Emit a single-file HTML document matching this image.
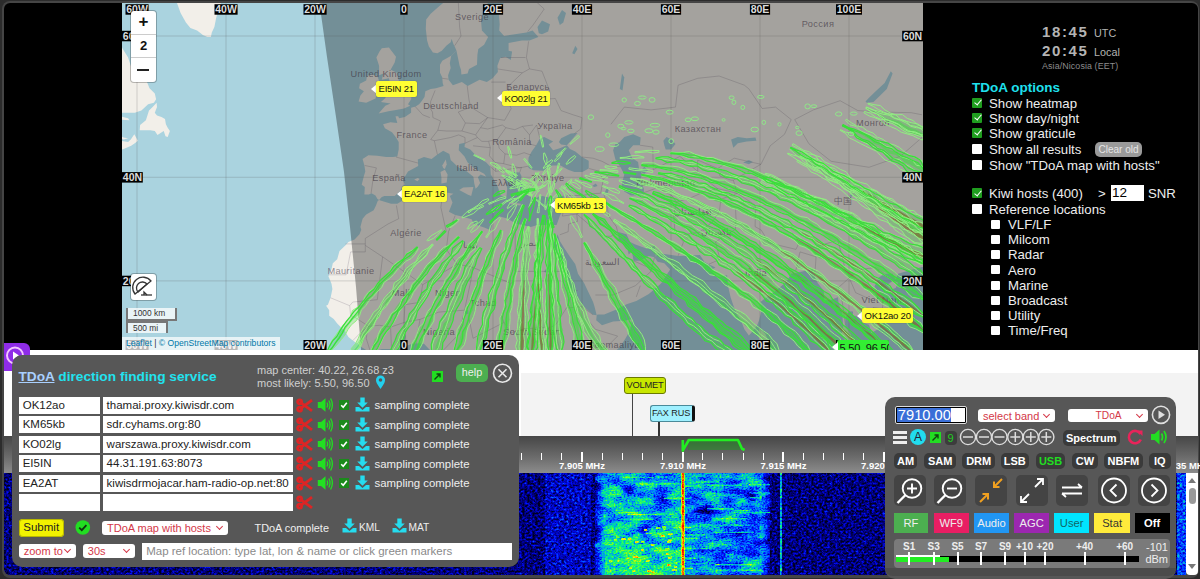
<!DOCTYPE html>
<html><head><meta charset="utf-8">
<style>
*{margin:0;padding:0;box-sizing:border-box}
html,body{width:1200px;height:579px;overflow:hidden;background:#2c2c2c;font-family:"Liberation Sans",sans-serif}
.a{position:absolute}
svg{display:block}
.mk{height:16px;font-size:9.5px;line-height:16px;color:#222;padding-left:2.5px;border-radius:2px;white-space:nowrap;letter-spacing:-0.2px;box-shadow:0 0 1px rgba(0,0,0,.5)}
.rp{color:#eee;font-size:13.2px;white-space:nowrap;line-height:14px}
.cb{width:10px;height:10px;background:#fff;border-radius:1px}
.cbg{background:#1f9d1f}
.cbg::after{content:"";position:absolute;left:3.5px;top:0.5px;width:3px;height:6px;border:solid #fff;border-width:0 1.5px 1.5px 0;transform:rotate(40deg)}
.cbs{width:9px;height:9px;background:#fff;border-radius:1px}
.inp{background:#fff;height:17px;font-size:11.5px;line-height:17px;color:#222;padding-left:4px;white-space:nowrap;overflow:hidden}
.samp{color:#eee;font-size:11.4px;white-space:nowrap;line-height:14px}
.sel{background:#fff;border-radius:3px;color:#d43848;font-size:11px;white-space:nowrap;line-height:14px;padding-left:5px}
.sel i{position:absolute;right:6px;top:3px;width:5px;height:5px;border:solid #d43848;border-width:0 1.5px 1.5px 0;transform:rotate(45deg)}
.mb{background:#3a3a3a;border-radius:5px;color:#fff;font-weight:bold;font-size:11px;text-align:center;line-height:16px;height:16px}
.ib{background:#444;border-radius:5px;width:32px;height:31px}
.tb{height:20px;font-size:11.2px;line-height:20px;text-align:center}
.sm{color:#eee;font-size:10px;font-weight:bold;text-align:center;width:20px;line-height:10px}
.tk{width:2px;height:13px;background:#fff;top:552px}
.fl{color:#fff;font-size:9.5px;font-weight:bold;white-space:nowrap;line-height:10px}
.mt{width:1px;background:#fff;top:453px;height:7px}
</style></head><body>
<!-- frame -->
<div class="a" style="left:1.5px;top:0.8px;width:1197px;height:577px;background:#454545;border-radius:8px"></div>
<!-- top black area -->
<div class="a" style="left:4px;top:3px;width:1194px;height:347px;background:#000;border-radius:6px 6px 0 0"></div>
<svg class="a" style="left:122px;top:3px" width="801" height="347" viewBox="0 0 801 347">
<rect width="801" height="347" fill="#f2efe9"/>
<polygon points="-29.5,359.9 -29.5,-26.0 323.4,-26.0 323.4,-1.9 316.3,4.0 308.7,10.8 304.2,16.6 303.8,25.8 305.1,37.4 306.9,43.5 310.9,49.5 315.4,50.3 319.8,47.8 324.3,42.7 328.7,39.2 329.6,35.7 331.4,40.9 332.7,43.5 334.5,47.8 329.2,52.8 326.1,54.5 320.3,57.8 318.0,61.8 318.0,69.8 320.3,74.5 320.7,79.9 321.6,82.9 314.0,85.2 308.7,85.9 303.4,88.2 302.5,94.1 299.4,98.4 297.1,101.3 293.6,103.4 289.1,104.8 289.1,109.7 282.9,113.9 277.1,115.2 276.2,113.2 273.5,113.2 275.3,120.0 268.6,119.3 261.1,121.3 262.9,125.3 270.0,129.3 274.0,134.5 276.7,139.0 276.7,146.6 275.3,153.4 270.9,154.0 264.2,154.0 255.3,152.8 246.4,152.2 240.6,155.9 242.4,162.5 243.3,168.4 241.9,173.1 239.7,181.8 242.8,184.0 242.4,191.4 246.8,191.4 249.5,190.2 253.5,192.5 255.3,195.8 257.1,196.9 255.7,198.0 254.0,202.4 251.7,207.2 244.2,211.5 240.6,215.7 238.4,224.1 239.3,226.7 237.5,231.3 232.6,236.4 226.4,238.9 223.3,242.4 217.5,247.9 215.2,256.3 210.8,260.2 209.5,266.0 206.4,273.2 209.5,280.8 210.4,285.9 208.6,294.8 205.9,301.7 204.1,302.7 207.2,307.2 207.2,312.7 211.7,315.9 215.2,320.5 219.7,325.0 222.8,327.7 226.4,334.0 230.8,337.6 235.3,340.7 239.7,344.3 246.4,348.3 248.6,349.2 259.8,346.1 268.6,346.1 273.1,347.4 282.0,343.8 288.7,341.2 294.0,340.3 302.0,340.7 306.5,345.6 310.9,349.6 319.8,348.8 324.3,351.4 324.3,359.9" fill="#aad3df" />
<polygon points="339.0,66.7 339.4,71.4 345.6,70.6 347.0,65.9 355.0,61.8 355.4,52.0 356.3,46.1 362.1,41.8 366.1,33.9 359.9,27.6 359.0,17.5 361.2,7.0 366.6,-0.9 366.6,-26.0 382.1,-26.0 382.1,-0.9 376.8,9.9 377.7,21.2 377.2,27.6 382.1,33.0 392.8,31.2 404.4,29.4 410.6,27.6 416.4,33.9 407.5,37.4 399.9,37.4 386.6,40.1 386.6,47.8 390.1,48.6 388.8,57.0 383.5,53.7 378.1,55.3 375.4,62.7 375.9,69.0 370.6,75.3 364.8,79.1 357.6,76.8 345.6,82.9 339.9,79.1 330.9,82.2 326.5,76.8 326.1,72.2 328.7,65.1 327.8,60.2 329.2,52.8 334.5,47.8 337.6,62.7" fill="#aad3df" />
<polygon points="257.1,196.9 259.8,194.1 262.4,193.0 272.7,193.0 278.0,188.0 280.7,182.9 282.9,181.2 280.7,177.2 286.0,168.4 296.2,163.1 295.8,156.5 302.0,154.0 309.6,155.9 315.4,151.6 321.2,147.8 327.4,150.9 328.7,157.1 336.3,164.3 343.4,167.3 351.4,173.7 352.3,180.6 353.6,185.7 355.9,183.5 358.1,180.1 355.9,174.3 358.5,171.4 364.3,173.7 362.1,170.8 353.2,166.1 345.6,159.5 342.5,153.4 336.7,147.2 337.2,140.9 343.0,139.7 342.5,144.1 348.3,146.6 355.0,153.4 364.3,159.5 368.3,163.7 368.8,171.4 371.9,176.6 375.9,184.0 378.6,192.5 384.4,194.1 385.2,185.7 383.5,177.2 382.6,172.5 387.5,173.1 391.0,169.0 397.7,169.6 399.5,173.1 398.6,177.8 402.1,182.9 403.9,190.2 406.6,193.0 413.7,195.8 418.2,192.5 424.4,194.1 433.3,195.2 441.8,192.5 441.3,198.0 441.8,202.9 440.0,208.3 437.8,213.1 434.6,222.0 425.7,222.0 415.5,222.0 408.8,224.1 393.7,220.5 384.4,215.2 377.7,213.6 371.0,218.4 368.8,227.2 362.1,224.6 351.9,221.0 349.6,216.3 339.9,213.6 333.2,212.0 326.9,208.8 330.5,199.6 327.8,193.0 331.4,190.8 325.6,189.7 320.3,191.9 310.9,190.8 299.8,191.9 286.4,194.1 275.3,200.7 269.1,200.7 258.4,197.4" fill="#aad3df" />
<polygon points="406.6,164.9 411.5,167.3 421.3,167.8 430.2,162.5 438.6,162.5 446.2,166.7 452.4,169.0 460.4,169.0 466.7,165.5 466.7,157.7 460.0,154.0 453.3,148.5 448.0,146.0 444.9,142.2 437.8,145.3 431.1,147.2 426.6,141.6 431.1,138.4 422.2,133.9 417.7,135.8 414.2,142.2 409.7,148.5 406.6,154.6 406.2,160.7" fill="#aad3df" />
<polygon points="439.1,141.6 444.9,142.2 448.9,137.7 455.5,130.0 448.9,130.6 439.1,135.2 436.9,139.0" fill="#aad3df" />
<polygon points="493.4,140.9 491.1,147.2 493.4,156.5 498.3,163.7 502.3,171.4 500.0,180.1 499.6,183.5 502.3,188.6 509.0,192.5 521.9,191.9 521.9,185.7 517.9,177.2 520.1,171.4 517.0,165.5 516.1,158.9 510.3,155.2 506.7,147.2 511.2,142.2 517.9,142.2 518.7,134.5 511.2,131.3 502.3,133.9 497.8,139.0" fill="#aad3df" />
<polygon points="541.4,137.7 544.5,133.9 549.9,136.5 553.5,140.9 549.0,146.6 543.7,146.6 542.3,142.2" fill="#aad3df" />
<polygon points="426.6,229.3 429.7,237.9 433.3,246.4 437.8,256.3 442.2,268.4 446.6,277.9 448.9,285.0 453.3,292.0 457.8,299.0 464.5,305.9 471.1,311.8 474.7,312.3 472.5,303.6 471.1,299.0 466.7,289.7 462.2,280.3 456.0,270.8 453.3,261.2 448.0,253.8 442.2,244.9 437.8,237.9 435.5,231.3 433.3,239.9" fill="#aad3df" />
<polygon points="495.6,228.7 504.5,231.3 508.1,238.9 513.4,241.4 524.5,245.4 532.5,242.9 533.0,247.4 533.9,253.8 532.5,254.3 526.8,252.9 517.9,257.8 511.6,257.8 509.8,248.4 506.7,251.4 505.4,245.9 500.9,241.4 496.9,236.4" fill="#aad3df" />
<polygon points="437.8,359.9 494.7,347.0 497.8,344.3 503.6,335.3 508.1,327.2 509.0,321.8 510.3,315.9 502.3,317.7 491.1,318.6 480.0,322.3 474.2,317.3 474.7,312.3 475.6,311.4 482.2,311.4 495.6,305.9 504.5,301.3 514.3,298.0 526.8,291.1 535.6,283.6 539.2,280.3 542.3,275.6 548.1,266.5 542.3,260.2 535.6,258.7 532.5,254.3 533.9,253.8 535.6,249.9 542.3,250.9 556.1,252.9 566.8,252.4 577.9,251.9 582.4,258.7 586.8,261.2 593.5,264.6 589.0,267.0 595.7,274.1 605.1,272.2 606.0,282.7 608.6,294.3 611.3,302.2 614.9,311.4 619.3,318.2 622.4,326.3 626.9,332.6 630.0,329.0 634.9,322.7 637.1,317.3 639.3,308.2 638.4,299.0 643.8,294.8 648.2,292.0 655.8,285.9 664.7,278.4 669.2,270.8 675.8,269.4 684.7,267.4 690.5,266.5 692.7,274.1 695.9,280.3 701.6,287.4 702.5,296.7 707.0,297.6 715.9,294.3 716.8,301.3 720.3,310.4 721.2,324.1 719.4,331.7 724.8,339.8 727.9,346.5 728.3,359.9 742.1,359.9 742.1,347.0 737.2,341.2 731.5,338.0 728.3,330.8 723.4,324.1 723.4,315.0 727.0,308.2 731.0,308.6 731.0,312.3 737.2,314.1 740.4,319.5 747.0,321.8 749.2,328.6 748.4,330.4 755.9,326.3 758.2,322.3 767.9,316.4 768.8,311.4 766.2,299.9 759.5,292.9 752.4,283.6 756.8,274.6 762.6,270.8 770.6,270.8 773.7,276.5 776.0,270.8 787.1,267.4 800.0,264.1 816.0,263.6 816.0,359.9" fill="#aad3df" />
<polygon points="259.8,45.2 266.9,44.6 274.0,53.7 272.7,59.4 268.6,66.7 274.9,69.8 276.7,77.6 281.1,81.4 282.4,85.9 283.3,88.9 289.6,91.9 289.1,96.2 286.0,101.3 288.2,102.7 282.0,105.5 274.0,106.9 266.4,108.3 256.6,110.4 263.3,102.7 268.6,100.6 258.9,99.1 263.8,94.8 261.1,91.1 267.8,86.7 268.6,82.2 266.9,75.3 259.8,76.8 261.5,70.6 257.1,72.2 257.1,62.7 254.4,54.5 257.5,48.6" fill="#f2efe9" />
<polygon points="255.3,73.0 257.5,79.1 254.9,82.9 255.3,89.7 253.5,95.5 244.2,99.8 236.6,98.4 238.4,92.6 241.9,88.2 237.1,85.2 237.9,80.7 244.2,77.6 245.1,73.0 249.5,71.4" fill="#f2efe9" />
<polygon points="337.2,186.9 341.2,184.6 351.4,184.0 349.2,193.0 345.6,191.4" fill="#f2efe9" />
<polygon points="318.5,169.0 322.9,166.7 325.6,171.4 324.7,179.5 319.4,180.6 319.4,174.3" fill="#f2efe9" />
<polygon points="320.3,162.5 323.8,156.5 324.7,161.3 322.9,166.1 321.2,164.9" fill="#f2efe9" />
<polygon points="386.6,199.1 399.0,200.7 398.1,202.4 388.8,201.3" fill="#f2efe9" />
<polygon points="425.7,202.4 428.9,200.2 436.0,198.5 433.3,202.4 428.9,204.5" fill="#f2efe9" />
<polygon points="292.2,176.6 295.8,174.9 297.6,176.0 295.4,178.3" fill="#f2efe9" />
<polygon points="637.1,325.0 643.3,330.8 646.0,337.6 642.5,342.1 638.0,342.1 636.7,333.1" fill="#f2efe9" />
<polygon points="765.3,281.7 771.5,277.5 776.0,279.4 773.7,285.0 769.3,286.4" fill="#f2efe9" />
<polygon points="50.6,-26.0 50.6,-4.9 55.0,0.1 58.6,9.9 63.9,19.4 68.4,24.9 75.1,27.6 80.9,32.1 85.3,33.9 88.9,33.9 89.8,29.4 92.4,24.0 94.2,14.7 96.9,5.0 100.9,-4.9 100.9,-26.0" fill="#f2efe9" />
<polygon points="175.2,-26.0 175.2,-4.9 181.9,-2.9 190.8,0.1 198.3,1.1 206.4,-1.9 213.0,-6.0 217.5,-10.1 217.5,-26.0" fill="#f2efe9" />
<polygon points="-29.5,29.4 -4.6,29.4 -2.8,37.4 0.8,46.1 6.1,54.5 8.8,62.7 12.8,68.2 17.2,72.2 24.8,78.4 27.5,85.2 32.8,90.4 34.1,96.2 31.9,99.8 26.1,101.3 19.4,107.6 12.8,109.7 3.9,109.7 -2.8,109.7 -29.5,109.7" fill="#f2efe9" />
<polygon points="34.6,99.8 30.6,104.1 27.0,107.6 23.9,117.3 18.1,122.0 17.7,127.3 28.3,127.3 32.8,128.0 35.5,131.9 41.7,128.0 43.5,133.2 45.7,133.9 47.9,128.0 45.7,124.7 43.9,121.3 43.0,115.9 39.5,113.9 35.0,112.5 32.8,109.7 35.0,104.1" fill="#f2efe9" />
<polygon points="-29.5,137.7 -2.8,137.7 6.1,139.0 8.8,136.5 12.3,131.3 15.9,137.7 12.8,140.3 9.2,142.8 1.6,146.0 -2.8,147.2 -29.5,147.2" fill="#f2efe9" />
<polygon points="-4.6,131.9 1.6,134.5 6.1,135.2 1.6,136.5 -2.8,135.2" fill="#f2efe9" />
<polygon points="-5.0,112.5 6.1,115.2 7.4,117.3 -0.6,116.6" fill="#f2efe9" />
<polygon points="744.8,99.8 751.5,99.1 758.2,92.6 764.8,85.9 770.6,70.6 768.8,68.2 762.6,79.9 753.7,88.2 747.0,94.8 743.5,98.4" fill="#aad3df" />
<polygon points="609.1,136.5 615.8,133.9 624.7,135.2 633.5,134.5 634.4,137.7 624.7,138.4 615.8,140.3 611.3,144.7" fill="#aad3df" />
<polygon points="415.5,24.0 420.0,17.5 428.0,21.2 426.2,28.5 420.0,31.2 416.8,30.3" fill="#aad3df" />
<polygon points="435.5,14.7 440.0,7.0 444.0,9.9 441.3,19.4 437.8,22.1" fill="#aad3df" />
<polygon points="621.1,159.5 626.9,157.1 630.9,158.9 626.9,161.3" fill="#aad3df" />
<polygon points="482.7,189.7 484.9,184.6 486.7,186.9 485.4,190.8" fill="#aad3df" />
<polygon points="470.2,182.9 473.8,180.6 475.6,182.9 472.5,184.0" fill="#aad3df" />
<polygon points="517.9,168.4 522.3,163.7 525.9,167.3 522.3,170.8" fill="#aad3df" />
<polygon points="450.2,50.3 453.3,42.7 455.5,46.1 452.4,51.2" fill="#aad3df" />
<polygon points="497.8,85.9 500.0,70.6 502.3,74.5 500.5,87.4" fill="#aad3df" />
<polygon points="435.5,-26.0 436.9,-10.1 443.5,-3.9 450.2,-7.0 455.5,-11.1 462.2,-11.1 466.7,-26.0" fill="#aad3df" />
<polygon points="742.6,309.5 747.0,311.4 745.7,312.7 741.7,310.9" fill="#aad3df" />
<polygon points="727.4,193.6 729.2,190.8 731.0,191.9 729.2,194.1" fill="#aad3df" />
<polygon points="342.1,308.2 346.1,306.8 346.5,310.4 343.4,311.4" fill="#aad3df" />
<polygon points="279.8,337.6 282.9,330.8 283.8,333.1 282.0,339.8" fill="#aad3df" />
<polygon points="422.2,268.4 428.4,259.7 429.7,260.7 423.5,269.8" fill="#aad3df" />
<g stroke="#978f9c" stroke-width="0.7" fill="none" stroke-opacity="0.5"><polyline points="336.3,-0.9 337.6,24.0 339.0,33.0 332.7,42.7"/><polyline points="414.6,-0.9 422.2,6.0 411.0,22.1 405.7,28.5"/><polyline points="406.6,38.3 404.4,54.5 407.5,65.9 420.0,68.2 427.5,87.4 422.2,96.2 402.1,99.8 387.0,100.6 386.6,82.9 400.4,69.8 407.5,65.9"/><polyline points="379.0,54.5 403.5,54.5"/><polyline points="375.4,65.9 400.4,69.8"/><polyline points="369.2,79.1 383.5,79.1"/><polyline points="345.2,82.9 347.0,97.0 348.8,104.1 365.7,114.6 382.6,117.3 389.2,105.5 387.0,100.6"/><polyline points="313.1,87.4 308.7,98.4 308.3,105.5 310.5,109.0 310.9,114.6 318.5,118.0 315.8,127.3 324.7,128.0 339.9,128.0 343.4,120.0 336.3,109.0 348.8,104.1"/><polyline points="320.3,75.3 326.1,76.1"/><polyline points="293.1,103.4 300.7,111.8 307.8,114.6"/><polyline points="315.8,127.3 308.7,136.5 312.3,137.7 315.4,151.6"/><polyline points="274.0,154.0 296.2,160.1"/><polyline points="242.8,162.5 254.4,164.9 250.9,177.2 249.1,190.2"/><polyline points="312.3,137.7 328.7,134.5 336.7,131.9 343.0,134.5 343.0,140.3"/><polyline points="339.9,128.0 353.6,131.9 358.5,124.7 365.7,126.0 380.3,122.0 383.9,124.7 375.4,136.5 365.7,138.4 359.9,138.4 355.4,134.5 353.6,131.9"/><polyline points="343.4,120.0 357.6,120.7 365.7,114.6"/><polyline points="358.5,124.7 365.7,114.6"/><polyline points="383.9,124.7 392.8,126.7 400.4,123.4 407.5,131.9 407.5,140.9 414.2,142.8"/><polyline points="409.3,152.2 402.1,149.7 394.6,152.2 383.0,150.9 377.2,145.3 375.4,136.5"/><polyline points="383.0,150.9 381.7,160.7 397.7,164.9 406.6,163.1"/><polyline points="366.6,138.4 368.3,144.7 367.4,152.8 373.2,159.5 381.7,160.7"/><polyline points="343.0,140.3 351.0,136.5 355.4,134.5"/><polyline points="351.0,142.8 368.3,144.7"/><polyline points="368.3,163.7 373.7,168.4 383.9,166.7 399.5,164.3 397.7,169.6"/><polyline points="373.2,159.5 373.7,168.4"/><polyline points="407.5,131.9 414.6,122.0 417.7,134.5"/><polyline points="400.4,123.4 411.0,122.0"/><polyline points="422.2,96.2 433.3,95.5 439.1,107.6 451.1,111.8 460.0,114.6 458.7,126.0 452.4,130.6"/><polyline points="467.1,165.5 475.6,167.8 481.4,176.0 478.7,190.2 470.2,190.8 460.0,192.5 445.3,192.5 443.1,196.9"/><polyline points="460.0,154.0 471.1,155.2 480.0,158.3 488.9,163.1 498.3,163.7"/><polyline points="475.6,167.8 488.9,168.4 482.2,176.0 481.4,176.0"/><polyline points="470.2,190.8 464.5,205.6 454.7,211.0 455.5,218.4 446.6,221.0 446.2,228.7 437.8,231.8"/><polyline points="443.1,196.9 440.4,213.1"/><polyline points="440.4,213.1 454.7,211.0"/><polyline points="454.7,211.0 468.9,223.1 480.9,232.8 488.9,233.4 495.6,228.7"/><polyline points="481.4,189.7 484.5,199.6 486.7,213.1 494.3,223.6 495.6,228.7"/><polyline points="473.4,292.0 491.1,292.0 513.4,282.7 529.0,268.4 527.6,265.0 511.6,257.8"/><polyline points="514.3,293.9 518.3,282.7"/><polyline points="529.0,268.4 532.5,254.3"/><polyline points="393.2,220.5 393.2,268.4 446.2,268.4"/><polyline points="333.2,212.6 326.5,228.7 324.3,246.4 335.0,261.2 348.8,263.6 388.8,280.3 393.2,277.9"/><polyline points="320.3,191.9 318.9,204.5 324.3,228.7"/><polyline points="388.8,280.3 382.1,305.9 379.0,312.7 382.1,319.5"/><polyline points="382.1,319.5 388.8,329.9 402.1,325.9 428.9,324.1 433.7,321.8"/><polyline points="444.4,305.0 433.7,321.8 435.5,337.6 437.8,346.5"/><polyline points="444.4,305.0 451.1,288.3 455.5,287.4"/><polyline points="444.4,305.0 460.0,303.6 471.1,311.8"/><polyline points="473.4,326.3 495.6,333.1 482.2,346.5"/><polyline points="468.0,319.5 473.4,326.3"/><polyline points="274.4,202.4 276.7,215.7 266.0,221.0 243.3,235.4 243.3,242.4 260.6,253.8 287.3,272.2 300.7,281.7 335.0,261.2"/><polyline points="243.3,242.4 243.3,248.9 228.6,248.9 224.1,271.8 206.4,271.8"/><polyline points="223.3,240.9 243.3,240.9"/><polyline points="260.6,253.8 255.3,296.7 230.8,299.0 227.7,302.7"/><polyline points="208.6,294.8 227.7,302.7 228.6,312.7 231.7,313.6 246.4,323.2 257.5,322.3 268.6,324.1 282.0,319.5 298.0,316.4"/><polyline points="300.7,281.7 297.6,299.4 282.9,301.7 282.0,319.5"/><polyline points="298.0,316.4 316.7,309.1 342.5,307.2"/><polyline points="342.5,307.2 337.2,330.8 320.3,348.3"/><polyline points="351.0,263.6 348.8,277.9 342.5,307.2"/><polyline points="351.0,335.3 379.9,320.5 382.1,319.5"/><polyline points="346.5,312.7 351.0,335.3"/><polyline points="268.6,324.1 269.5,346.5"/><polyline points="282.0,319.5 284.2,341.2"/><polyline points="294.0,340.3 298.0,316.4"/><polyline points="246.4,323.2 244.2,335.3 248.6,349.2"/><polyline points="230.8,337.6 237.5,330.8 246.4,323.2"/><polyline points="488.9,121.3 502.3,104.1 529.0,106.9 553.5,104.1 556.1,82.2 575.7,75.3 597.1,73.0 622.4,82.2 626.9,85.9 640.2,105.5 653.6,104.1 669.2,116.6"/><polyline points="669.2,116.6 662.5,131.3 648.2,142.8 638.9,161.3"/><polyline points="638.9,161.3 612.2,155.2 595.7,165.5 575.7,157.1 575.7,168.4 557.9,153.4 531.2,166.7 530.8,144.1 517.9,142.2"/><polyline points="521.9,189.7 535.6,184.6 550.3,193.0 554.3,199.1"/><polyline points="554.3,199.1 551.7,213.1 553.0,229.3 560.1,231.8 577.5,229.3 590.4,218.9 597.5,208.3 598.8,196.3 615.3,190.2"/><polyline points="554.3,199.1 569.0,194.7 580.2,189.7 595.7,185.7 615.3,190.2"/><polyline points="553.0,229.3 561.5,238.9 556.1,252.9"/><polyline points="613.5,205.1 614.0,215.7 613.5,226.2 593.5,238.9 598.0,256.3 586.8,261.2"/><polyline points="633.5,202.4 633.1,223.6 639.3,227.2 646.9,239.9 674.0,246.4 677.2,239.4 691.4,244.4 713.7,237.9"/><polyline points="673.6,268.4 678.0,248.9 694.1,253.8 692.7,273.2"/><polyline points="715.9,237.9 720.3,253.8 723.4,267.9 731.9,270.8"/><polyline points="731.9,270.8 715.9,285.0 720.3,299.0 723.4,321.8"/><polyline points="736.8,266.5 744.8,277.9 760.8,301.3 760.4,305.9"/><polyline points="727.9,276.5 733.7,289.7 749.2,296.7"/><polyline points="738.1,315.0 751.5,304.5 760.4,305.9"/><polyline points="753.7,320.5 751.5,304.5"/><polyline points="736.8,266.5 753.7,264.6 762.6,270.8"/><polyline points="672.7,116.6 687.0,140.9 709.2,158.3 747.0,164.3 778.2,153.4 800.0,134.5"/><polyline points="672.7,116.6 691.4,106.9 718.1,97.7 735.9,107.6 755.9,109.0 789.3,109.7 800.0,111.8"/><polyline points="638.9,161.3 611.3,177.2 615.3,190.2 633.5,202.4"/><polyline points="595.7,165.5 598.0,173.1 609.1,177.2 611.3,177.2"/><polyline points="575.7,168.4 584.6,177.2 595.7,185.7"/><polyline points="-0.1,128.0 -0.1,128.0"/></g>
<g font-family="Liberation Sans" font-size="9.2" fill="#5a4d60" fill-opacity="0.65" letter-spacing="0.4"><text x="350.0" y="17.2" text-anchor="middle">Sverige</text><text x="264.0" y="74.2" text-anchor="middle">United Kingdom</text><text x="329.0" y="106.2" text-anchor="middle">Deutschland</text><text x="406.0" y="87.2" text-anchor="middle">Беларусь</text><text x="290.0" y="135.2" text-anchor="middle">France</text><text x="433.0" y="126.2" text-anchor="middle">Україна</text><text x="390.0" y="141.8" text-anchor="middle">România</text><text x="345.5" y="167.7" text-anchor="middle">Italia</text><text x="267.0" y="178.2" text-anchor="middle">España</text><text x="383.0" y="183.2" text-anchor="middle">Ελλάς</text><text x="576.0" y="128.7" text-anchor="middle">Казахстан</text><text x="543.0" y="183.2" text-anchor="middle">Türkmenistan</text><text x="751.0" y="123.2" text-anchor="middle">Монгол</text><text x="696.0" y="24.2" text-anchor="middle">Россия</text><text x="284.0" y="233.2" text-anchor="middle">Algérie</text><text x="229.0" y="271.2" text-anchor="middle">Mauritanie</text><text x="279.0" y="293.2" text-anchor="middle">Mali</text><text x="325.0" y="293.2" text-anchor="middle">Niger</text><text x="361.0" y="303.2" text-anchor="middle">Tchad</text><text x="317.0" y="332.2" text-anchor="middle">Nigeria</text><text x="410.0" y="332.2" text-anchor="middle">South Sudan</text><text x="492.0" y="345.2" text-anchor="middle">Soomaaliya</text><text x="634.0" y="273.2" text-anchor="middle">India</text><text x="721.0" y="201.2" text-anchor="middle">中国</text><text x="760.0" y="300.2" text-anchor="middle">Viet Nam</text><text x="480.0" y="262.2" text-anchor="middle">السعودية</text><text x="571.0" y="212.2" text-anchor="middle">افغانستان</text><text x="594.0" y="232.2" text-anchor="middle">پاکستان</text><text x="426.0" y="178.2" text-anchor="middle">Türkiye</text><text x="408.0" y="243.2" text-anchor="middle">مصر</text><text x="348.0" y="245.2" text-anchor="middle">ليبيا</text></g>
<polygon points="197.0,-3.0 205.0,54.0 214.0,114.0 222.0,169.0 228.0,224.0 234.0,284.0 239.0,347.0 801,347 801,0" fill="#000" fill-opacity="0.32"/>
<g stroke="#555" stroke-opacity="0.22" stroke-width="1"><line x1="15.0" y1="0" x2="15.0" y2="347" /><line x1="104.0" y1="0" x2="104.0" y2="347" /><line x1="193.0" y1="0" x2="193.0" y2="347" /><line x1="282.0" y1="0" x2="282.0" y2="347" /><line x1="371.0" y1="0" x2="371.0" y2="347" /><line x1="460.0" y1="0" x2="460.0" y2="347" /><line x1="549.0" y1="0" x2="549.0" y2="347" /><line x1="638.0" y1="0" x2="638.0" y2="347" /><line x1="727.0" y1="0" x2="727.0" y2="347" /><line x1="0" y1="33.0" x2="801" y2="33.0" /><line x1="0" y1="174.3" x2="801" y2="174.3" /><line x1="0" y1="277.9" x2="801" y2="277.9" /></g>
<g fill="rgba(60,215,60,0.28)" stroke="none"><polygon points="295.7,244.9 289.9,247.4 284.6,250.5 281.9,256.6 275.7,258.7 270.9,262.5 268.1,268.2 263.7,272.4 259.4,276.6 255.6,281.3 251.2,285.5 246.3,289.2 242.7,294.1 240.7,300.3 235.8,304.1 230.4,307.5 228.9,313.9 224.6,318.2 220.6,322.8 217.1,327.7 213.6,332.6 210.0,337.5 207.3,342.9 205.5,349.0 205.4,349.6 206.7,350.4 207.5,350.2 211.3,345.6 215.5,341.2 219.3,336.6 223.1,331.9 225.9,326.6 229.4,321.8 234.1,317.9 237.5,313.0 239.4,306.9 243.8,302.7 246.9,297.6 251.4,293.5 255.1,288.9 259.5,284.8 262.2,279.2 267.3,275.8 271.5,271.6 275.2,266.9 279.6,262.8 283.6,258.3 289.1,255.6 293.1,251.1 296.4,245.8"/><polygon points="310.2,240.9 306.0,245.1 300.3,248.1 296.7,253.0 293.9,258.5 288.7,261.9 283.9,265.8 281.0,271.3 277.7,276.3 272.3,279.8 270.8,286.2 266.4,290.5 262.4,295.0 259.3,300.2 256.5,305.5 251.5,309.5 248.6,314.8 245.2,319.7 241.6,324.6 238.6,329.8 236.2,335.4 233.4,340.8 229.4,345.3 229.3,349.6 230.3,350.2 233.6,347.9 238.6,344.0 240.6,338.1 242.8,332.5 247.2,328.1 251.6,323.9 253.3,317.9 257.3,313.4 259.5,307.7 264.2,303.6 267.4,298.6 270.5,293.4 273.5,288.2 277.3,283.6 282.0,279.7 286.2,275.4 288.4,269.5 291.3,264.1 295.4,259.8 300.5,256.4 304.8,252.2 307.3,246.4 310.8,241.4"/><polygon points="335.8,233.1 331.4,237.2 327.6,242.0 321.6,244.5 317.2,248.7 314.1,254.1 309.3,257.9 304.8,262.0 301.5,267.1 298.0,272.1 294.5,277.0 290.1,281.2 288.0,287.2 284.1,291.8 279.9,296.2 277.8,302.1 274.2,306.9 269.1,310.8 266.4,316.2 263.2,321.3 258.9,325.8 256.3,331.2 254.8,337.3 251.4,342.3 248.6,347.6 249.7,349.8 250.3,350.2 253.1,350.2 256.1,345.0 259.0,339.8 261.3,334.2 264.7,329.2 268.4,324.5 271.7,319.5 274.7,314.4 277.3,309.0 280.4,303.8 285.1,299.8 288.9,295.2 291.3,289.6 294.9,284.8 298.7,280.2 302.2,275.4 305.1,270.1 309.4,265.8 312.7,260.9 318.2,257.7 321.8,252.9 324.6,247.4 329.2,243.6 332.8,238.7 337.1,234.5"/><polygon points="340.5,237.8 335.5,241.5 330.6,245.3 329.2,251.8 324.9,256.1 320.1,260.1 317.2,265.4 313.7,270.3 310.0,275.1 306.1,279.7 304.9,286.1 299.7,290.0 297.2,295.5 294.9,301.2 291.7,306.2 287.4,310.7 285.8,316.7 282.6,321.8 278.9,326.7 275.2,331.5 273.1,337.2 270.5,342.7 268.0,348.1 269.6,349.8 270.4,350.2 271.6,350.0 276.4,345.7 279.2,340.4 281.8,335.0 283.4,329.1 286.7,324.1 291.1,319.7 293.9,314.4 295.3,308.3 298.6,303.4 302.1,298.5 305.4,293.5 308.0,288.1 310.3,282.4 314.3,277.9 318.6,273.6 321.6,268.5 324.4,263.2 327.5,258.0 331.1,253.3 335.9,249.4 338.9,244.2 341.2,238.4"/><polygon points="359.2,228.0 355.7,232.9 351.6,237.3 346.4,241.0 344.5,247.1 341.0,252.0 335.7,255.7 332.5,260.9 330.1,266.5 327.5,272.0 323.3,276.5 321.4,282.4 317.5,287.2 314.8,292.5 312.1,297.9 310.0,303.6 305.8,308.3 303.5,313.9 301.9,319.8 297.1,324.2 295.4,330.0 293.0,335.6 289.8,340.7 288.7,346.8 290.4,349.7 291.7,350.3 294.6,349.5 298.3,344.6 301.0,339.2 302.2,333.2 305.3,328.1 308.7,323.1 311.9,318.0 312.2,311.5 314.7,306.1 319.4,301.7 321.6,296.2 324.5,291.0 325.7,284.8 328.7,279.6 333.8,275.7 337.1,270.8 338.9,264.9 340.6,258.9 345.2,254.8 348.0,249.5 353.0,245.7 355.0,239.9 357.5,234.2 360.6,229.1"/><polygon points="357.9,244.7 354.1,249.4 349.8,254.0 346.4,259.1 342.9,264.1 341.5,270.1 339.2,275.7 334.7,280.3 333.1,286.2 331.6,292.1 327.8,297.0 326.1,302.9 324.8,308.8 321.1,313.8 317.7,318.9 316.6,325.0 313.2,330.2 310.9,335.7 309.2,341.5 309.7,348.1 310.5,349.4 313.3,350.5 316.9,350.9 320.4,345.9 320.8,339.6 324.1,334.5 325.9,328.8 328.7,323.4 330.9,317.9 331.9,311.8 334.3,306.4 337.4,301.2 340.3,296.0 341.6,290.0 343.2,284.2 345.5,278.7 349.0,273.7 350.6,267.8 353.3,262.5 354.8,256.6 357.3,251.2 359.8,245.7"/><polygon points="379.5,227.8 375.3,232.5 373.0,238.1 370.9,243.7 366.8,248.5 363.7,253.8 363.3,260.1 360.2,265.4 357.0,270.6 356.4,276.8 354.1,282.4 351.5,287.8 349.3,293.4 347.9,299.3 344.1,304.3 342.2,310.1 341.4,316.1 338.5,321.5 335.2,326.8 334.6,332.9 334.1,339.1 332.1,344.7 332.8,349.6 334.4,350.1 338.1,346.7 342.3,341.8 343.9,336.0 344.5,329.9 346.0,324.0 349.1,318.8 351.6,313.3 353.3,307.6 354.1,301.5 356.2,295.9 358.9,290.5 360.2,284.7 361.2,278.6 362.8,272.8 365.3,267.4 369.5,262.6 370.7,256.6 371.9,250.7 373.7,245.0 377.4,240.0 379.8,234.6 380.8,228.4"/><polygon points="401.2,202.1 398.8,207.6 395.8,212.9 393.3,218.4 391.1,224.0 389.6,229.8 386.0,235.0 384.0,240.6 383.8,246.9 379.1,251.7 377.7,257.6 377.1,263.7 375.0,269.4 373.3,275.1 372.4,281.1 369.1,286.4 366.3,291.9 366.5,298.2 364.4,303.8 361.3,309.3 360.3,315.2 360.5,321.5 357.8,327.0 356.0,332.7 355.2,338.7 354.6,344.8 354.4,349.6 356.9,350.2 358.6,345.8 360.9,340.2 364.5,334.9 365.2,328.9 366.4,323.0 366.4,316.8 368.3,311.1 372.3,306.0 373.6,300.2 373.2,293.8 374.3,287.9 377.0,282.4 378.6,276.7 380.3,270.9 382.3,265.3 382.2,259.0 385.0,253.6 387.6,248.2 388.8,242.3 390.4,236.5 392.3,230.8 395.1,225.5 396.7,219.7 399.0,214.2 400.2,208.2 402.4,202.6"/><polygon points="402.7,215.7 400.1,221.2 398.4,227.0 396.6,232.8 395.1,238.6 395.4,244.8 392.6,250.4 391.0,256.2 389.6,262.1 388.0,267.9 386.6,273.8 385.2,279.6 384.5,285.6 382.3,291.3 382.4,297.5 382.3,303.5 380.4,309.3 377.8,315.0 378.2,321.1 377.4,327.1 375.0,332.8 373.8,338.7 375.8,345.1 376.4,349.8 379.9,350.3 382.1,346.0 383.4,340.2 386.0,334.5 387.3,328.6 387.6,322.6 388.1,316.6 387.9,310.6 389.9,304.8 390.2,298.8 391.0,292.8 390.6,286.7 392.7,281.0 393.2,275.0 394.9,269.2 396.4,263.4 396.3,257.3 396.4,251.2 400.1,245.9 401.4,240.1 402.4,234.2 401.4,227.8 402.4,221.8 404.4,216.2"/><polygon points="406.1,223.7 403.3,229.4 402.3,235.4 402.0,241.4 401.5,247.4 401.1,253.4 399.8,259.4 399.6,265.4 398.8,271.4 399.6,277.4 397.9,283.4 397.2,289.3 397.1,295.4 396.6,301.4 395.3,307.3 396.6,313.4 395.8,319.4 395.5,325.4 393.4,331.4 395.3,337.4 393.6,343.4 395.5,349.4 399.0,350.0 400.6,350.0 404.2,349.6 406.0,343.6 406.7,337.6 404.8,331.6 405.8,325.6 406.1,319.7 406.4,313.7 405.3,307.7 404.5,301.6 406.0,295.7 407.1,289.8 407.7,283.8 405.9,277.7 404.8,271.7 406.3,265.8 406.6,259.8 408.4,253.9 406.9,247.8 406.6,241.8 407.2,235.9 408.0,229.9 407.6,223.9"/><polygon points="422.1,212.5 420.0,218.3 418.1,224.1 418.8,230.3 417.7,236.2 415.2,242.0 415.6,248.0 416.1,254.1 412.8,259.9 412.2,265.8 412.9,271.9 411.9,277.9 409.9,283.7 412.0,289.9 410.7,295.9 409.3,301.8 408.1,307.7 410.1,313.9 406.4,319.6 406.5,325.7 407.5,331.8 405.4,337.6 404.6,343.6 408.0,349.8 409.5,350.0 410.6,350.0 412.5,350.1 415.7,344.3 415.4,338.3 415.9,332.3 415.8,326.3 416.4,320.4 417.2,314.4 416.7,308.4 418.2,302.5 416.2,296.3 416.6,290.3 419.3,284.5 419.2,278.5 418.4,272.4 418.3,266.4 419.2,260.5 421.3,254.7 421.0,248.6 420.9,242.6 420.5,236.5 421.6,230.6 423.9,224.8 423.4,218.7 422.9,212.6"/><polygon points="415.3,215.6 415.5,221.6 413.2,227.6 413.0,233.6 413.7,239.6 414.6,245.7 411.7,251.7 413.9,257.7 414.9,263.7 412.4,269.7 413.6,275.7 414.5,281.7 414.5,287.7 413.4,293.8 413.9,299.8 414.5,305.8 413.9,311.8 414.6,317.8 415.6,323.7 414.2,329.8 414.4,335.8 416.7,341.7 417.4,347.7 418.5,350.1 421.2,349.9 423.3,347.4 423.6,341.3 422.2,335.4 421.2,329.4 423.7,323.3 422.3,317.4 422.3,311.4 421.0,305.5 420.6,299.5 420.5,293.5 420.8,287.5 419.2,281.5 419.4,275.5 418.8,269.6 419.1,263.6 419.2,257.6 417.9,251.6 417.1,245.6 418.1,239.6 419.2,233.6 418.6,227.7 416.9,221.7 416.4,215.7"/><polygon points="425.7,217.1 425.0,223.1 425.6,229.1 423.7,235.1 422.7,241.1 424.0,247.1 424.5,253.1 424.1,259.2 424.9,265.2 425.0,271.2 422.5,277.2 423.4,283.2 425.0,289.2 424.1,295.2 423.0,301.2 423.7,307.2 423.1,313.2 424.1,319.2 424.5,325.2 425.0,331.2 423.4,337.3 424.1,343.3 426.8,349.2 427.3,350.1 430.6,349.9 431.0,349.0 432.6,343.0 432.2,337.0 433.0,330.9 432.3,325.0 431.4,319.0 431.8,313.0 430.7,307.0 430.9,301.0 430.5,295.0 430.1,289.0 430.3,283.1 429.7,277.1 429.5,271.1 429.4,265.1 428.7,259.1 428.0,253.1 429.5,247.1 430.0,241.1 429.2,235.1 427.9,229.1 427.6,223.1 427.5,217.1"/><polygon points="428.2,219.9 426.4,226.0 426.6,232.0 428.2,237.9 427.0,244.0 427.5,250.0 427.9,256.0 428.5,262.0 428.3,268.0 430.3,273.9 429.2,280.0 428.5,286.1 430.1,292.0 431.4,297.9 430.1,304.0 431.1,310.0 432.2,315.9 431.8,322.0 431.9,328.0 432.3,334.0 433.3,339.9 434.5,345.8 437.5,350.0 438.4,350.0 440.4,345.3 442.0,339.1 441.2,333.2 439.0,327.4 438.8,321.4 438.1,315.4 439.5,309.3 438.6,303.3 435.7,297.5 436.2,291.5 436.6,285.4 436.5,279.5 434.5,273.6 433.2,267.7 433.5,261.6 434.2,255.6 433.2,249.7 431.3,243.8 431.0,237.8 429.9,231.8 430.8,225.8 429.6,219.8"/><polygon points="431.5,231.2 431.5,237.3 430.8,243.6 433.6,249.1 434.9,255.0 435.6,261.0 437.7,266.7 438.9,272.6 439.6,278.6 439.7,284.7 441.8,290.4 443.6,296.1 444.4,302.1 446.1,307.9 447.8,313.7 447.7,319.9 450.3,325.4 452.1,331.2 451.8,337.4 454.4,343.0 458.0,348.2 460.0,350.3 462.8,349.5 464.2,346.6 462.5,340.9 461.6,334.9 460.0,329.1 459.9,323.0 458.2,317.2 455.6,311.7 452.8,306.2 452.8,300.0 451.9,294.1 449.3,288.6 446.8,283.0 445.9,277.1 444.3,271.3 442.6,265.5 442.0,259.5 438.5,254.2 438.7,248.0 437.3,242.2 435.6,236.4 432.2,231.0"/><polygon points="433.6,236.2 435.4,241.9 436.1,247.9 435.3,254.4 438.4,259.8 440.0,265.6 441.8,271.4 443.9,277.0 446.6,282.5 447.1,288.7 449.4,294.2 452.2,299.6 453.5,305.7 454.0,312.0 459.1,316.4 460.9,322.3 462.0,328.7 465.6,333.8 469.4,338.8 471.7,345.1 477.1,349.3 483.8,351.2 485.2,351.3 486.9,348.5 486.5,347.6 482.7,343.2 478.9,339.2 477.6,333.1 474.2,328.6 469.6,324.6 467.4,319.1 465.3,313.6 463.7,307.9 460.9,302.6 457.3,297.7 454.5,292.4 453.2,286.5 451.9,280.6 448.6,275.5 447.2,269.6 444.4,264.2 444.1,258.1 441.7,252.6 440.4,246.7 436.3,241.7 434.6,235.9"/><polygon points="461.8,240.2 463.6,246.1 467.1,251.0 468.9,256.8 470.2,262.9 473.6,267.9 477.1,272.8 479.5,278.4 481.5,284.1 485.7,288.6 486.7,294.9 489.6,300.2 493.7,304.8 496.4,310.2 497.8,316.2 501.6,321.0 505.2,325.9 506.8,331.8 510.0,336.9 513.9,341.6 517.4,346.6 521.5,350.8 523.4,349.8 523.4,343.3 522.4,337.0 519.9,331.5 516.3,326.6 512.2,322.1 509.9,316.4 507.1,311.2 504.4,305.8 501.0,300.8 497.4,296.0 495.4,290.2 493.4,284.5 489.3,279.9 484.8,275.5 482.0,270.1 480.0,264.4 477.4,259.0 473.8,254.1 469.6,249.6 467.0,244.2 463.9,239.0"/><polygon points="461.9,211.9 466.0,216.3 467.8,222.9 473.0,226.2 476.9,230.8 480.9,235.2 485.4,239.3 489.1,244.0 493.6,248.0 497.4,252.7 502.4,256.2 506.2,260.9 509.6,266.0 514.7,269.3 518.5,274.0 521.5,279.5 526.0,283.6 531.7,286.4 534.4,292.2 538.3,296.8 543.6,300.0 547.4,304.7 551.9,308.7 556.5,312.6 561.1,316.6 564.9,321.3 569.4,325.3 574.2,329.0 579.1,332.6 582.8,337.7 589.1,339.6 593.0,344.5 597.8,348.6 603.9,350.6 610.4,351.3 610.4,351.3 611.5,348.8 611.7,348.4 607.3,344.1 602.0,341.8 598.3,336.9 593.4,333.7 587.4,331.9 583.1,327.8 579.1,323.2 573.9,320.2 570.2,315.3 564.8,312.4 560.5,308.3 556.1,304.3 552.9,298.9 547.9,295.6 542.2,292.8 537.9,288.6 534.9,283.1 531.0,278.5 526.7,274.4 520.7,271.9 516.9,267.3 513.1,262.6 510.1,257.1 504.3,254.4 500.5,249.7 496.6,245.2 493.1,240.2 489.1,235.7 483.3,233.0 479.6,228.3 475.6,223.8 471.7,219.2 467.1,215.3 462.5,211.4"/><polygon points="471.0,211.4 474.9,216.0 478.2,221.3 483.6,224.2 488.5,227.8 491.9,233.0 496.1,237.3 501.1,240.6 504.7,245.6 509.5,249.3 514.0,253.3 518.5,257.2 523.0,261.3 527.1,265.7 531.7,269.5 535.3,274.4 539.9,278.3 546.0,280.5 549.7,285.3 553.0,290.8 557.9,294.2 563.4,297.1 566.1,303.1 571.3,306.3 576.3,309.7 580.3,314.2 585.0,317.9 590.5,320.9 594.2,325.7 598.2,330.3 603.7,333.1 608.2,337.1 611.4,342.6 616.5,346.0 622.0,348.8 626.7,352.6 629.1,351.1 631.1,348.6 631.7,346.3 627.0,342.5 623.2,337.8 619.4,333.1 614.9,329.2 609.9,325.9 604.4,323.1 600.2,318.7 595.2,315.3 590.9,311.2 586.6,307.0 580.7,304.6 577.0,299.7 573.6,294.5 568.1,291.7 563.4,288.0 558.1,284.9 553.8,280.7 550.0,276.0 545.4,272.2 539.7,269.5 535.9,264.7 531.9,260.2 528.1,255.5 522.1,253.1 518.0,248.8 512.5,245.9 508.9,241.0 505.2,236.1 500.4,232.5 495.0,229.6 490.1,226.0 486.0,221.5 482.6,216.4 476.6,214.1 471.5,210.8"/><polygon points="491.8,217.2 496.9,220.5 500.8,225.3 504.9,229.8 510.5,232.3 515.7,235.4 519.7,240.1 524.0,244.4 530.4,245.8 534.6,250.2 538.9,254.4 544.6,256.8 548.9,261.1 553.0,265.6 558.6,268.2 563.2,272.0 567.3,276.5 572.3,279.9 577.3,283.1 581.3,287.9 586.2,291.2 590.8,295.1 595.0,299.5 599.1,303.9 605.1,306.0 609.2,310.4 613.3,314.8 618.5,317.9 623.7,321.1 627.3,326.1 632.2,329.6 636.8,333.3 641.4,337.1 645.2,341.8 649.3,346.0 654.5,349.2 656.9,351.0 658.6,349.4 657.0,346.9 654.9,340.5 650.4,336.4 646.7,331.4 641.6,328.0 636.8,324.3 631.9,320.7 627.7,316.4 623.7,311.8 618.5,308.6 612.7,306.2 608.3,302.1 604.4,297.3 599.9,293.4 594.6,290.4 589.2,287.5 585.2,282.8 581.4,278.0 575.8,275.3 570.4,272.5 565.8,268.7 561.1,264.9 557.3,259.9 551.9,257.1 545.9,255.2 541.1,251.5 537.3,246.7 532.7,242.7 527.2,240.1 522.3,236.6 517.3,233.2 513.1,228.8 507.9,225.7 503.3,221.9 497.7,219.4 492.6,216.1"/><polygon points="483.9,200.9 488.3,205.2 493.6,207.9 498.3,211.7 503.7,214.3 508.6,217.9 514.7,219.5 519.1,223.7 524.2,226.9 529.4,229.8 534.2,233.5 539.1,236.9 544.4,239.8 549.6,242.7 553.4,247.9 559.0,250.2 564.5,252.8 568.1,258.2 574.4,259.6 579.4,262.9 583.5,267.4 587.9,271.7 594.4,272.8 598.7,277.1 602.7,281.7 608.0,284.6 613.5,287.2 616.9,292.7 622.3,295.4 627.8,298.1 630.9,303.8 636.4,306.5 641.7,309.6 645.3,314.5 649.7,318.6 655.3,321.2 658.9,326.1 662.2,331.3 667.6,334.3 672.1,338.1 675.7,343.0 680.4,346.7 685.7,349.8 687.2,350.7 689.2,348.9 688.2,347.6 685.5,341.8 680.9,337.9 677.4,332.8 673.4,328.2 668.1,324.9 663.2,321.3 658.6,317.4 655.0,312.3 649.8,309.2 644.6,305.9 640.3,301.8 635.9,297.6 631.7,293.2 626.8,289.7 620.6,287.8 616.2,283.6 611.3,280.1 606.9,276.0 602.0,272.5 596.8,269.4 591.2,266.9 587.0,262.5 581.8,259.4 576.8,256.1 571.6,253.0 566.1,250.4 561.8,246.0 557.1,242.2 552.0,239.1 546.2,237.0 541.3,233.5 536.7,229.6 531.7,226.1 526.5,223.2 520.5,221.4 515.7,217.9 511.1,213.8 505.6,211.3 500.3,208.4 495.0,205.6 489.6,203.0 484.8,199.3"/><polygon points="506.9,203.3 511.8,206.8 516.8,210.2 522.6,212.0 527.2,216.1 532.5,218.9 537.9,221.5 543.0,224.8 547.0,229.7 553.4,230.6 558.3,234.2 562.8,238.2 568.1,241.1 574.2,242.6 577.7,248.2 582.4,251.9 589.2,252.5 593.9,256.3 597.2,261.9 602.8,264.4 608.5,266.7 612.6,271.2 617.8,274.3 622.4,278.1 626.8,282.2 631.3,286.1 636.9,288.7 640.9,293.2 644.5,298.2 650.8,300.0 654.5,304.9 659.4,308.4 663.4,312.8 669.3,315.1 671.6,321.5 677.2,324.2 681.5,328.4 685.6,332.7 688.8,337.9 694.6,340.6 698.9,344.8 703.3,348.8 708.5,350.5 709.3,349.7 707.5,344.6 705.3,338.3 700.9,334.2 695.5,331.0 690.7,327.4 686.8,322.6 683.5,317.4 677.7,314.7 673.2,310.8 668.4,307.0 664.6,302.2 660.4,297.8 654.5,295.5 650.3,291.1 644.4,288.8 640.2,284.4 635.8,280.2 631.5,276.0 626.1,273.2 620.7,270.2 616.3,266.1 612.0,261.8 606.1,259.7 601.3,256.1 595.8,253.4 591.9,248.4 587.3,244.5 580.8,243.5 575.3,240.8 570.7,236.9 566.6,232.0 561.2,229.3 554.9,228.1 549.5,225.5 545.0,221.3 539.8,218.2 534.6,215.2 528.7,213.5 523.5,210.4 518.7,206.6 513.5,203.6 507.5,202.2"/><polygon points="508.2,194.9 513.6,197.3 518.3,201.4 523.5,204.4 528.9,207.0 534.2,209.8 539.0,213.4 544.8,215.3 550.0,218.2 555.0,221.5 560.8,223.4 565.5,227.2 570.1,231.1 576.0,233.0 580.9,236.4 585.0,241.0 590.1,244.1 595.8,246.4 600.1,250.6 604.9,254.2 610.6,256.5 614.6,261.2 619.1,265.2 624.3,268.2 629.1,271.7 632.9,276.5 637.9,279.8 643.1,282.8 647.4,287.1 651.4,291.6 656.6,294.7 662.0,297.4 664.7,303.5 670.8,305.6 675.3,309.5 679.1,314.2 683.6,318.2 687.9,322.3 692.3,326.3 696.5,330.5 700.6,335.0 704.8,339.2 709.0,343.4 713.5,347.4 719.5,349.8 722.7,351.3 725.3,348.7 723.6,345.7 720.7,340.0 717.5,334.7 712.4,331.3 707.7,327.4 703.6,323.0 699.0,319.1 695.0,314.5 690.5,310.6 686.3,306.1 680.8,303.2 676.1,299.5 672.3,294.6 667.5,291.0 662.4,287.6 657.3,284.4 652.8,280.4 649.1,275.3 644.3,271.7 638.6,269.2 632.9,266.7 629.1,261.7 624.2,258.1 619.6,254.3 613.5,252.3 609.0,248.3 604.2,244.6 599.4,241.0 594.4,237.6 588.8,235.1 583.9,231.6 578.8,228.5 573.7,225.3 569.0,221.4 562.8,220.0 557.4,217.3 553.1,212.7 547.7,209.8 541.9,208.0 536.6,205.1 530.6,203.6 525.6,200.2 520.6,196.6 514.6,195.3 508.5,194.1"/><polygon points="497.2,184.1 502.6,186.8 508.2,188.9 513.8,190.9 519.1,193.8 525.2,194.7 530.1,198.4 534.8,202.6 540.6,204.2 546.6,205.6 550.9,210.4 556.8,211.9 562.7,213.4 567.0,218.0 572.1,221.2 578.1,222.8 583.0,226.2 587.1,231.1 592.7,233.2 598.4,235.4 603.0,239.2 608.1,242.4 613.2,245.6 617.3,250.1 622.3,253.5 627.9,255.9 632.1,260.2 636.3,264.7 642.5,266.3 647.0,270.2 650.8,275.1 655.9,278.2 661.7,280.5 664.7,286.3 669.8,289.6 675.9,291.5 678.8,297.4 683.2,301.4 689.4,303.3 693.0,308.4 697.4,312.4 702.6,315.5 707.2,319.4 709.9,325.3 714.8,328.7 719.5,332.5 724.2,336.2 728.1,340.8 732.5,344.8 736.2,349.6 742.0,352.2 744.7,350.4 745.7,349.3 746.2,347.8 744.0,341.4 739.3,337.6 734.8,333.6 730.5,329.4 725.8,325.6 721.0,322.0 717.6,316.7 712.7,313.2 707.2,310.3 702.9,306.0 698.3,302.1 694.3,297.6 689.6,293.8 684.4,290.6 679.0,287.7 675.8,282.1 670.5,279.0 665.6,275.5 660.8,271.9 655.3,269.1 651.2,264.6 646.6,260.6 641.6,257.3 635.6,255.3 631.6,250.5 626.9,246.7 622.2,243.0 616.2,241.0 611.1,237.8 606.3,234.2 601.0,231.3 596.7,226.7 590.9,224.7 585.2,222.5 580.7,218.2 575.6,215.0 570.0,212.7 563.9,211.2 558.9,207.9 554.1,204.0 548.8,200.9 542.8,199.6 536.8,198.2 531.9,194.6 526.4,191.9 520.8,189.7 515.4,186.9 509.1,186.6 503.3,185.0 497.7,182.6"/><polygon points="531.0,190.0 536.2,193.2 541.6,195.8 547.6,197.1 552.1,201.5 557.9,203.1 563.9,204.5 568.5,208.8 573.9,211.2 579.9,212.8 584.1,217.5 589.7,219.7 594.9,222.7 599.9,226.1 605.0,229.0 610.1,232.2 615.1,235.5 620.4,238.2 625.1,242.0 630.9,244.1 634.9,248.9 640.4,251.4 645.3,254.9 650.1,258.4 654.7,262.3 660.1,265.0 665.0,268.4 668.7,273.6 673.8,276.6 679.5,279.0 683.1,284.2 688.1,287.6 693.3,290.5 697.8,294.4 701.7,299.1 707.5,301.5 711.8,305.7 715.4,310.8 720.7,313.8 726.3,316.4 729.6,321.7 734.7,324.9 739.8,328.2 743.5,333.1 748.2,336.8 753.7,339.6 757.5,344.3 761.6,348.7 767.4,351.2 768.7,350.3 769.7,349.3 770.9,347.4 766.9,342.8 761.8,339.5 757.1,335.8 753.1,331.2 748.7,327.1 743.7,323.6 739.1,319.8 734.4,316.0 730.1,311.8 725.9,307.4 721.2,303.7 716.3,300.2 711.1,297.0 707.7,291.6 702.4,288.6 697.3,285.3 691.7,282.8 687.5,278.4 682.9,274.4 678.2,270.8 672.9,267.8 667.4,265.1 663.2,260.6 658.8,256.5 654.1,252.7 648.6,250.0 642.8,247.8 638.1,244.1 633.8,239.6 628.1,237.3 623.2,233.8 617.9,231.0 613.4,226.8 608.2,223.7 602.4,221.8 597.0,219.0 592.2,215.3 586.8,212.5 581.2,210.2 575.7,207.8 570.4,205.0 564.6,203.0 559.7,199.4 554.6,196.2 548.8,194.3 542.8,192.9 537.4,190.2 531.6,188.5"/><polygon points="508.3,175.9 513.9,178.2 519.1,181.6 525.0,182.6 531.0,183.6 536.3,186.3 541.7,189.0 547.7,190.1 553.3,192.1 558.2,195.9 564.5,196.3 569.1,200.6 574.9,202.4 580.1,205.4 585.5,207.9 590.2,211.8 596.0,213.5 602.2,214.8 606.3,219.6 611.5,222.6 617.5,224.2 621.7,228.7 626.9,231.7 632.4,234.2 637.8,236.8 641.6,242.0 647.9,243.3 652.6,247.0 657.4,250.6 662.0,254.4 668.2,256.0 672.3,260.5 676.2,265.5 682.7,266.6 687.0,270.9 690.8,275.8 696.7,277.8 701.5,281.5 705.6,286.0 710.1,289.9 716.1,291.9 719.7,297.1 725.0,300.0 730.5,302.7 734.7,307.0 738.5,311.8 744.0,314.6 748.0,319.1 751.8,323.9 757.0,327.0 761.9,330.5 766.7,334.1 771.1,338.2 775.9,341.8 779.8,346.4 785.0,349.5 790.7,350.3 791.6,349.4 789.5,344.4 785.9,339.3 780.8,336.0 776.6,331.7 772.0,327.7 767.8,323.5 762.9,319.9 757.6,316.9 752.4,313.8 748.9,308.4 744.0,305.0 738.5,302.3 734.1,298.1 729.5,294.3 724.8,290.4 720.3,286.5 715.4,282.9 709.8,280.4 705.0,276.8 701.0,272.0 696.3,268.2 690.7,265.7 685.1,263.2 681.0,258.6 676.1,255.1 671.4,251.2 666.0,248.5 659.9,246.8 655.8,242.1 651.1,238.3 646.1,234.9 640.3,232.8 635.0,229.9 629.9,226.7 625.6,222.1 620.1,219.6 614.5,217.3 609.2,214.3 604.3,210.8 598.4,209.1 593.5,205.3 587.5,203.8 582.1,201.3 576.8,198.3 571.3,195.8 565.5,194.1 559.5,192.7 554.3,189.7 549.4,185.7 543.9,183.1 537.4,183.4 532.0,180.6 526.4,178.3 520.6,176.5 514.6,175.5 508.5,175.1"/><polygon points="519.6,172.6 525.4,173.8 531.0,176.4 536.9,177.4 542.9,178.1 548.3,181.2 553.9,183.3 560.1,183.5 565.4,186.2 570.8,188.9 576.9,189.6 582.2,192.6 587.1,196.4 593.6,196.3 599.3,198.2 604.1,202.2 609.3,205.0 615.2,206.5 620.3,209.7 625.8,212.2 631.2,214.7 637.0,216.5 641.3,221.1 646.8,223.5 652.5,225.6 657.3,229.2 662.7,231.8 668.0,234.7 673.0,237.9 677.3,242.4 683.1,244.3 688.2,247.5 692.3,252.1 698.3,253.8 703.2,257.2 707.2,262.0 712.4,265.0 718.1,267.2 722.5,271.4 727.1,275.3 732.7,277.7 737.7,281.0 741.8,285.5 747.1,288.4 751.6,292.4 755.7,296.8 760.2,300.9 765.6,303.6 770.5,307.1 774.0,312.3 780.1,314.2 784.0,318.9 787.7,323.8 793.8,325.9 799.1,328.8 801.8,330.4 804.0,327.8 801.9,325.5 798.8,319.7 793.6,316.7 789.1,312.6 784.5,308.7 779.9,304.8 775.0,301.3 770.2,297.8 766.6,292.5 761.2,289.7 755.4,287.4 750.6,283.7 745.9,280.0 742.0,275.1 737.0,271.7 731.2,269.4 726.3,266.0 721.3,262.6 716.6,258.8 711.5,255.6 705.8,253.3 701.6,248.8 696.7,245.3 691.4,242.4 686.2,239.2 680.6,236.8 675.8,233.1 670.4,230.5 665.6,226.7 659.7,225.1 654.4,222.1 649.6,218.3 644.3,215.6 639.2,212.2 633.4,210.4 627.8,208.0 622.4,205.3 617.6,201.5 612.0,199.2 605.6,198.8 600.0,196.5 594.8,193.4 589.9,189.4 583.8,188.3 578.2,186.2 572.2,185.0 566.9,181.8 561.3,179.6 555.3,178.5 549.4,177.2 543.4,176.2 537.7,174.2 531.8,172.9 525.9,171.7 519.7,171.8"/><polygon points="536.4,170.9 542.3,172.0 547.8,174.4 553.5,176.5 559.6,176.8 565.2,179.0 570.3,182.4 576.1,184.0 582.3,184.4 587.3,188.0 592.8,190.3 598.7,191.6 604.7,192.7 609.4,197.0 615.4,198.2 620.6,201.0 625.9,204.0 631.7,205.7 637.3,207.8 642.0,211.8 647.0,215.1 652.6,217.2 658.1,219.8 662.5,224.1 669.1,224.6 674.4,227.4 678.9,231.6 684.0,234.6 689.8,236.7 693.8,241.5 698.7,244.9 704.9,246.4 709.3,250.6 714.3,253.9 719.1,257.5 724.5,260.2 729.2,263.8 733.8,267.8 739.4,270.2 743.5,274.8 748.3,278.3 754.1,280.5 758.7,284.4 762.9,288.8 769.1,290.4 773.6,294.5 776.8,300.1 783.0,301.8 787.1,306.4 791.6,310.4 797.2,312.9 802.8,314.3 803.9,312.8 800.0,309.2 796.1,304.5 791.7,300.3 787.5,295.9 782.4,292.7 777.0,289.8 771.2,287.6 767.6,282.4 762.3,279.4 757.4,275.8 751.9,273.3 747.5,269.0 742.5,265.6 737.6,262.2 733.0,258.2 727.6,255.5 722.0,253.1 718.1,248.1 713.1,244.7 707.2,242.7 701.4,240.7 696.5,237.1 691.6,233.6 687.4,229.0 681.6,226.9 675.7,225.1 670.5,222.1 666.3,217.2 660.3,215.7 654.9,213.0 649.3,210.6 644.6,206.7 639.3,203.7 633.2,202.5 627.9,199.7 622.0,198.2 617.1,194.3 611.4,192.3 605.9,189.8 599.7,189.1 594.3,186.4 588.8,183.9 583.7,180.4 577.4,180.2 571.8,177.7 566.1,176.0 560.5,173.5 554.6,172.2 548.9,170.3 542.6,170.6 536.7,169.6"/><polygon points="519.9,161.2 525.8,162.6 531.5,164.5 537.5,164.7 543.4,166.0 549.0,167.9 555.4,167.1 561.0,169.4 566.6,171.5 572.4,172.9 578.0,174.8 583.3,177.9 589.3,178.7 595.2,180.1 600.1,183.8 605.8,185.6 611.5,187.4 616.8,190.2 622.2,193.0 628.4,193.6 633.5,196.8 638.2,200.8 644.6,201.3 649.9,204.2 654.9,207.4 660.2,210.2 666.1,211.9 670.4,216.5 676.1,218.6 682.0,220.1 686.6,224.2 691.0,228.5 697.4,229.4 702.3,233.0 706.6,237.4 712.2,239.6 717.8,242.0 721.9,246.7 726.6,250.4 732.3,252.6 737.5,255.5 742.2,259.3 747.2,262.6 752.0,266.1 756.3,270.4 762.4,272.1 767.5,275.3 771.9,279.5 776.2,283.6 782.6,285.1 786.0,290.6 790.4,294.6 797.4,295.2 802.6,296.6 803.9,294.7 800.5,290.9 796.5,286.1 791.8,282.4 787.7,277.7 782.1,275.3 776.6,272.7 772.1,268.5 767.2,265.0 762.0,262.0 757.4,258.0 751.3,256.4 745.9,253.6 741.7,249.1 736.7,245.6 731.6,242.5 726.2,239.8 720.7,237.1 716.1,233.1 710.9,230.2 705.3,227.7 699.4,225.8 695.2,221.1 689.9,218.3 685.1,214.5 678.7,213.6 673.2,211.2 668.4,207.4 663.2,204.3 657.9,201.5 651.9,200.0 646.4,197.6 641.6,193.7 635.9,191.6 630.2,189.4 624.7,187.0 618.8,185.5 613.6,182.3 607.9,180.4 602.7,177.1 596.2,177.1 590.4,175.7 584.9,173.1 579.3,170.9 573.7,168.2 567.2,169.2 561.9,165.8 556.1,163.9 550.1,163.2 543.9,163.0 537.9,162.7 532.2,160.0 526.1,159.7 520.1,159.8"/><polygon points="533.9,155.7 539.8,156.7 545.5,159.6 551.6,158.8 557.6,159.0 563.2,161.7 568.9,163.4 575.2,162.8 580.4,166.6 586.0,168.5 592.4,168.1 597.9,170.6 603.0,174.1 609.1,174.6 615.0,176.0 619.9,180.0 625.7,181.5 631.6,182.8 636.4,186.8 642.4,188.0 648.3,189.2 653.5,192.4 658.1,196.6 664.1,197.8 669.7,200.0 674.7,203.5 679.9,206.3 685.3,208.8 690.9,211.1 696.3,213.7 701.2,217.1 706.2,220.4 711.6,223.0 717.0,225.7 722.6,227.9 727.3,231.7 732.0,235.5 738.0,237.2 742.5,241.2 747.4,244.8 753.3,246.6 757.9,250.4 762.2,254.8 767.8,257.2 772.9,260.3 777.2,264.7 782.9,266.8 788.5,269.2 791.9,274.9 799.0,275.1 802.8,275.3 803.9,273.7 801.6,271.1 797.7,266.1 792.1,263.8 787.7,259.6 783.0,255.7 777.9,252.6 771.8,250.8 766.8,247.5 762.5,243.0 757.2,240.1 751.5,238.0 746.4,234.8 741.5,231.3 736.2,228.4 731.1,225.1 725.7,222.5 720.1,220.1 715.2,216.6 709.8,213.9 704.6,210.8 699.1,208.3 693.7,205.7 688.0,203.5 683.8,198.6 677.6,197.5 672.2,194.7 666.0,193.9 661.0,190.3 655.7,187.3 650.2,184.9 643.9,184.3 638.6,181.3 633.6,177.7 627.7,176.1 622.3,173.4 616.1,172.8 610.4,170.9 604.9,168.2 599.1,166.7 593.1,165.6 587.4,163.6 581.3,163.0 575.8,160.5 570.2,157.7 563.9,158.1 557.9,157.4 552.0,156.3 546.3,153.9 540.1,153.9 534.0,154.9"/><polygon points="548.8,150.3 554.9,150.5 560.6,152.9 566.2,155.2 572.6,153.6 578.4,154.8 583.7,158.6 590.0,157.7 595.6,160.2 601.2,162.2 607.0,163.7 612.7,165.3 618.2,167.7 623.8,169.9 629.7,171.0 635.3,173.3 640.1,177.3 646.5,177.5 652.0,179.7 656.8,183.8 662.8,184.9 668.2,187.4 673.2,191.0 678.6,193.3 685.0,193.9 689.7,198.0 694.9,201.0 700.7,202.7 705.7,206.1 711.0,208.8 716.0,212.1 721.6,214.3 726.0,218.8 731.3,221.6 737.3,223.0 742.4,226.2 746.5,231.0 752.6,232.5 757.4,236.1 762.0,240.1 767.8,242.0 773.2,244.6 778.1,248.1 783.1,251.4 788.3,254.4 793.1,258.0 798.2,261.1 802.8,260.3 803.7,258.9 801.9,255.4 796.5,252.7 791.8,248.8 786.6,245.8 782.0,241.8 777.3,237.9 771.5,235.9 765.7,233.9 760.7,230.5 756.4,226.0 751.2,223.0 745.3,221.1 739.9,218.4 734.9,215.0 730.4,210.8 724.3,209.3 718.4,207.6 713.2,204.6 708.3,201.0 703.5,197.2 697.8,195.0 691.5,194.3 686.3,191.1 681.5,187.2 675.7,185.4 670.2,183.0 664.1,181.9 659.3,177.9 653.9,175.2 648.4,172.6 642.3,171.7 636.8,169.1 631.3,166.7 625.4,165.3 620.2,162.0 614.0,161.2 608.2,159.7 602.2,158.6 596.5,156.6 590.8,154.5 584.6,154.7 578.8,152.9 573.0,151.3 567.4,148.5 561.1,149.4 555.0,149.7 549.0,149.0"/><polygon points="640.8,175.4 645.5,179.5 651.5,180.9 656.3,184.7 661.3,188.0 666.6,190.9 672.7,192.1 677.3,196.4 682.2,200.0 688.0,201.9 693.4,204.4 698.7,207.3 704.2,209.7 709.3,212.8 714.1,216.7 720.3,217.7 725.5,220.7 729.7,225.8 735.9,226.8 741.3,229.3 746.2,233.1 751.5,235.8 756.6,239.0 762.2,241.3 767.1,244.8 772.7,247.0 778.0,250.0 782.4,254.5 788.3,256.1 794.2,257.7 799.9,259.7 802.1,256.8 803.4,254.2 804.6,250.2 800.8,244.4 795.3,242.0 789.0,241.2 783.7,238.4 778.6,235.2 772.9,233.1 767.5,230.5 761.2,229.6 756.3,226.0 751.7,221.9 745.6,220.6 739.7,219.0 734.0,217.1 729.2,213.3 723.6,210.9 718.1,208.5 713.0,205.3 706.6,204.8 701.8,200.9 696.8,197.6 691.0,195.8 684.8,194.8 679.6,191.6 674.4,188.6 669.6,184.9 663.5,183.7 658.1,180.9 652.2,179.3 646.6,177.2 641.4,174.2"/><polygon points="667.8,146.4 672.4,150.4 677.0,154.5 682.8,156.3 688.1,159.1 692.1,164.2 698.4,165.3 703.5,168.4 707.9,172.9 712.8,176.3 718.6,178.3 722.7,183.2 727.7,186.4 733.7,188.1 737.9,192.8 743.3,195.4 748.1,199.1 753.3,202.1 758.3,205.4 763.6,208.4 768.3,212.1 773.3,215.4 778.0,219.2 784.4,220.3 788.2,225.6 792.9,229.3 800.3,228.7 802.3,226.1 803.6,223.9 805.1,220.6 801.6,214.8 796.4,211.8 790.2,210.4 785.7,206.3 780.9,202.7 775.1,200.7 769.9,197.6 764.4,195.1 759.1,192.3 754.4,188.5 748.7,186.3 742.5,185.0 737.3,182.1 732.5,178.4 727.8,174.5 722.4,171.8 716.8,169.6 710.8,167.8 705.7,164.7 701.0,160.8 695.7,158.0 689.9,156.0 684.8,152.9 679.9,149.3 674.1,147.3 668.2,145.6"/><polygon points="677.8,153.3 683.0,156.3 686.6,161.8 691.8,164.8 697.3,167.4 701.5,171.8 706.7,174.8 712.5,177.0 717.1,180.8 721.1,185.5 726.6,188.2 731.1,192.2 735.4,196.5 740.9,199.1 745.3,203.3 749.6,207.7 754.1,211.7 759.9,213.8 765.1,216.8 768.3,222.7 774.3,224.6 779.6,227.5 783.2,232.8 788.0,236.4 793.1,239.6 799.8,240.5 801.8,238.8 804.4,235.0 804.9,233.1 801.3,227.8 797.4,222.9 792.9,218.9 787.5,216.1 781.4,214.4 776.7,210.6 771.3,207.9 767.2,203.2 761.6,200.7 756.1,198.2 750.3,196.1 746.1,191.6 741.7,187.3 735.3,186.0 730.3,182.7 725.5,179.1 720.3,176.0 716.1,171.6 709.8,170.2 704.5,167.3 699.3,164.2 694.9,160.0 689.3,157.5 683.5,155.5 678.2,152.7"/><polygon points="720.5,122.9 726.0,125.4 730.7,129.2 734.5,134.7 739.8,137.4 745.5,139.6 750.0,143.7 755.0,147.1 760.8,149.1 765.2,153.5 769.6,157.9 775.5,159.7 780.7,162.7 784.5,168.0 789.6,171.2 797.1,170.3 801.8,171.0 803.6,168.0 801.3,162.9 797.9,156.7 792.6,153.9 786.6,152.3 781.2,149.7 775.6,147.4 771.0,143.4 765.9,140.1 759.9,138.6 753.9,137.0 748.8,133.9 743.4,131.2 738.0,128.5 732.4,126.2 726.4,124.6 721.2,121.7"/><polygon points="743.8,105.4 748.9,108.8 754.5,110.9 759.4,114.7 764.1,118.9 770.0,120.4 775.3,123.3 780.2,126.9 785.5,129.9 791.5,131.0 797.2,133.2 802.1,133.0 803.5,129.8 800.9,124.7 795.9,121.0 789.9,119.8 784.0,118.3 778.4,116.1 773.7,111.9 767.4,111.4 761.6,109.7 755.7,108.1 749.8,106.6 744.5,103.9"/></g>
<g fill="rgba(50,230,50,0.42)" stroke="none"><polygon points="273.9,265.5 269.6,269.7 265.2,273.8 261.4,278.4 256.3,281.9 253.2,287.2 249.4,291.9 245.5,296.4 240.5,300.1 237.8,305.6 234.2,310.5 229.6,314.5 226.5,319.7 222.8,324.4 218.4,328.6 216.0,334.3 212.9,339.4 209.6,344.5 206.3,349.5 206.2,350.1 207.0,350.6 207.4,350.2 210.5,345.0 213.8,340.1 217.9,335.6 220.9,330.4 224.1,325.3 227.7,320.5 231.7,316.1 236.4,312.1 238.7,306.4 242.3,301.6 246.1,297.0 250.0,292.4 255.1,288.9 258.4,283.8 262.0,279.0 266.1,274.7 270.6,270.7 274.6,266.2"/><polygon points="295.1,259.6 291.1,264.0 287.4,268.7 283.7,273.4 279.6,277.8 276.2,282.8 272.7,287.6 269.2,292.5 264.7,296.6 262.2,302.2 258.8,307.1 255.4,312.1 251.5,316.7 247.9,321.5 245.3,327.0 240.9,331.3 238.1,336.6 235.9,342.3 232.0,347.0 230.8,350.5 231.6,351.0 233.5,347.8 237.4,343.2 241.3,338.6 243.1,332.7 246.6,327.8 249.5,322.5 253.3,317.9 256.8,313.0 259.5,307.6 263.3,303.0 266.3,297.8 270.5,293.5 274.5,289.0 277.6,283.9 280.8,278.7 284.5,274.1 288.1,269.3 292.0,264.8 295.8,260.1"/><polygon points="313.4,253.5 309.6,258.2 305.4,262.5 301.0,266.7 298.0,272.1 294.3,276.9 290.5,281.5 287.1,286.5 283.1,291.0 280.1,296.3 276.2,301.0 272.8,305.9 269.9,311.3 266.6,316.3 262.7,321.0 259.8,326.3 257.2,331.8 252.8,336.2 250.8,342.0 248.4,347.5 247.5,348.6 248.5,349.1 249.7,348.3 253.4,343.5 255.4,337.7 258.2,332.4 261.4,327.3 264.8,322.3 268.3,317.4 270.7,311.8 274.4,307.0 278.0,302.2 281.7,297.4 284.9,292.4 288.1,287.2 291.3,282.1 295.0,277.4 299.0,272.8 302.5,267.9 306.6,263.5 310.2,258.7 314.2,254.2"/><polygon points="325.8,256.8 322.2,261.6 318.1,266.0 315.2,271.4 312.0,276.4 308.4,281.2 305.5,286.5 301.7,291.2 298.4,296.2 296.1,301.9 293.1,307.0 288.7,311.5 286.8,317.3 283.8,322.5 281.0,327.8 277.7,332.9 275.4,338.5 272.4,343.6 269.7,349.0 269.8,349.9 270.5,350.2 270.8,349.6 273.6,344.2 277.1,339.3 280.3,334.2 282.9,328.9 284.9,323.1 287.8,317.9 291.0,312.8 294.4,307.8 297.0,302.4 299.9,297.1 303.0,292.0 307.1,287.5 310.0,282.3 313.4,277.4 316.1,272.0 319.4,267.0 323.6,262.6 326.6,257.4"/><polygon points="344.3,254.2 341.1,259.2 337.2,263.8 334.1,269.0 331.6,274.4 328.2,279.4 324.6,284.2 322.8,290.0 319.9,295.3 315.9,299.9 313.1,305.2 311.1,310.9 307.9,316.0 305.2,321.4 303.5,327.2 299.9,332.1 297.3,337.5 295.2,343.2 293.2,348.8 292.4,350.7 293.6,351.2 295.4,349.8 298.3,344.6 300.3,338.9 302.1,333.2 304.6,327.8 307.7,322.6 310.3,317.2 312.8,311.8 315.1,306.3 318.2,301.1 320.8,295.8 324.8,291.1 326.6,285.3 329.7,280.2 332.4,274.9 336.1,270.1 339.4,265.2 341.7,259.6 345.0,254.6"/><polygon points="348.3,266.7 345.8,272.2 343.2,277.6 340.1,282.8 337.2,288.0 335.8,294.0 333.0,299.3 329.5,304.3 327.6,310.0 326.4,316.0 321.7,320.6 320.1,326.4 318.5,332.3 315.9,337.7 313.6,343.2 313.1,349.5 312.7,350.3 313.5,350.6 314.3,349.9 317.5,344.7 319.7,339.1 321.3,333.3 323.6,327.8 325.0,321.9 328.8,317.0 330.0,311.0 331.8,305.3 335.0,300.2 337.9,294.9 340.7,289.6 341.8,283.5 344.5,278.2 346.5,272.5 349.1,267.1"/><polygon points="370.5,250.1 367.5,255.3 365.4,260.9 363.8,266.8 361.0,272.1 358.2,277.5 357.1,283.5 353.8,288.7 352.9,294.7 350.4,300.2 348.3,305.8 346.3,311.5 345.1,317.4 343.3,323.2 340.0,328.4 338.1,334.0 336.9,340.0 334.6,345.6 334.0,350.0 335.1,350.4 336.9,346.3 340.0,341.0 341.9,335.3 343.6,329.6 345.5,323.9 346.2,317.8 348.2,312.2 351.0,306.8 352.1,300.8 354.0,295.1 356.2,289.5 358.7,284.1 362.0,278.9 363.2,273.0 364.5,267.1 366.7,261.5 369.0,255.9 371.5,250.5"/><polygon points="391.8,230.6 389.8,236.3 386.9,241.6 386.0,247.6 384.2,253.3 382.2,259.0 379.5,264.4 378.8,270.5 377.1,276.3 374.1,281.6 373.0,287.5 371.9,293.4 369.4,299.0 367.4,304.7 367.4,310.9 364.9,316.4 363.2,322.2 362.5,328.2 360.1,333.8 358.9,339.6 358.1,345.6 357.3,350.3 358.3,350.6 359.8,346.1 361.3,340.2 363.0,334.5 364.7,328.8 367.0,323.2 366.7,316.9 369.1,311.3 370.3,305.5 373.4,300.1 373.9,294.0 375.5,288.2 376.2,282.2 378.2,276.6 380.4,271.0 382.2,265.3 383.5,259.4 384.9,253.6 386.8,247.9 390.2,242.7 390.6,236.6 392.6,230.9"/><polygon points="398.9,239.5 397.8,245.4 396.4,251.2 394.1,256.8 394.2,263.0 393.0,268.9 391.4,274.6 390.3,280.5 389.5,286.5 387.9,292.3 387.1,298.3 386.5,304.2 384.5,310.0 383.6,315.9 382.2,321.8 382.8,327.9 380.1,333.6 380.2,339.7 380.0,345.7 379.1,350.2 380.3,350.4 382.4,346.1 383.0,340.1 383.7,334.1 383.7,328.1 386.0,322.4 387.2,316.5 387.0,310.4 387.8,304.5 389.2,298.6 390.8,292.8 391.3,286.8 391.6,280.8 393.0,274.9 393.8,269.0 396.0,263.4 396.8,257.4 397.4,251.4 398.6,245.6 399.9,239.7"/><polygon points="402.2,247.5 401.3,253.4 401.4,259.5 401.0,265.5 400.5,271.4 400.4,277.5 399.8,283.4 399.4,289.4 398.7,295.4 399.1,301.4 398.4,307.4 397.5,313.4 398.2,319.4 397.3,325.4 397.4,331.4 398.1,337.5 397.8,343.5 396.2,349.4 398.0,350.0 399.0,350.0 399.0,349.5 400.0,343.5 400.8,337.5 401.4,331.5 400.5,325.5 400.3,319.5 399.8,313.5 400.5,307.5 401.1,301.5 400.5,295.5 401.4,289.5 401.5,283.5 402.2,277.5 403.1,271.6 402.5,265.5 402.2,259.5 402.6,253.5 403.5,247.6"/><polygon points="418.6,242.3 417.8,248.3 417.4,254.3 416.8,260.2 415.4,266.1 415.2,272.1 414.3,278.1 414.6,284.1 412.2,290.0 413.3,296.1 413.2,302.1 412.3,308.0 410.8,313.9 411.7,320.0 410.4,325.9 410.0,331.9 409.1,337.9 409.8,344.0 408.1,349.8 409.8,350.0 410.6,350.0 411.2,350.1 412.3,344.1 413.7,338.2 412.8,332.1 414.0,326.2 412.7,320.1 414.3,314.2 415.5,308.3 414.7,302.2 415.1,296.2 415.0,290.2 415.6,284.2 417.5,278.4 416.5,272.3 417.0,266.3 417.6,260.3 418.2,254.3 419.1,248.4 419.4,242.4"/><polygon points="415.3,239.6 415.4,245.6 415.0,251.7 414.8,257.7 415.5,263.7 415.8,269.6 415.3,275.7 415.6,281.7 416.5,287.6 415.3,293.7 417.0,299.6 416.3,305.7 416.8,311.7 417.3,317.6 418.1,323.6 416.8,329.7 418.3,335.6 418.7,341.6 418.8,347.6 419.1,350.1 420.4,350.0 420.5,347.5 420.8,341.5 421.1,335.5 420.2,329.5 419.6,323.5 418.9,317.6 419.0,311.5 418.5,305.6 418.9,299.5 418.2,293.6 418.3,287.6 417.8,281.6 418.0,275.6 416.7,269.6 417.2,263.6 416.6,257.6 416.9,251.6 416.6,245.6 416.1,239.6"/><polygon points="426.6,241.1 426.8,247.1 426.4,253.1 425.4,259.1 426.3,265.1 427.0,271.1 425.5,277.1 426.4,283.1 427.4,289.1 427.0,295.1 426.0,301.2 427.9,307.1 427.9,313.1 427.6,319.1 427.8,325.1 428.1,331.1 428.0,337.1 427.1,343.2 429.3,349.1 429.2,350.0 430.2,350.0 431.0,349.0 430.9,343.0 430.5,337.0 430.6,331.0 430.5,325.0 431.1,319.0 429.3,313.1 429.1,307.1 428.5,301.1 428.8,295.1 429.0,289.1 429.5,283.1 427.9,277.1 427.8,271.1 429.0,265.1 428.7,259.1 427.9,253.1 427.6,247.1 427.5,241.1"/><polygon points="431.8,243.7 432.0,249.7 432.5,255.7 432.9,261.7 431.7,267.8 433.3,273.7 434.1,279.6 433.1,285.7 433.6,291.7 435.3,297.6 435.9,303.6 435.1,309.6 436.6,315.5 436.0,321.6 436.7,327.6 438.0,333.5 439.1,339.4 438.9,345.4 440.0,349.8 440.8,349.7 440.4,345.3 440.6,339.3 439.9,333.3 441.2,327.2 438.7,321.4 438.5,315.4 437.6,309.4 437.4,303.4 438.2,297.3 437.0,291.4 435.5,285.5 435.9,279.5 435.1,273.5 435.7,267.5 433.7,261.6 433.3,255.6 433.0,249.7 432.8,243.7"/><polygon points="437.5,254.4 438.3,260.4 439.3,266.3 441.2,272.0 443.1,277.7 444.0,283.7 445.4,289.5 446.2,295.5 447.9,301.3 448.8,307.2 451.8,312.7 451.3,319.0 454.1,324.5 455.5,330.3 455.8,336.4 456.6,342.4 460.1,347.7 461.4,349.9 462.1,349.7 462.4,347.1 461.8,341.1 459.9,335.4 457.2,329.8 456.6,323.8 455.8,317.8 453.1,312.3 451.5,306.5 449.6,300.8 448.3,295.0 447.9,288.9 445.3,283.4 443.8,277.5 442.7,271.7 441.0,265.9 440.6,259.8 438.3,254.2"/><polygon points="440.3,259.2 442.1,265.0 442.8,271.0 445.7,276.4 447.5,282.1 448.6,288.1 451.0,293.6 453.8,299.0 454.8,305.1 457.9,310.4 459.8,316.1 462.6,321.5 464.2,327.5 468.5,332.1 471.5,337.4 474.5,342.8 478.4,347.8 484.7,349.9 485.7,350.5 486.1,349.8 486.1,348.1 481.4,344.6 477.8,340.1 473.0,336.3 470.2,331.0 467.9,325.5 465.0,320.3 461.5,315.3 459.1,309.9 457.3,304.1 455.0,298.6 452.5,293.1 450.7,287.4 448.8,281.7 446.5,276.2 445.9,270.1 442.8,264.7 441.1,259.0"/><polygon points="472.8,261.5 475.6,266.8 478.6,272.0 480.9,277.6 483.3,283.1 486.6,288.2 489.7,293.3 492.2,298.8 495.9,303.6 498.4,309.1 500.6,314.7 503.3,320.1 507.4,324.7 508.7,330.8 512.3,335.6 514.7,341.2 517.9,346.3 521.4,350.9 522.3,350.4 519.6,345.3 518.2,339.2 515.9,333.7 512.1,328.9 508.6,324.0 505.2,319.0 503.2,313.3 501.2,307.5 497.1,302.9 494.4,297.6 490.8,292.7 488.2,287.3 485.9,281.7 482.9,276.5 479.5,271.5 476.5,266.4 473.6,261.1"/><polygon points="490.3,242.9 494.4,247.2 498.4,251.7 502.7,255.9 506.9,260.3 510.0,265.6 515.0,269.0 519.2,273.3 523.1,277.9 527.1,282.5 532.1,286.0 535.1,291.4 540.6,294.5 545.0,298.6 548.3,303.7 553.1,307.4 557.4,311.7 562.5,315.0 565.7,320.5 571.0,323.5 576.0,326.9 580.3,331.2 585.0,335.0 590.1,338.1 594.7,342.1 599.4,346.0 605.2,348.1 610.7,350.7 610.5,351.1 611.1,349.9 611.2,349.5 605.9,346.7 601.2,343.1 595.9,340.4 590.6,337.5 586.0,333.6 581.4,329.8 577.2,325.5 572.8,321.4 567.5,318.4 563.0,314.4 559.5,309.4 554.7,305.7 550.1,301.9 545.5,298.0 541.2,293.8 538.0,288.5 532.9,285.2 528.4,281.1 524.2,276.9 520.0,272.6 516.0,268.1 512.3,263.4 507.4,259.7 503.6,255.1 499.7,250.5 495.6,246.1 490.9,242.3"/><polygon points="501.8,239.9 506.2,244.0 510.5,248.2 515.2,251.9 519.7,255.8 523.7,260.4 528.1,264.5 533.0,268.1 537.5,271.9 541.5,276.5 546.2,280.3 550.9,284.1 555.4,288.0 560.1,291.8 564.4,295.9 568.4,300.5 573.5,303.8 578.2,307.5 582.2,312.0 587.0,315.7 591.4,319.7 595.3,324.4 599.6,328.6 605.3,331.2 609.3,335.7 613.5,340.1 618.8,343.2 622.7,347.9 627.5,351.5 629.4,350.8 629.9,350.2 629.1,349.5 625.7,344.2 620.9,340.6 616.3,336.8 610.7,334.2 606.2,330.1 601.9,325.9 597.4,322.0 593.7,317.1 588.0,314.6 584.0,309.9 579.7,305.8 574.9,302.1 570.8,297.8 565.9,294.2 560.7,291.1 556.5,286.7 552.6,282.1 547.5,278.8 542.9,275.0 538.8,270.5 534.1,266.8 530.2,262.1 525.4,258.5 520.5,255.0 515.8,251.3 511.4,247.2 507.1,242.9 502.4,239.3"/><polygon points="524.4,243.8 529.2,247.4 533.4,251.8 538.2,255.3 543.6,258.2 548.3,261.8 552.8,265.9 557.8,269.2 562.6,272.8 566.5,277.5 572.0,280.2 576.8,283.8 580.6,288.8 585.5,292.1 591.0,294.9 595.2,299.1 599.9,302.9 604.6,306.6 608.9,310.8 613.4,314.7 618.8,317.6 622.7,322.2 627.4,326.0 631.4,330.4 636.6,333.5 641.3,337.3 644.1,342.9 649.8,345.6 653.9,349.8 655.5,352.3 656.5,351.3 655.1,348.7 651.0,344.3 647.1,339.8 641.9,336.6 637.5,332.6 633.0,328.6 629.5,323.6 624.9,319.7 620.0,316.2 614.8,313.1 610.2,309.2 606.0,304.9 601.7,300.7 596.3,297.8 591.7,293.9 587.5,289.6 582.6,286.2 577.5,282.9 572.6,279.5 568.2,275.4 563.2,272.0 558.9,267.8 553.6,264.8 548.8,261.2 544.2,257.4 539.3,253.9 535.0,249.7 529.7,246.7 524.9,243.1"/><polygon points="524.7,226.0 529.9,229.1 534.9,232.3 539.9,235.7 544.8,239.1 550.0,242.1 554.4,246.3 559.4,249.7 565.1,251.9 570.1,255.2 574.1,260.0 580.0,262.0 584.8,265.7 589.3,269.7 594.0,273.4 599.7,275.8 604.4,279.4 609.1,283.1 614.1,286.5 619.0,290.0 622.6,295.0 628.5,297.3 633.2,300.9 637.7,304.9 642.6,308.5 647.2,312.3 651.1,316.9 655.9,320.5 660.7,324.1 664.7,328.6 669.2,332.6 673.0,337.3 677.5,341.2 681.1,346.0 686.1,349.6 687.5,350.4 688.1,349.9 687.1,348.6 684.0,343.3 679.6,339.1 674.5,335.7 670.7,331.0 665.9,327.3 662.3,322.3 657.2,319.0 652.3,315.6 647.8,311.6 644.0,306.7 639.4,302.8 634.7,299.1 629.0,296.6 624.2,293.0 620.2,288.4 615.8,284.3 610.4,281.4 605.0,278.6 600.4,274.8 596.0,270.6 590.7,267.7 585.8,264.1 580.5,261.3 576.0,257.3 570.9,254.0 566.0,250.7 560.6,247.9 555.5,244.6 550.5,241.3 546.1,237.2 540.9,234.1 535.4,231.6 530.3,228.4 525.2,225.2"/><polygon points="549.6,225.3 554.3,229.1 559.9,231.5 564.8,235.0 569.5,238.7 575.1,241.2 580.3,244.2 584.8,248.3 589.8,251.6 595.3,254.1 600.1,257.8 605.0,261.3 610.1,264.4 614.5,268.6 619.6,271.8 624.2,275.7 629.2,279.0 633.5,283.3 638.9,286.1 643.8,289.6 647.4,294.6 651.9,298.6 657.7,301.0 661.6,305.8 666.2,309.6 671.3,312.9 675.4,317.4 679.0,322.3 683.9,325.8 688.4,329.7 692.5,334.1 697.0,338.1 701.1,342.5 706.1,346.0 709.2,349.8 710.7,348.4 707.2,344.9 703.0,340.6 699.3,335.8 694.4,332.2 690.4,327.6 685.8,323.7 680.8,320.2 677.3,315.2 672.3,311.7 668.9,306.5 662.8,304.3 658.2,300.4 653.8,296.3 649.5,292.1 644.7,288.4 640.3,284.4 634.8,281.6 630.3,277.6 626.4,272.8 621.0,269.8 615.5,267.2 610.6,263.7 605.8,260.1 601.4,255.9 596.3,252.7 591.0,249.7 585.8,246.8 580.8,243.4 575.9,239.9 571.2,236.1 565.4,233.9 560.4,230.7 555.2,227.7 550.2,224.3"/><polygon points="555.3,220.9 560.3,224.2 565.5,227.2 570.8,230.0 575.9,233.1 580.9,236.4 586.0,239.5 590.7,243.2 595.5,246.9 600.9,249.4 605.9,252.8 610.5,256.6 615.1,260.5 620.3,263.5 625.2,266.9 629.5,271.2 634.0,275.2 639.5,277.7 642.9,283.1 648.3,285.9 653.5,289.0 657.5,293.5 661.7,297.9 666.5,301.5 671.2,305.2 675.7,309.0 680.2,313.0 684.7,317.0 688.2,322.0 692.6,326.0 697.6,329.4 701.6,333.9 706.3,337.6 710.4,342.0 714.5,346.3 719.0,350.3 722.4,351.6 723.2,350.8 721.3,348.0 717.1,343.7 712.4,339.9 708.3,335.5 704.9,330.4 700.8,326.0 695.0,323.4 691.0,318.9 686.4,315.1 682.8,310.1 677.6,306.9 672.5,303.6 668.5,299.1 664.3,294.8 659.4,291.3 655.2,286.9 650.0,283.9 645.2,280.2 641.1,275.8 636.4,272.0 631.1,269.1 626.0,265.9 621.2,262.3 616.9,258.0 611.6,255.1 606.3,252.2 601.7,248.3 596.4,245.4 591.7,241.7 586.9,238.1 581.9,234.8 576.3,232.4 571.2,229.3 566.5,225.5 561.3,222.6 555.7,220.2"/><polygon points="552.2,207.7 557.6,210.3 562.9,213.1 567.5,217.3 573.2,219.2 578.4,222.2 583.3,225.7 588.3,229.1 594.1,230.9 598.5,235.2 603.9,237.9 609.3,240.6 613.8,244.6 618.2,248.8 624.2,250.7 628.8,254.5 634.0,257.6 638.0,262.2 643.3,265.2 647.5,269.5 652.7,272.5 657.4,276.2 662.9,279.0 666.7,283.9 672.3,286.5 676.5,290.8 680.3,295.5 686.0,298.1 690.8,301.7 694.0,307.2 698.9,310.6 703.9,314.0 707.7,318.7 712.6,322.3 717.4,325.9 722.0,329.8 725.9,334.4 730.5,338.2 734.8,342.4 739.1,346.5 743.4,350.8 744.6,350.5 745.1,349.9 744.6,349.5 740.8,344.8 736.5,340.6 733.2,335.3 728.4,331.7 723.7,327.8 719.5,323.6 714.5,320.2 710.5,315.6 706.1,311.5 700.4,308.9 696.7,304.1 691.9,300.4 687.7,296.1 682.2,293.3 677.8,289.2 673.6,284.9 668.8,281.2 663.5,278.2 658.7,274.6 654.2,270.5 649.7,266.6 644.6,263.4 639.6,260.1 634.8,256.4 629.9,253.0 624.8,249.8 619.9,246.4 615.3,242.4 609.8,239.8 605.2,235.9 599.9,233.0 595.1,229.4 589.5,226.9 584.2,224.1 579.1,221.1 574.4,217.1 568.6,215.2 563.3,212.4 558.0,209.6 552.6,206.8"/><polygon points="584.5,216.8 589.8,219.6 595.0,222.5 599.6,226.5 605.1,229.0 610.4,231.8 615.1,235.5 620.6,238.0 625.8,241.0 630.5,244.7 635.2,248.5 640.7,251.0 645.7,254.2 649.7,258.9 654.8,262.2 660.1,264.9 665.1,268.3 669.9,271.9 674.9,275.1 679.5,279.0 684.2,282.7 688.6,286.8 693.7,290.1 698.2,293.9 702.6,298.0 707.7,301.3 712.5,304.9 716.3,309.6 722.1,312.1 725.8,316.9 730.2,321.1 735.6,323.9 740.0,328.0 743.7,332.9 749.0,335.9 754.0,339.3 757.6,344.3 761.7,348.6 767.4,351.3 767.7,351.5 768.2,350.9 768.7,349.8 764.2,345.8 759.3,342.3 755.0,338.1 750.8,333.8 746.0,330.2 741.2,326.6 736.4,323.0 732.3,318.6 727.7,314.7 723.6,310.2 718.2,307.3 714.0,303.1 709.2,299.4 704.4,295.8 699.5,292.3 694.6,288.9 689.8,285.3 685.0,281.7 680.6,277.5 675.9,273.8 670.8,270.7 665.8,267.4 660.9,263.9 657.0,259.1 652.0,255.7 646.7,252.7 641.2,250.2 636.8,246.1 632.2,242.1 627.0,239.1 621.5,236.6 616.1,234.0 610.9,230.8 606.2,227.0 601.0,224.1 595.4,221.7 590.2,218.8 585.0,215.9"/><polygon points="570.9,196.7 576.4,199.2 581.5,202.5 587.2,204.5 592.2,207.9 597.9,210.0 603.1,213.1 608.5,215.7 613.0,220.0 618.8,221.8 624.1,224.6 628.4,229.2 633.8,231.9 639.2,234.5 643.9,238.4 649.6,240.6 654.4,244.2 659.3,247.7 664.1,251.4 669.5,254.0 674.3,257.6 679.4,260.9 684.1,264.7 689.5,267.4 693.6,272.0 698.3,275.7 704.0,278.0 708.2,282.4 713.0,286.1 718.4,288.9 722.7,293.2 726.7,297.8 732.5,300.1 737.4,303.7 741.2,308.5 746.3,311.7 751.4,314.9 755.5,319.5 760.1,323.3 765.3,326.4 769.9,330.3 773.7,335.1 778.1,339.1 783.0,342.7 787.8,346.3 791.7,349.2 792.7,348.0 789.5,344.3 784.7,340.7 780.0,337.0 775.1,333.4 771.4,328.5 766.5,325.0 761.2,322.0 757.2,317.4 752.0,314.2 747.8,309.9 743.8,305.3 738.5,302.2 733.6,298.7 728.5,295.5 724.8,290.5 719.2,287.8 714.4,284.3 709.4,280.9 704.6,277.3 700.2,273.0 694.8,270.3 690.4,266.1 685.0,263.3 680.8,258.8 675.7,255.6 670.6,252.5 665.2,249.6 660.5,245.9 656.2,241.5 650.4,239.3 645.7,235.6 640.0,233.3 634.9,230.1 630.4,225.9 625.2,222.9 619.3,220.9 614.1,217.9 609.0,214.7 603.6,212.1 598.4,209.1 592.9,206.5 587.6,203.8 582.4,200.5 577.1,197.7 571.3,196.0"/><polygon points="582.1,192.9 587.7,195.0 592.9,198.0 598.7,199.6 604.2,201.9 609.5,204.6 615.1,206.8 620.5,209.4 625.7,212.4 630.9,215.3 636.5,217.4 641.5,220.8 646.9,223.4 652.3,225.9 657.3,229.2 662.6,231.9 667.8,235.0 673.0,237.8 677.8,241.5 683.3,244.0 688.1,247.6 692.8,251.3 697.3,255.3 703.3,257.1 707.8,261.2 712.3,265.2 718.3,267.0 723.2,270.4 727.2,275.2 732.3,278.3 737.4,281.4 742.0,285.2 746.7,288.9 751.6,292.4 756.8,295.5 760.9,299.9 766.5,302.5 770.7,306.9 775.4,310.6 779.7,314.7 785.2,317.4 788.5,322.8 793.7,325.9 798.9,329.0 801.4,330.9 802.1,330.0 799.6,328.2 795.3,324.1 791.3,319.4 786.8,315.4 782.3,311.5 776.5,309.1 772.3,304.7 767.4,301.3 763.3,296.8 758.2,293.6 753.0,290.5 748.6,286.4 744.2,282.3 738.8,279.5 733.4,276.7 728.6,273.2 723.8,269.5 719.1,265.9 714.3,262.2 709.1,259.3 704.0,256.1 699.6,251.9 694.4,248.9 689.5,245.4 683.7,243.3 678.6,240.2 673.5,237.1 669.0,232.8 663.7,230.1 657.9,228.1 653.1,224.5 647.9,221.5 642.9,218.2 637.3,216.0 631.6,213.9 626.2,211.3 621.1,208.1 615.8,205.4 610.2,203.1 604.6,200.9 599.3,198.2 593.8,195.7 588.2,193.6 582.4,192.1"/><polygon points="593.1,189.5 598.7,191.7 604.2,193.9 609.4,197.0 615.2,198.6 620.2,201.9 625.6,204.5 631.1,206.8 636.8,208.8 642.1,211.6 647.5,214.2 652.8,216.9 657.4,221.0 662.8,223.6 668.6,225.5 673.5,228.9 678.7,231.9 684.1,234.5 689.0,238.0 694.2,240.9 699.4,243.8 704.2,247.5 709.4,250.4 713.7,254.8 719.3,257.2 724.3,260.4 729.2,263.9 734.3,267.0 739.1,270.7 743.7,274.5 748.9,277.4 754.1,280.4 758.4,284.8 763.1,288.5 768.8,290.9 773.0,295.2 777.6,299.0 783.2,301.7 787.9,305.3 791.5,310.4 797.4,312.6 801.6,315.8 802.4,314.8 798.3,311.4 793.5,307.8 789.1,303.7 783.9,300.6 779.3,296.8 774.4,293.3 769.2,290.3 765.0,286.0 760.0,282.5 755.3,278.9 750.3,275.5 744.9,272.8 740.4,268.7 735.6,265.2 731.0,261.2 725.1,259.3 720.1,256.0 715.0,252.7 710.9,248.1 705.4,245.6 700.0,243.0 694.8,240.0 690.3,235.8 684.9,233.2 679.8,230.0 674.2,227.7 669.3,224.1 664.3,220.8 659.0,218.0 653.3,216.0 647.9,213.5 642.5,210.8 637.5,207.3 632.1,204.8 626.4,202.9 621.2,199.9 615.6,197.6 610.2,195.2 604.7,192.6 599.0,190.9 593.4,188.7"/><polygon points="578.5,173.3 584.2,175.1 589.8,177.3 595.4,179.4 601.2,181.0 606.8,183.2 612.4,185.3 617.4,188.9 623.2,190.5 628.9,192.5 634.2,195.3 639.6,197.8 645.2,200.0 650.7,202.3 655.3,206.6 661.5,207.7 666.8,210.5 672.0,213.5 676.8,217.2 682.7,218.9 687.4,222.8 692.4,226.1 698.3,227.8 703.2,231.4 707.7,235.5 713.4,237.7 718.6,240.6 722.9,245.0 728.4,247.6 734.0,250.0 738.8,253.5 744.0,256.5 749.4,259.3 753.6,263.8 758.3,267.5 764.2,269.5 768.6,273.7 772.8,278.1 778.1,281.0 783.6,283.6 787.9,287.9 793.2,290.7 798.7,293.4 802.7,296.4 803.5,295.3 799.7,292.0 794.3,289.2 790.3,284.4 785.0,281.6 780.5,277.6 775.0,275.0 770.2,271.3 765.6,267.4 760.6,264.1 756.1,260.0 749.9,258.5 745.1,254.9 740.5,250.9 735.4,247.6 730.4,244.4 724.7,242.1 719.4,239.3 715.0,234.9 710.0,231.6 704.6,228.9 698.7,227.1 693.6,223.9 689.1,219.8 683.5,217.5 678.3,214.4 672.5,212.5 667.6,209.0 662.2,206.2 656.6,204.0 651.5,200.7 645.9,198.5 640.4,196.1 635.4,192.7 629.7,190.6 623.8,189.1 618.5,186.3 612.9,184.1 607.6,181.0 601.5,180.2 595.9,177.9 590.2,176.2 584.5,174.3 578.8,172.3"/><polygon points="592.1,169.1 597.8,170.8 603.3,173.3 609.1,174.5 614.8,176.5 620.4,178.6 626.0,180.7 631.5,182.9 636.9,185.5 642.6,187.4 647.8,190.4 653.2,193.0 659.0,194.7 664.4,197.1 669.8,199.7 674.5,203.8 680.3,205.5 685.4,208.6 690.5,211.8 696.0,214.1 701.8,216.0 706.3,220.3 712.3,221.8 717.6,224.6 722.4,228.3 727.2,231.9 732.7,234.2 738.4,236.5 742.7,241.0 748.4,243.1 753.1,246.8 758.0,250.3 763.4,253.0 768.5,256.1 773.7,259.0 778.3,262.9 783.8,265.6 788.7,269.0 793.4,272.7 798.7,275.6 801.8,276.8 802.5,275.8 800.0,273.6 794.8,270.5 790.0,267.0 784.6,264.2 780.3,259.8 774.8,257.3 769.5,254.6 764.5,251.2 760.1,246.9 754.9,243.9 749.2,241.7 743.9,238.9 739.4,234.7 734.2,231.8 728.8,229.2 723.6,226.2 718.0,223.9 713.2,220.2 707.7,217.7 702.4,214.8 696.9,212.4 691.8,209.3 686.6,206.4 681.4,203.3 675.9,200.9 670.2,199.0 665.1,195.7 659.4,193.9 654.6,189.9 648.9,187.9 643.2,185.9 637.4,184.4 631.9,182.1 626.8,178.6 621.0,177.0 615.2,175.4 609.4,173.8 603.8,171.7 598.2,169.7 592.3,168.3"/><polygon points="602.0,159.4 607.8,161.1 613.2,163.8 619.2,164.8 624.9,166.8 630.5,168.8 635.7,172.1 641.6,173.5 647.3,175.3 652.7,178.0 658.4,179.9 663.7,182.9 669.4,184.9 674.7,187.7 680.1,190.2 685.8,192.3 690.7,196.0 696.6,197.6 701.3,201.4 707.1,203.4 712.6,205.8 717.9,208.6 722.3,213.0 728.0,215.1 733.7,217.3 738.6,220.9 743.6,224.1 749.3,226.3 754.2,229.7 758.9,233.7 764.8,235.4 769.4,239.3 773.9,243.5 779.6,245.8 785.3,248.0 790.1,251.6 794.6,255.6 800.4,257.8 803.3,259.5 803.8,258.8 800.9,256.9 796.4,252.8 791.1,249.9 785.7,247.3 781.0,243.5 776.1,239.9 771.4,236.0 766.0,233.4 760.1,231.6 755.3,227.9 750.7,223.8 744.8,222.0 739.5,219.2 734.5,215.8 729.0,213.3 724.1,209.7 718.8,207.0 713.4,204.3 707.6,202.3 702.3,199.6 697.2,196.3 691.8,193.7 686.2,191.5 680.8,188.7 675.7,185.5 670.0,183.4 664.7,180.5 658.8,179.1 653.2,176.8 647.7,174.5 642.2,172.0 636.8,169.3 630.8,168.0 625.1,166.0 619.5,164.0 614.0,161.3 608.1,160.1 602.2,158.7"/><polygon points="673.5,190.5 678.8,193.4 684.3,195.7 689.6,198.5 694.4,202.4 700.3,203.9 705.6,206.8 710.3,210.8 716.1,212.7 721.9,214.3 726.7,218.3 732.5,220.1 737.7,223.2 743.2,225.6 748.2,228.9 753.8,231.1 758.9,234.4 764.4,236.8 769.5,240.1 775.1,242.2 779.6,246.6 785.6,248.1 790.9,250.9 796.2,253.6 802.1,255.4 803.2,254.5 803.6,253.8 803.8,251.8 798.8,248.4 792.9,246.8 787.8,243.6 782.1,241.5 777.5,237.5 771.8,235.3 765.8,234.0 760.8,230.6 755.0,228.8 749.8,225.7 744.5,222.8 739.0,220.5 733.5,218.0 728.3,215.1 723.0,212.3 717.7,209.4 711.8,207.8 706.6,204.8 700.9,202.8 695.8,199.5 690.0,197.7 684.6,195.0 679.3,192.4 673.9,189.7"/><polygon points="693.5,161.8 698.2,165.7 703.8,167.9 709.1,170.9 713.3,175.4 719.3,177.1 724.2,180.6 729.2,183.9 733.8,187.9 739.8,189.5 745.2,192.3 749.6,196.6 755.1,199.0 760.6,201.5 764.6,206.5 770.3,208.7 775.3,212.1 780.3,215.3 785.0,219.3 791.3,220.4 796.0,224.2 801.3,227.0 802.4,226.0 802.8,225.3 802.9,224.3 798.4,220.1 793.1,217.4 787.7,214.7 782.6,211.5 777.5,208.4 772.2,205.5 767.0,202.6 761.5,200.0 756.3,197.1 752.1,192.5 746.4,190.2 740.8,187.9 735.3,185.4 730.2,182.2 725.4,178.5 720.0,175.9 714.7,173.0 709.8,169.6 704.3,167.2 699.4,163.5 694.0,161.0"/><polygon points="704.3,167.6 709.3,171.0 713.6,175.2 719.3,177.6 724.2,181.0 728.3,185.7 734.0,187.9 738.7,191.7 743.1,196.0 747.8,199.7 753.6,201.9 758.5,205.4 762.3,210.3 768.1,212.5 773.2,215.7 776.9,220.9 782.7,223.0 787.4,226.8 792.5,230.0 796.3,235.0 803.0,235.8 803.7,236.0 804.8,234.5 804.7,233.5 799.9,229.8 795.0,226.3 790.2,222.7 785.7,218.7 780.0,216.4 774.8,213.4 770.3,209.3 765.9,205.2 760.1,202.9 755.3,199.4 749.7,196.9 745.1,193.0 740.9,188.5 735.7,185.4 729.8,183.5 724.8,180.1 719.9,176.6 715.2,172.8 710.1,169.8 704.7,167.0"/><polygon points="737.1,130.2 742.3,133.2 747.4,136.3 751.8,140.6 757.7,142.5 762.4,146.3 767.0,150.4 773.1,151.8 778.3,154.7 782.7,159.2 788.3,161.4 793.4,164.6 798.8,167.3 803.0,169.0 804.3,166.8 800.8,163.7 795.9,160.2 790.5,157.5 785.4,154.4 780.1,151.7 774.8,148.8 768.7,147.4 763.5,144.4 758.6,140.8 753.7,137.4 748.0,135.3 742.7,132.4 737.5,129.5"/><polygon points="754.1,111.9 759.5,114.4 765.1,116.6 770.5,119.3 775.3,123.2 781.1,124.9 786.3,128.0 791.4,131.3 797.6,132.2 802.1,132.9 802.7,131.7 798.8,129.3 793.6,126.4 787.8,124.7 782.4,122.1 777.4,118.4 771.5,117.1 765.4,115.9 759.9,113.5 754.5,111.0"/></g>
<g fill="rgba(140,75,45,0.55)" stroke="none"><polygon points="401.8,277.5 401.5,283.5 400.7,289.5 400.6,295.5 400.2,301.5 400.1,307.5 399.9,313.5 399.4,319.5 399.2,325.5 399.1,331.5 398.7,337.5 398.5,343.5 398.9,349.5 399.6,350.0 400.4,350.0 401.1,349.5 401.5,343.5 402.0,337.5 401.9,331.5 402.0,325.6 401.7,319.5 402.0,313.6 402.0,307.6 402.0,301.6 402.4,295.6 402.5,289.6 402.3,283.6 402.6,277.6"/><polygon points="415.5,272.2 414.9,278.1 414.0,284.1 413.9,290.1 413.3,296.1 412.7,302.0 412.2,308.0 411.6,314.0 411.1,320.0 410.5,326.0 410.0,331.9 409.7,337.9 409.3,343.9 409.0,349.9 409.6,350.0 410.4,350.0 410.8,350.0 411.7,344.1 411.9,338.1 412.5,332.1 412.9,326.1 412.9,320.1 413.6,314.1 414.1,308.2 414.2,302.2 414.3,296.2 415.0,290.2 415.3,284.2 415.7,278.2 416.3,272.2"/><polygon points="415.9,269.6 416.1,275.6 416.0,281.7 416.0,287.7 416.2,293.7 416.8,299.6 416.8,305.6 416.9,311.7 417.2,317.6 417.7,323.6 417.7,329.6 417.8,335.6 418.3,341.6 419.3,347.6 419.6,350.0 420.4,350.0 420.5,347.5 420.9,341.5 420.4,335.5 420.0,329.5 419.3,323.5 419.4,317.5 418.9,311.6 418.7,305.6 418.3,299.6 418.0,293.6 417.5,287.6 417.4,281.6 416.9,275.6 416.7,269.6"/><polygon points="426.4,271.1 426.5,277.1 426.5,283.1 426.5,289.1 426.8,295.1 426.9,301.1 426.7,307.1 427.0,313.1 427.0,319.1 426.8,325.1 427.4,331.1 427.6,337.1 427.4,343.1 428.3,349.1 428.6,350.0 429.4,350.0 429.7,349.1 430.1,343.0 429.8,337.1 429.4,331.1 429.5,325.1 428.9,319.1 428.6,313.1 428.4,307.1 428.3,301.1 428.3,295.1 427.6,289.1 427.8,283.1 427.3,277.1 427.2,271.1"/><polygon points="614.3,268.9 619.1,272.4 623.7,276.4 628.5,279.9 633.2,283.6 637.9,287.4 642.8,290.8 647.4,294.7 652.2,298.3 656.6,302.3 661.1,306.3 665.6,310.3 670.2,314.1 674.6,318.2 678.8,322.5 683.5,326.3 687.9,330.3 691.8,334.8 696.2,338.9 700.5,343.1 705.1,347.0 708.7,350.3 709.3,349.7 706.2,346.0 702.2,341.4 697.9,337.2 693.7,332.9 689.2,328.9 684.7,324.9 680.3,320.9 675.7,316.9 671.5,312.7 667.0,308.7 662.3,304.9 657.6,301.2 653.2,297.1 648.5,293.3 643.6,289.8 638.9,286.1 634.2,282.3 629.3,278.9 624.5,275.3 619.7,271.7 614.7,268.3"/><polygon points="626.4,265.4 631.2,269.0 635.7,272.9 640.4,276.7 645.0,280.4 649.6,284.3 654.4,287.9 659.1,291.6 663.7,295.5 668.1,299.6 672.5,303.6 677.1,307.5 681.4,311.7 686.1,315.3 690.4,319.5 694.7,323.8 698.9,328.0 703.3,332.1 707.7,336.1 712.0,340.3 716.3,344.5 720.8,348.4 723.7,350.3 724.3,349.7 722.4,346.9 718.7,342.1 714.3,338.0 709.8,333.9 705.2,330.1 700.9,325.9 696.6,321.7 692.3,317.5 687.6,313.7 683.2,309.6 678.6,305.7 674.2,301.7 669.5,297.9 664.7,294.2 660.0,290.6 655.5,286.6 650.6,283.0 646.0,279.2 641.4,275.3 636.6,271.8 631.7,268.3 626.9,264.7"/><polygon points="634.2,257.3 639.1,260.8 643.8,264.5 648.7,268.0 653.2,271.9 658.2,275.2 662.8,279.0 667.5,282.8 672.2,286.5 676.8,290.4 681.4,294.3 686.0,298.1 690.6,301.9 695.1,305.9 699.7,309.7 704.0,313.9 708.6,317.7 712.9,322.0 717.3,326.0 721.7,330.1 726.0,334.3 730.6,338.1 734.9,342.3 739.3,346.4 743.9,350.2 744.7,350.3 745.3,349.7 745.0,349.0 741.3,344.3 736.7,340.4 732.2,336.4 727.9,332.3 723.5,328.1 719.0,324.1 714.6,320.1 710.3,315.9 705.7,312.0 701.1,308.2 696.5,304.3 692.0,300.3 687.3,296.5 682.6,292.7 677.7,289.3 673.3,285.2 668.3,281.8 663.7,278.0 658.8,274.4 654.1,270.8 649.5,266.9 644.4,263.6 639.6,260.1 634.7,256.6"/><polygon points="661.4,263.2 666.2,266.7 671.0,270.3 675.8,274.0 680.4,277.8 685.2,281.4 690.2,284.8 694.8,288.6 699.6,292.2 704.1,296.1 709.0,299.6 713.7,303.4 718.2,307.4 722.9,311.0 727.4,315.0 731.7,319.2 736.6,322.8 741.2,326.6 745.5,330.8 750.2,334.5 754.7,338.5 758.9,342.8 763.5,346.7 768.3,350.2 768.7,350.3 769.3,349.7 769.2,349.3 765.2,344.7 760.7,340.7 756.0,337.0 751.5,333.0 747.0,329.0 742.4,325.1 737.8,321.4 733.3,317.3 728.4,313.8 723.7,310.0 719.3,306.0 714.6,302.2 709.7,298.7 705.2,294.8 700.3,291.3 695.7,287.5 690.9,283.9 686.0,280.4 681.4,276.6 676.6,272.8 671.6,269.6 666.7,266.1 661.8,262.6"/><polygon points="658.8,248.4 663.8,251.7 668.6,255.4 673.7,258.6 678.7,261.9 683.3,265.8 688.2,269.2 693.3,272.4 697.9,276.3 702.7,279.9 707.4,283.5 712.5,286.8 717.3,290.4 721.8,294.3 726.7,297.8 731.3,301.6 736.1,305.2 740.8,309.0 745.1,313.2 749.7,317.0 754.7,320.4 759.0,324.6 763.8,328.2 768.5,332.0 773.0,335.9 777.5,339.9 782.0,343.8 786.8,347.4 790.7,350.3 791.3,349.7 787.9,346.2 783.7,341.9 779.2,337.9 774.4,334.2 769.7,330.5 765.0,326.7 760.5,322.8 755.8,319.1 751.3,315.1 746.7,311.2 742.0,307.5 737.1,304.0 732.5,300.2 727.6,296.7 723.1,292.6 718.1,289.3 713.4,285.5 708.4,282.2 703.8,278.3 699.0,274.7 693.8,271.6 689.0,268.1 684.3,264.3 679.2,261.1 674.5,257.4 669.5,254.1 664.3,251.0 659.3,247.7"/><polygon points="674.1,236.1 679.2,239.2 684.2,242.6 689.2,245.8 694.3,249.0 699.5,252.0 704.4,255.5 709.2,259.1 714.3,262.3 719.3,265.5 724.0,269.3 728.8,272.8 733.9,276.0 738.8,279.5 743.4,283.4 748.1,287.1 752.9,290.6 757.8,294.1 762.5,297.8 767.2,301.5 771.9,305.3 776.6,309.1 781.2,312.8 786.1,316.3 790.4,320.5 795.3,324.0 800.1,327.6 802.7,329.3 803.3,328.7 801.0,326.5 796.9,322.1 792.2,318.3 787.6,314.4 782.8,310.8 778.0,307.3 773.3,303.5 768.7,299.6 763.7,296.3 759.2,292.3 754.3,288.8 749.5,285.2 744.7,281.6 739.6,278.5 734.7,274.9 729.9,271.3 725.0,267.9 719.9,264.6 715.0,261.2 710.0,257.9 705.0,254.5 700.0,251.2 695.1,247.7 689.9,244.8 684.8,241.6 679.6,238.5 674.5,235.4"/><polygon points="679.9,229.8 685.1,232.9 690.2,236.0 695.1,239.4 700.3,242.4 705.5,245.5 710.6,248.6 715.5,252.0 720.7,255.1 725.4,258.8 730.4,262.1 735.4,265.5 740.5,268.6 745.4,272.0 750.2,275.6 755.0,279.2 759.8,282.8 764.9,286.1 769.5,290.0 774.6,293.1 779.2,296.9 784.1,300.4 788.7,304.3 793.3,308.1 798.4,311.3 802.8,314.3 803.2,313.7 799.2,310.3 794.7,306.3 789.8,302.8 785.3,298.9 780.1,295.7 775.6,291.8 770.5,288.5 765.7,284.9 761.1,281.1 756.0,277.8 751.0,274.5 746.1,271.1 741.1,267.8 736.2,264.3 731.4,260.7 726.4,257.3 721.4,254.0 716.1,251.2 711.2,247.6 705.9,244.7 701.1,241.2 695.7,238.4 690.6,235.3 685.5,232.2 680.3,229.2"/><polygon points="726.9,217.9 732.3,220.5 737.6,223.3 742.8,226.3 748.1,229.1 753.6,231.6 758.8,234.6 764.1,237.4 769.5,240.0 774.7,243.1 780.2,245.5 785.3,248.6 790.7,251.3 796.2,253.7 801.8,255.8 802.8,255.4 803.2,254.6 803.0,253.6 798.0,250.1 792.6,247.5 787.1,245.0 781.6,242.6 776.2,240.0 770.8,237.4 765.2,235.1 759.8,232.6 754.3,230.0 748.9,227.5 743.7,224.6 738.1,222.2 732.7,219.7 727.3,217.1"/><polygon points="740.5,188.4 745.6,191.6 750.5,195.1 755.7,198.0 760.8,201.2 765.9,204.3 771.1,207.4 776.1,210.7 781.0,214.2 786.2,217.3 791.2,220.5 796.3,223.6 802.0,225.8 802.7,225.4 803.3,224.5 803.3,223.7 798.6,219.8 793.3,217.0 788.1,214.1 782.8,211.2 777.6,208.1 772.4,205.1 767.0,202.5 762.0,199.2 756.7,196.5 751.6,193.3 746.1,190.8 740.9,187.7"/><polygon points="743.1,196.0 748.0,199.4 752.9,202.9 757.6,206.6 762.4,210.3 767.4,213.6 772.0,217.4 777.0,220.8 781.7,224.5 786.6,228.0 791.4,231.6 796.4,234.9 801.6,237.9 802.7,237.4 803.3,236.6 803.3,235.4 798.8,231.5 793.9,227.9 788.9,224.7 783.9,221.3 778.8,218.1 773.7,215.0 768.6,211.8 763.7,208.4 758.8,204.8 753.8,201.6 748.5,198.7 743.5,195.3"/></g>
<g fill="none" stroke="#90ee80" stroke-width="1" stroke-linejoin="round"><polygon points="383.4,193.5 377.5,195.0 372.3,198.1 366.6,200.2 367.1,201.4 372.6,198.9 378.2,196.7 384.0,195.1"/><polygon points="360.9,202.1 355.8,205.5 349.7,206.6 344.3,209.4 339.9,213.9 340.5,215.0 346.1,212.7 351.6,210.4 356.2,206.2 361.6,203.6"/><polygon points="319.5,226.7 314.4,229.8 309.1,232.7 305.0,237.3 305.6,238.0 311.2,235.5 315.6,231.5 320.0,227.3"/><polygon points="295.7,244.9 289.9,247.4 284.6,250.5 281.9,256.6 275.7,258.7 270.9,262.5 268.1,268.2 263.7,272.4 259.4,276.6 255.6,281.3 251.2,285.5 246.3,289.2 242.7,294.1 240.7,300.3 235.8,304.1 230.4,307.5 228.9,313.9 224.6,318.2 220.6,322.8 217.1,327.7 213.6,332.6 210.0,337.5 207.3,342.9 205.5,349.0 205.4,349.6 206.7,350.4 207.5,350.2 211.3,345.6 215.5,341.2 219.3,336.6 223.1,331.9 225.9,326.6 229.4,321.8 234.1,317.9 237.5,313.0 239.4,306.9 243.8,302.7 246.9,297.6 251.4,293.5 255.1,288.9 259.5,284.8 262.2,279.2 267.3,275.8 271.5,271.6 275.2,266.9 279.6,262.8 283.6,258.3 289.1,255.6 293.1,251.1 296.4,245.8"/><polygon points="409.4,183.7 404.5,180.2 399.3,177.3 398.7,178.2 403.6,181.7 409.0,184.4"/><polygon points="394.2,174.1 389.9,169.6 384.0,167.7 383.6,168.4 388.2,172.3 393.6,175.0"/><polygon points="404.9,179.7 398.8,180.2 393.1,182.2 387.8,185.2 388.1,185.9 394.0,184.8 399.7,183.1 405.2,180.4"/><polygon points="366.1,195.6 360.3,197.7 356.0,202.1 350.9,205.4 345.6,208.3 346.8,210.0 351.4,206.1 356.4,202.8 361.9,200.3 366.9,197.0"/><polygon points="336.2,215.9 331.5,219.7 327.5,224.2 328.0,224.8 332.9,221.3 337.3,217.1"/><polygon points="310.2,240.9 306.0,245.1 300.3,248.1 296.7,253.0 293.9,258.5 288.7,261.9 283.9,265.8 281.0,271.3 277.7,276.3 272.3,279.8 270.8,286.2 266.4,290.5 262.4,295.0 259.3,300.2 256.5,305.5 251.5,309.5 248.6,314.8 245.2,319.7 241.6,324.6 238.6,329.8 236.2,335.4 233.4,340.8 229.4,345.3 229.3,349.6 230.3,350.2 233.6,347.9 238.6,344.0 240.6,338.1 242.8,332.5 247.2,328.1 251.6,323.9 253.3,317.9 257.3,313.4 259.5,307.7 264.2,303.6 267.4,298.6 270.5,293.4 273.5,288.2 277.3,283.6 282.0,279.7 286.2,275.4 288.4,269.5 291.3,264.1 295.4,259.8 300.5,256.4 304.8,252.2 307.3,246.4 310.8,241.4"/><polygon points="310.9,241.5 306.7,245.8 302.4,250.0 298.0,254.1 294.3,258.8 290.4,263.4 285.9,267.5 283.2,273.0 279.0,277.3 274.9,281.8 271.4,286.6 268.6,292.0 264.0,296.1 260.3,300.9 258.2,306.7 254.3,311.3 250.8,316.2 247.2,321.0 243.9,326.1 240.7,331.1 238.3,336.7 234.8,341.6 231.4,346.5 230.4,350.2 231.1,350.7 233.9,348.1 237.3,343.1 239.5,337.5 242.9,332.5 246.5,327.7 250.7,323.3 253.7,318.2 255.8,312.4 259.4,307.5 262.9,302.7 267.2,298.4 270.5,293.4 273.7,288.4 276.9,283.3 280.9,278.8 284.4,274.0 287.6,268.9 291.5,264.3 295.5,259.9 300.1,256.0 304.3,251.7 307.3,246.4 311.4,242.0"/><polygon points="408.6,178.0 413.0,174.0 417.2,169.6 416.6,169.0 412.1,172.9 407.7,177.1"/><polygon points="421.6,165.6 426.7,162.2 430.8,157.9 429.8,156.7 424.8,160.1 421.1,165.0"/><polygon points="435.2,153.8 439.9,150.0 443.9,145.5 443.3,144.9 438.9,148.9 434.4,152.8"/><polygon points="448.3,141.4 453.0,137.6 457.6,133.8 456.3,132.4 451.8,136.3 447.8,140.9"/><polygon points="423.3,181.9 417.6,183.7 411.8,185.4 412.3,186.8 418.0,185.2 423.5,182.7"/><polygon points="406.3,187.8 400.4,189.5 394.4,190.7 389.7,195.1 384.6,198.1 384.9,198.8 390.2,196.0 396.3,194.8 401.2,191.3 406.6,188.6"/><polygon points="354.5,218.0 348.6,220.3 345.2,225.6 345.7,226.2 350.8,222.9 355.6,219.4"/><polygon points="335.8,233.1 331.4,237.2 327.6,242.0 321.6,244.5 317.2,248.7 314.1,254.1 309.3,257.9 304.8,262.0 301.5,267.1 298.0,272.1 294.5,277.0 290.1,281.2 288.0,287.2 284.1,291.8 279.9,296.2 277.8,302.1 274.2,306.9 269.1,310.8 266.4,316.2 263.2,321.3 258.9,325.8 256.3,331.2 254.8,337.3 251.4,342.3 248.6,347.6 249.7,349.8 250.3,350.2 253.1,350.2 256.1,345.0 259.0,339.8 261.3,334.2 264.7,329.2 268.4,324.5 271.7,319.5 274.7,314.4 277.3,309.0 280.4,303.8 285.1,299.8 288.9,295.2 291.3,289.6 294.9,284.8 298.7,280.2 302.2,275.4 305.1,270.1 309.4,265.8 312.7,260.9 318.2,257.7 321.8,252.9 324.6,247.4 329.2,243.6 332.8,238.7 337.1,234.5"/><polygon points="421.3,178.9 418.6,173.4 413.8,169.5 413.2,170.0 416.3,175.2 420.3,179.7"/><polygon points="410.1,164.8 406.5,160.0 402.7,155.3 401.6,156.2 405.5,160.8 409.5,165.3"/><polygon points="384.7,197.2 379.8,200.8 374.4,203.5 369.8,207.5 371.2,209.3 375.9,205.6 380.6,201.8 385.3,198.2"/><polygon points="361.2,216.0 356.6,219.9 351.8,223.7 348.4,228.7 349.4,229.6 354.7,226.4 358.3,221.6 361.8,216.6"/><polygon points="341.3,238.4 337.2,242.8 333.5,247.6 329.9,252.3 325.9,256.9 322.5,261.8 319.4,267.0 316.0,271.9 311.6,276.2 309.1,281.7 306.2,286.9 302.8,291.9 299.1,296.6 295.8,301.7 293.3,307.2 289.3,311.8 286.6,317.2 284.7,323.0 280.6,327.6 277.9,332.9 275.9,338.7 272.9,343.9 269.8,349.0 270.5,350.2 271.2,350.6 272.2,350.3 276.0,345.5 278.6,340.1 280.6,334.4 283.1,328.9 286.6,324.0 290.1,319.1 292.0,313.3 295.1,308.2 297.9,302.9 301.4,298.1 304.6,293.0 307.2,287.6 310.7,282.7 313.4,277.3 317.6,272.9 321.3,268.3 324.3,263.1 327.4,258.0 331.0,253.2 334.5,248.3 338.3,243.7 341.9,238.9"/><polygon points="403.8,184.4 400.1,179.5 395.0,176.2 394.2,177.1 398.3,181.6 403.3,185.0"/><polygon points="390.5,172.3 386.3,168.0 381.2,164.6 380.7,165.2 385.2,169.3 389.8,173.1"/><polygon points="410.3,186.6 404.1,187.7 399.6,192.1 394.6,195.4 389.4,198.4 390.4,199.8 395.0,196.0 400.0,192.8 405.4,190.0 410.9,187.9"/><polygon points="359.2,228.0 355.7,232.9 351.6,237.3 346.4,241.0 344.5,247.1 341.0,252.0 335.7,255.7 332.5,260.9 330.1,266.5 327.5,272.0 323.3,276.5 321.4,282.4 317.5,287.2 314.8,292.5 312.1,297.9 310.0,303.6 305.8,308.3 303.5,313.9 301.9,319.8 297.1,324.2 295.4,330.0 293.0,335.6 289.8,340.7 288.7,346.8 290.4,349.7 291.7,350.3 294.6,349.5 298.3,344.6 301.0,339.2 302.2,333.2 305.3,328.1 308.7,323.1 311.9,318.0 312.2,311.5 314.7,306.1 319.4,301.7 321.6,296.2 324.5,291.0 325.7,284.8 328.7,279.6 333.8,275.7 337.1,270.8 338.9,264.9 340.6,258.9 345.2,254.8 348.0,249.5 353.0,245.7 355.0,239.9 357.5,234.2 360.6,229.1"/><polygon points="407.1,184.8 401.9,181.7 396.4,179.2 395.7,180.7 400.8,184.0 406.7,185.6"/><polygon points="390.9,176.9 385.7,173.8 380.0,171.9 379.7,172.6 384.9,175.5 390.4,178.0"/><polygon points="398.8,193.5 393.6,196.6 388.2,199.6 385.0,205.0 385.5,205.6 390.6,202.2 395.2,198.7 399.3,194.2"/><polygon points="377.3,214.3 372.5,218.2 368.4,222.9 367.0,229.1 363.6,234.1 364.8,234.8 367.9,229.7 373.3,226.0 375.7,220.5 378.6,215.2"/><polygon points="357.2,244.3 353.5,249.1 351.4,254.8 348.8,260.3 344.7,265.0 342.7,270.7 339.9,276.0 337.3,281.5 334.6,286.9 332.5,292.5 329.8,297.9 327.4,303.4 325.7,309.2 322.9,314.6 319.1,319.5 317.7,325.5 316.0,331.2 312.3,336.2 310.4,341.9 309.9,348.2 310.2,349.3 311.7,349.9 313.2,349.5 316.6,344.4 318.1,338.5 319.7,332.7 322.5,327.4 324.6,321.7 326.5,316.0 328.1,310.2 330.9,304.9 333.1,299.3 335.5,293.8 338.3,288.5 339.4,282.4 342.3,277.2 345.8,272.2 347.6,266.4 350.5,261.1 352.3,255.3 355.3,250.1 358.1,244.8"/><polygon points="398.5,189.8 397.2,184.0 395.5,178.2 394.4,178.5 395.6,184.4 397.7,190.0"/><polygon points="394.0,172.4 393.6,166.3 391.1,160.8 390.2,161.0 390.2,167.2 393.0,172.7"/><polygon points="389.8,154.9 388.6,149.0 386.5,143.4 385.7,143.6 386.6,149.5 388.7,155.2"/><polygon points="394.0,201.5 389.9,206.1 386.0,210.8 384.9,217.1 385.6,217.5 389.6,212.8 392.4,207.6 394.7,202.0"/><polygon points="379.5,227.8 375.3,232.5 373.0,238.1 370.9,243.7 366.8,248.5 363.7,253.8 363.3,260.1 360.2,265.4 357.0,270.6 356.4,276.8 354.1,282.4 351.5,287.8 349.3,293.4 347.9,299.3 344.1,304.3 342.2,310.1 341.4,316.1 338.5,321.5 335.2,326.8 334.6,332.9 334.1,339.1 332.1,344.7 332.8,349.6 334.4,350.1 338.1,346.7 342.3,341.8 343.9,336.0 344.5,329.9 346.0,324.0 349.1,318.8 351.6,313.3 353.3,307.6 354.1,301.5 356.2,295.9 358.9,290.5 360.2,284.7 361.2,278.6 362.8,272.8 365.3,267.4 369.5,262.6 370.7,256.6 371.9,250.7 373.7,245.0 377.4,240.0 379.8,234.6 380.8,228.4"/><polygon points="409.5,185.8 414.0,181.8 417.1,176.6 416.5,176.0 412.3,180.4 408.5,185.0"/><polygon points="421.0,172.0 425.1,167.6 429.4,163.4 427.9,162.1 423.6,166.3 420.4,171.5"/><polygon points="433.0,158.6 437.7,154.7 440.7,149.4 440.1,148.8 436.1,153.4 432.1,157.8"/><polygon points="414.1,181.6 410.7,186.7 407.3,191.7 408.0,192.1 411.4,187.2 415.3,182.7"/><polygon points="400.1,201.6 397.8,207.1 395.4,212.7 392.0,217.9 390.4,223.7 388.5,229.4 386.3,235.1 384.3,240.8 382.4,246.5 380.5,252.2 377.6,257.6 377.4,263.8 375.1,269.4 372.2,274.8 371.6,280.9 369.9,286.6 367.4,292.2 366.0,298.1 364.8,304.0 363.0,309.7 361.4,315.5 361.1,321.6 358.6,327.2 356.0,332.7 355.0,338.7 354.5,344.7 353.6,349.4 355.0,349.7 356.3,345.2 358.7,339.6 361.2,334.0 362.1,328.1 363.2,322.2 363.9,316.2 366.6,310.7 368.4,304.9 369.6,299.1 370.5,293.1 371.5,287.1 373.5,281.4 375.8,275.9 378.0,270.3 378.6,264.2 380.9,258.6 382.6,252.8 384.8,247.3 387.0,241.7 387.6,235.5 389.6,229.8 392.6,224.6 394.5,218.8 396.2,213.0 398.5,207.5 401.0,202.0"/><polygon points="411.6,180.3 406.7,176.6 400.8,175.1 400.4,175.8 405.2,179.6 411.1,181.3"/><polygon points="395.4,172.3 390.1,169.5 384.7,167.0 384.0,168.4 389.6,170.6 395.0,173.2"/><polygon points="379.2,164.6 374.4,160.6 368.4,159.4 368.0,160.1 372.8,164.0 378.6,165.7"/><polygon points="363.0,156.7 357.6,154.2 352.2,151.6 351.7,152.4 357.2,154.9 362.6,157.5"/><polygon points="414.5,188.0 409.9,192.4 408.9,198.7 406.8,204.4 407.6,204.6 409.7,199.0 412.7,193.9 415.6,188.7"/><polygon points="402.7,215.7 400.1,221.2 398.4,227.0 396.6,232.8 395.1,238.6 395.4,244.8 392.6,250.4 391.0,256.2 389.6,262.1 388.0,267.9 386.6,273.8 385.2,279.6 384.5,285.6 382.3,291.3 382.4,297.5 382.3,303.5 380.4,309.3 377.8,315.0 378.2,321.1 377.4,327.1 375.0,332.8 373.8,338.7 375.8,345.1 376.4,349.8 379.9,350.3 382.1,346.0 383.4,340.2 386.0,334.5 387.3,328.6 387.6,322.6 388.1,316.6 387.9,310.6 389.9,304.8 390.2,298.8 391.0,292.8 390.6,286.7 392.7,281.0 393.2,275.0 394.9,269.2 396.4,263.4 396.3,257.3 396.4,251.2 400.1,245.9 401.4,240.1 402.4,234.2 401.4,227.8 402.4,221.8 404.4,216.2"/><polygon points="418.0,185.8 423.3,182.7 427.0,177.9 426.3,177.1 421.3,180.5 417.5,185.3"/><polygon points="431.6,174.0 436.3,170.3 440.1,165.6 439.6,165.0 435.2,169.0 430.8,173.1"/><polygon points="444.6,161.5 449.7,158.2 453.7,153.8 452.6,152.5 447.6,156.0 444.0,160.9"/><polygon points="406.1,223.7 403.3,229.4 402.3,235.4 402.0,241.4 401.5,247.4 401.1,253.4 399.8,259.4 399.6,265.4 398.8,271.4 399.6,277.4 397.9,283.4 397.2,289.3 397.1,295.4 396.6,301.4 395.3,307.3 396.6,313.4 395.8,319.4 395.5,325.4 393.4,331.4 395.3,337.4 393.6,343.4 395.5,349.4 399.0,350.0 400.6,350.0 404.2,349.6 406.0,343.6 406.7,337.6 404.8,331.6 405.8,325.6 406.1,319.7 406.4,313.7 405.3,307.7 404.5,301.6 406.0,295.7 407.1,289.8 407.7,283.8 405.9,277.7 404.8,271.7 406.3,265.8 406.6,259.8 408.4,253.9 406.9,247.8 406.6,241.8 407.2,235.9 408.0,229.9 407.6,223.9"/><polygon points="405.7,223.6 404.7,229.6 403.8,235.5 403.8,241.6 402.5,247.5 401.0,253.4 401.6,259.5 400.5,265.4 399.6,271.4 399.7,277.4 400.0,283.5 399.5,289.4 398.9,295.4 399.5,301.5 398.0,307.4 397.7,313.4 398.9,319.5 397.3,325.4 397.3,331.4 397.7,337.5 397.0,343.5 397.7,349.5 398.9,350.0 400.0,350.0 401.3,349.5 402.8,343.6 402.4,337.6 401.6,331.5 403.0,325.6 403.5,319.6 403.8,313.6 403.0,307.6 402.7,301.6 402.4,295.6 403.9,289.6 403.3,283.6 403.7,277.6 403.2,271.6 403.3,265.6 404.0,259.6 404.9,253.7 405.1,247.7 405.1,241.7 405.2,235.7 406.2,229.7 406.7,223.8"/><polygon points="410.0,192.1 405.1,188.7 400.1,185.3 399.2,186.7 404.0,190.5 409.6,192.8"/><polygon points="394.9,182.3 390.3,178.4 384.8,175.8 384.4,176.5 389.2,180.2 394.2,183.4"/><polygon points="428.4,183.2 426.5,188.9 423.6,194.4 423.0,200.5 423.0,206.6 423.8,206.7 425.4,200.9 427.3,195.2 427.3,189.1 429.2,183.4"/><polygon points="428.6,179.2 427.2,173.4 426.0,167.5 425.2,167.7 426.1,173.6 427.6,179.4"/><polygon points="424.8,161.6 425.0,155.5 422.5,149.9 421.7,150.0 421.6,156.2 424.0,161.8"/><polygon points="421.6,143.9 420.7,138.0 418.9,132.2 418.1,132.4 419.2,138.3 420.5,144.2"/><polygon points="417.8,191.7 417.1,197.6 416.4,203.6 415.1,209.6 417.1,209.7 417.3,203.7 418.0,197.8 419.0,191.9"/><polygon points="415.3,215.6 415.5,221.6 413.2,227.6 413.0,233.6 413.7,239.6 414.6,245.7 411.7,251.7 413.9,257.7 414.9,263.7 412.4,269.7 413.6,275.7 414.5,281.7 414.5,287.7 413.4,293.8 413.9,299.8 414.5,305.8 413.9,311.8 414.6,317.8 415.6,323.7 414.2,329.8 414.4,335.8 416.7,341.7 417.4,347.7 418.5,350.1 421.2,349.9 423.3,347.4 423.6,341.3 422.2,335.4 421.2,329.4 423.7,323.3 422.3,317.4 422.3,311.4 421.0,305.5 420.6,299.5 420.5,293.5 420.8,287.5 419.2,281.5 419.4,275.5 418.8,269.6 419.1,263.6 419.2,257.6 417.9,251.6 417.1,245.6 418.1,239.6 419.2,233.6 418.6,227.7 416.9,221.7 416.4,215.7"/><polygon points="415.2,215.6 415.1,221.6 414.0,227.6 414.0,233.6 414.5,239.6 415.0,245.6 413.8,251.7 414.5,257.7 415.3,263.7 414.4,269.7 415.0,275.7 415.1,281.7 414.4,287.7 414.8,293.7 416.0,299.7 416.0,305.7 415.5,311.7 416.2,317.7 416.2,323.7 416.5,329.7 416.7,335.7 417.7,341.7 417.8,347.7 418.6,350.1 420.3,350.0 421.4,347.5 421.4,341.5 420.1,335.5 419.7,329.5 419.7,323.5 420.0,317.5 419.4,311.5 417.8,305.6 417.8,299.6 418.7,293.6 418.2,287.6 417.6,281.6 417.4,275.6 417.0,269.6 417.1,263.6 417.6,257.6 415.9,251.6 416.5,245.6 416.7,239.6 417.4,233.6 416.3,227.6 415.9,221.6 416.1,215.6"/><polygon points="417.4,187.9 414.6,182.6 411.1,177.7 410.5,178.1 413.3,183.4 416.2,188.6"/><polygon points="425.7,217.1 425.0,223.1 425.6,229.1 423.7,235.1 422.7,241.1 424.0,247.1 424.5,253.1 424.1,259.2 424.9,265.2 425.0,271.2 422.5,277.2 423.4,283.2 425.0,289.2 424.1,295.2 423.0,301.2 423.7,307.2 423.1,313.2 424.1,319.2 424.5,325.2 425.0,331.2 423.4,337.3 424.1,343.3 426.8,349.2 427.3,350.1 430.6,349.9 431.0,349.0 432.6,343.0 432.2,337.0 433.0,330.9 432.3,325.0 431.4,319.0 431.8,313.0 430.7,307.0 430.9,301.0 430.5,295.0 430.1,289.0 430.3,283.1 429.7,277.1 429.5,271.1 429.4,265.1 428.7,259.1 428.0,253.1 429.5,247.1 430.0,241.1 429.2,235.1 427.9,229.1 427.6,223.1 427.5,217.1"/><polygon points="430.0,189.4 432.2,183.8 433.0,177.8 432.2,177.6 430.3,183.3 428.7,189.1"/><polygon points="434.6,172.1 436.0,166.2 437.7,160.4 436.4,160.1 435.2,166.0 433.7,171.8"/><polygon points="428.4,195.9 427.9,201.9 427.2,207.9 428.0,213.9 428.8,213.9 429.9,207.9 429.7,201.9 429.2,195.9"/><polygon points="428.0,219.9 428.0,225.9 428.3,231.9 428.4,237.9 428.2,243.9 428.6,249.9 429.4,255.9 430.0,261.9 429.7,267.9 430.3,273.9 431.0,279.9 431.0,285.9 430.9,291.9 432.6,297.8 431.8,303.9 432.0,309.9 432.7,315.9 433.3,321.8 433.5,327.8 434.5,333.8 434.6,339.8 435.7,345.7 437.4,350.1 438.2,350.0 439.0,345.4 439.7,339.3 438.1,333.5 437.4,327.5 436.7,321.5 437.1,315.5 436.0,309.6 436.2,303.5 435.1,297.6 434.4,291.6 433.8,285.7 433.6,279.7 432.4,273.7 431.5,267.8 431.9,261.8 432.0,255.7 431.6,249.8 431.1,243.8 430.2,237.8 430.1,231.8 429.4,225.9 428.8,219.9"/><polygon points="428.9,191.9 429.0,185.8 428.5,179.9 426.8,180.0 426.1,186.1 428.1,191.9"/><polygon points="427.8,173.9 428.0,167.9 426.6,162.0 425.8,162.0 425.6,168.1 426.7,174.0"/><polygon points="426.3,201.6 427.0,207.5 427.0,213.6 428.7,219.4 430.4,219.1 429.4,213.2 428.5,207.3 427.1,201.5"/><polygon points="431.5,231.2 431.5,237.3 430.8,243.6 433.6,249.1 434.9,255.0 435.6,261.0 437.7,266.7 438.9,272.6 439.6,278.6 439.7,284.7 441.8,290.4 443.6,296.1 444.4,302.1 446.1,307.9 447.8,313.7 447.7,319.9 450.3,325.4 452.1,331.2 451.8,337.4 454.4,343.0 458.0,348.2 460.0,350.3 462.8,349.5 464.2,346.6 462.5,340.9 461.6,334.9 460.0,329.1 459.9,323.0 458.2,317.2 455.6,311.7 452.8,306.2 452.8,300.0 451.9,294.1 449.3,288.6 446.8,283.0 445.9,277.1 444.3,271.3 442.6,265.5 442.0,259.5 438.5,254.2 438.7,248.0 437.3,242.2 435.6,236.4 432.2,231.0"/><polygon points="429.7,198.9 433.9,194.6 438.0,190.2 437.0,189.2 432.4,193.2 429.1,198.3"/><polygon points="441.9,185.6 446.9,182.0 450.0,176.7 449.4,176.2 444.8,180.1 441.0,184.7"/><polygon points="433.6,236.2 435.4,241.9 436.1,247.9 435.3,254.4 438.4,259.8 440.0,265.6 441.8,271.4 443.9,277.0 446.6,282.5 447.1,288.7 449.4,294.2 452.2,299.6 453.5,305.7 454.0,312.0 459.1,316.4 460.9,322.3 462.0,328.7 465.6,333.8 469.4,338.8 471.7,345.1 477.1,349.3 483.8,351.2 485.2,351.3 486.9,348.5 486.5,347.6 482.7,343.2 478.9,339.2 477.6,333.1 474.2,328.6 469.6,324.6 467.4,319.1 465.3,313.6 463.7,307.9 460.9,302.6 457.3,297.7 454.5,292.4 453.2,286.5 451.9,280.6 448.6,275.5 447.2,269.6 444.4,264.2 444.1,258.1 441.7,252.6 440.4,246.7 436.3,241.7 434.6,235.9"/><polygon points="433.6,236.2 435.4,241.9 436.8,247.8 438.0,253.7 440.0,259.3 441.8,265.0 442.8,271.0 444.7,276.8 447.1,282.3 448.6,288.1 450.7,293.8 452.6,299.5 455.1,305.0 456.2,311.1 459.6,316.2 462.1,321.7 464.7,327.2 467.4,332.7 471.4,337.4 474.7,342.7 478.5,347.7 484.5,350.3 485.7,350.5 486.5,349.2 485.8,348.6 481.2,344.8 478.0,339.9 474.6,335.2 471.5,330.3 468.5,325.1 465.6,320.0 462.7,314.8 461.4,308.8 458.0,303.8 455.0,298.6 453.3,292.8 451.2,287.2 450.2,281.2 448.3,275.6 444.7,270.4 443.7,264.5 442.4,258.6 441.1,252.7 438.5,247.3 436.2,241.7 434.6,235.9"/><polygon points="424.0,203.9 419.2,200.2 414.6,196.4 414.1,197.0 418.6,200.9 423.3,204.7"/><polygon points="410.0,192.5 406.3,187.6 401.0,184.6 400.2,185.6 404.0,190.4 409.5,193.2"/><polygon points="396.4,180.8 392.1,176.6 387.0,173.3 386.5,173.9 391.0,177.8 395.7,181.6"/><polygon points="382.4,169.4 378.1,165.2 373.4,161.5 372.5,162.6 376.7,166.9 381.8,170.2"/><polygon points="448.0,213.5 449.5,219.6 452.7,224.7 456.6,229.3 459.1,234.8 460.4,234.1 458.1,228.5 456.1,222.8 452.9,217.7 449.4,212.8"/><polygon points="461.8,240.2 463.6,246.1 467.1,251.0 468.9,256.8 470.2,262.9 473.6,267.9 477.1,272.8 479.5,278.4 481.5,284.1 485.7,288.6 486.7,294.9 489.6,300.2 493.7,304.8 496.4,310.2 497.8,316.2 501.6,321.0 505.2,325.9 506.8,331.8 510.0,336.9 513.9,341.6 517.4,346.6 521.5,350.8 523.4,349.8 523.4,343.3 522.4,337.0 519.9,331.5 516.3,326.6 512.2,322.1 509.9,316.4 507.1,311.2 504.4,305.8 501.0,300.8 497.4,296.0 495.4,290.2 493.4,284.5 489.3,279.9 484.8,275.5 482.0,270.1 480.0,264.4 477.4,259.0 473.8,254.1 469.6,249.6 467.0,244.2 463.9,239.0"/><polygon points="437.7,185.3 441.7,189.7 444.0,195.8 449.1,199.3 453.8,203.1 454.4,202.5 451.2,197.3 447.1,193.0 442.4,189.1 438.3,184.7"/><polygon points="462.3,211.5 466.4,215.9 470.1,220.7 473.8,225.5 478.5,229.3 482.3,234.0 486.5,238.2 490.8,242.4 494.6,247.1 498.9,251.3 503.0,255.6 507.4,259.7 510.7,264.9 515.8,268.3 519.3,273.3 523.7,277.4 528.1,281.5 532.1,286.0 536.1,290.5 540.1,295.0 545.2,298.3 549.3,302.7 553.5,307.0 558.3,310.7 562.7,314.7 566.0,320.1 571.5,322.9 576.2,326.7 580.1,331.4 584.5,335.6 590.1,338.1 594.4,342.6 599.8,345.4 605.0,348.5 611.1,349.9 610.9,350.2 611.5,348.8 611.7,348.5 606.6,345.4 601.9,341.9 597.4,338.2 591.7,336.0 586.8,332.7 581.8,329.3 578.3,324.2 573.9,320.1 569.3,316.4 563.9,313.4 559.7,309.2 555.2,305.2 551.6,300.2 546.7,296.7 542.4,292.5 537.6,288.9 534.2,283.9 529.6,279.9 524.9,276.2 520.6,272.0 517.3,266.8 512.6,263.1 508.8,258.4 504.7,254.0 499.8,250.5 496.1,245.6 492.0,241.3 487.9,236.9 483.9,232.5 479.5,228.4 475.5,223.9 471.9,219.0 467.1,215.3 462.9,211.0"/><polygon points="439.2,183.9 444.1,187.4 448.7,191.3 452.8,195.7 453.9,194.5 449.6,190.3 444.7,186.7 440.3,182.7"/><polygon points="457.3,199.7 462.0,203.4 466.5,207.4 467.3,206.5 462.6,202.8 458.1,198.8"/><polygon points="467.6,199.6 472.1,203.5 477.6,206.2 481.8,210.7 486.9,213.8 488.3,211.9 483.2,208.7 478.3,205.3 473.3,201.9 468.7,198.1"/><polygon points="491.8,217.2 496.9,220.5 500.8,225.3 504.9,229.8 510.5,232.3 515.7,235.4 519.7,240.1 524.0,244.4 530.4,245.8 534.6,250.2 538.9,254.4 544.6,256.8 548.9,261.1 553.0,265.6 558.6,268.2 563.2,272.0 567.3,276.5 572.3,279.9 577.3,283.1 581.3,287.9 586.2,291.2 590.8,295.1 595.0,299.5 599.1,303.9 605.1,306.0 609.2,310.4 613.3,314.8 618.5,317.9 623.7,321.1 627.3,326.1 632.2,329.6 636.8,333.3 641.4,337.1 645.2,341.8 649.3,346.0 654.5,349.2 656.9,351.0 658.6,349.4 657.0,346.9 654.9,340.5 650.4,336.4 646.7,331.4 641.6,328.0 636.8,324.3 631.9,320.7 627.7,316.4 623.7,311.8 618.5,308.6 612.7,306.2 608.3,302.1 604.4,297.3 599.9,293.4 594.6,290.4 589.2,287.5 585.2,282.8 581.4,278.0 575.8,275.3 570.4,272.5 565.8,268.7 561.1,264.9 557.3,259.9 551.9,257.1 545.9,255.2 541.1,251.5 537.3,246.7 532.7,242.7 527.2,240.1 522.3,236.6 517.3,233.2 513.1,228.8 507.9,225.7 503.3,221.9 497.7,219.4 492.6,216.1"/><polygon points="491.1,218.2 496.1,221.5 500.6,225.6 505.3,229.2 510.2,232.7 515.4,235.8 519.8,240.0 524.9,243.2 529.8,246.6 534.5,250.3 539.0,254.3 544.1,257.5 548.9,261.1 553.1,265.5 557.7,269.4 562.9,272.3 566.8,277.1 571.9,280.3 577.1,283.5 581.9,287.1 586.1,291.4 591.0,294.8 595.6,298.7 600.0,302.8 604.7,306.4 609.9,309.6 613.6,314.5 618.3,318.2 623.8,320.9 627.6,325.7 632.1,329.6 636.9,333.2 641.0,337.6 645.1,341.9 649.5,345.8 654.4,349.3 656.3,351.6 657.2,350.7 655.2,348.5 651.9,343.5 648.6,338.2 643.5,334.8 638.6,331.4 634.6,326.8 630.0,322.9 625.8,318.6 621.0,315.0 616.4,311.1 611.2,308.0 607.0,303.7 602.8,299.3 597.5,296.3 592.6,292.9 587.6,289.4 583.3,285.2 578.8,281.2 574.2,277.4 568.5,274.9 563.7,271.3 559.4,267.2 554.7,263.4 549.5,260.3 544.6,256.8 540.3,252.6 535.8,248.6 530.7,245.4 525.9,241.8 520.7,238.8 516.3,234.6 511.3,231.3 507.0,227.0 501.4,224.4 496.6,220.9 491.8,217.3"/><polygon points="447.8,179.3 452.4,183.3 457.8,186.0 458.8,184.4 454.2,180.2 448.2,178.7"/><polygon points="483.9,200.9 488.3,205.2 493.6,207.9 498.3,211.7 503.7,214.3 508.6,217.9 514.7,219.5 519.1,223.7 524.2,226.9 529.4,229.8 534.2,233.5 539.1,236.9 544.4,239.8 549.6,242.7 553.4,247.9 559.0,250.2 564.5,252.8 568.1,258.2 574.4,259.6 579.4,262.9 583.5,267.4 587.9,271.7 594.4,272.8 598.7,277.1 602.7,281.7 608.0,284.6 613.5,287.2 616.9,292.7 622.3,295.4 627.8,298.1 630.9,303.8 636.4,306.5 641.7,309.6 645.3,314.5 649.7,318.6 655.3,321.2 658.9,326.1 662.2,331.3 667.6,334.3 672.1,338.1 675.7,343.0 680.4,346.7 685.7,349.8 687.2,350.7 689.2,348.9 688.2,347.6 685.5,341.8 680.9,337.9 677.4,332.8 673.4,328.2 668.1,324.9 663.2,321.3 658.6,317.4 655.0,312.3 649.8,309.2 644.6,305.9 640.3,301.8 635.9,297.6 631.7,293.2 626.8,289.7 620.6,287.8 616.2,283.6 611.3,280.1 606.9,276.0 602.0,272.5 596.8,269.4 591.2,266.9 587.0,262.5 581.8,259.4 576.8,256.1 571.6,253.0 566.1,250.4 561.8,246.0 557.1,242.2 552.0,239.1 546.2,237.0 541.3,233.5 536.7,229.6 531.7,226.1 526.5,223.2 520.5,221.4 515.7,217.9 511.1,213.8 505.6,211.3 500.3,208.4 495.0,205.6 489.6,203.0 484.8,199.3"/><polygon points="452.8,177.4 458.3,179.8 463.3,183.2 469.1,185.0 469.8,183.5 464.6,180.6 458.6,179.1 453.2,176.6"/><polygon points="480.0,190.0 485.4,192.7 490.0,197.0 496.2,197.9 501.6,200.6 501.9,199.9 496.7,196.9 492.1,192.6 486.3,190.9 480.4,189.2"/><polygon points="506.8,203.6 511.8,206.9 517.1,209.7 522.5,212.2 527.9,214.9 532.5,219.0 538.0,221.5 543.5,223.9 548.4,227.3 553.8,230.0 558.8,233.3 563.4,237.2 568.9,239.7 574.3,242.4 579.3,245.8 583.4,250.4 589.3,252.3 594.3,255.6 598.3,260.3 604.1,262.5 608.7,266.4 613.7,269.8 618.3,273.6 623.3,276.8 628.0,280.6 632.5,284.6 637.1,288.4 642.2,291.6 646.3,296.0 650.9,299.8 655.9,303.2 660.4,307.1 664.3,311.8 670.0,314.4 673.4,319.5 677.8,323.6 682.4,327.4 686.8,331.4 691.2,335.5 695.3,339.9 699.8,343.8 704.4,347.6 708.4,350.5 709.1,349.9 706.5,345.6 702.9,340.7 698.3,336.8 693.7,332.9 689.0,329.2 685.0,324.6 681.2,319.9 676.4,316.1 671.4,312.8 666.7,309.1 663.0,304.1 658.7,299.9 653.4,296.8 648.3,293.6 643.5,289.9 639.6,285.2 634.7,281.7 629.9,278.1 624.4,275.4 620.3,270.8 615.1,267.8 610.4,264.0 605.5,260.5 599.9,258.1 595.7,253.6 590.6,250.4 585.3,247.4 580.3,244.2 575.2,241.0 569.9,238.2 565.4,234.0 560.1,231.2 554.4,229.0 549.2,226.0 544.1,222.8 539.3,219.1 534.2,216.0 528.4,214.0 523.1,211.2 518.2,207.6 512.7,205.1 507.1,202.9"/><polygon points="480.4,183.5 486.0,185.8 491.2,188.8 497.0,190.5 497.7,188.7 492.5,185.6 486.4,184.8 480.8,182.6"/><polygon points="508.2,194.9 513.6,197.3 518.3,201.4 523.5,204.4 528.9,207.0 534.2,209.8 539.0,213.4 544.8,215.3 550.0,218.2 555.0,221.5 560.8,223.4 565.5,227.2 570.1,231.1 576.0,233.0 580.9,236.4 585.0,241.0 590.1,244.1 595.8,246.4 600.1,250.6 604.9,254.2 610.6,256.5 614.6,261.2 619.1,265.2 624.3,268.2 629.1,271.7 632.9,276.5 637.9,279.8 643.1,282.8 647.4,287.1 651.4,291.6 656.6,294.7 662.0,297.4 664.7,303.5 670.8,305.6 675.3,309.5 679.1,314.2 683.6,318.2 687.9,322.3 692.3,326.3 696.5,330.5 700.6,335.0 704.8,339.2 709.0,343.4 713.5,347.4 719.5,349.8 722.7,351.3 725.3,348.7 723.6,345.7 720.7,340.0 717.5,334.7 712.4,331.3 707.7,327.4 703.6,323.0 699.0,319.1 695.0,314.5 690.5,310.6 686.3,306.1 680.8,303.2 676.1,299.5 672.3,294.6 667.5,291.0 662.4,287.6 657.3,284.4 652.8,280.4 649.1,275.3 644.3,271.7 638.6,269.2 632.9,266.7 629.1,261.7 624.2,258.1 619.6,254.3 613.5,252.3 609.0,248.3 604.2,244.6 599.4,241.0 594.4,237.6 588.8,235.1 583.9,231.6 578.8,228.5 573.7,225.3 569.0,221.4 562.8,220.0 557.4,217.3 553.1,212.7 547.7,209.8 541.9,208.0 536.6,205.1 530.6,203.6 525.6,200.2 520.6,196.6 514.6,195.3 508.5,194.1"/><polygon points="462.9,173.4 468.3,176.6 474.2,177.6 480.2,178.2 485.7,180.7 486.2,179.0 480.5,177.4 474.9,175.0 468.9,174.0 463.2,172.1"/><polygon points="496.9,185.1 502.4,187.3 508.1,189.2 513.6,191.4 519.1,193.9 524.6,196.2 530.2,198.3 535.1,202.0 540.8,203.9 546.0,206.7 551.2,209.7 556.9,211.7 562.0,214.8 567.1,218.0 572.2,221.1 577.5,223.7 583.0,226.2 587.6,230.1 593.4,232.1 598.2,235.7 603.0,239.4 608.0,242.6 613.2,245.6 617.9,249.3 622.7,252.8 628.0,255.7 632.3,259.9 637.3,263.2 642.2,266.7 647.4,269.7 651.9,273.6 656.4,277.6 661.5,280.7 665.8,285.0 670.6,288.6 675.7,291.7 679.6,296.4 683.9,300.5 689.4,303.3 693.3,308.0 697.5,312.3 702.0,316.1 707.1,319.4 711.1,323.9 715.9,327.6 720.4,331.5 724.5,335.9 728.2,340.6 733.5,343.8 737.9,347.8 742.4,351.8 743.8,351.3 744.3,350.7 744.4,349.7 741.0,344.6 736.5,340.6 732.2,336.4 727.2,333.0 722.8,328.9 718.8,324.3 714.4,320.3 710.3,315.8 704.9,312.8 701.0,308.3 696.1,304.7 692.1,300.1 687.3,296.6 681.9,293.6 677.3,289.8 673.5,285.0 668.7,281.3 663.7,277.9 658.5,274.8 653.8,271.1 649.4,267.0 645.0,262.9 639.1,260.7 633.9,257.7 629.9,253.0 625.2,249.2 620.0,246.1 614.4,243.8 609.7,239.9 604.8,236.5 599.5,233.6 594.3,230.6 589.3,227.4 584.1,224.4 578.7,221.7 574.3,217.4 568.6,215.2 563.1,212.7 557.5,210.6 552.7,206.7 547.2,204.4 541.9,201.5 535.9,200.1 530.6,197.3 525.6,193.8 520.1,191.4 514.1,190.3 508.4,188.4 502.8,186.2 497.1,184.3"/><polygon points="467.9,171.4 473.7,173.0 479.5,174.4 485.5,175.1 485.7,174.4 479.9,172.7 474.3,170.2 468.1,170.6"/><polygon points="497.1,178.1 502.4,181.2 508.4,182.2 514.2,183.7 519.8,185.8 520.2,184.7 514.5,182.8 509.1,180.2 503.4,178.1 497.5,176.8"/><polygon points="508.3,175.9 513.9,178.2 519.1,181.6 525.0,182.6 531.0,183.6 536.3,186.3 541.7,189.0 547.7,190.1 553.3,192.1 558.2,195.9 564.5,196.3 569.1,200.6 574.9,202.4 580.1,205.4 585.5,207.9 590.2,211.8 596.0,213.5 602.2,214.8 606.3,219.6 611.5,222.6 617.5,224.2 621.7,228.7 626.9,231.7 632.4,234.2 637.8,236.8 641.6,242.0 647.9,243.3 652.6,247.0 657.4,250.6 662.0,254.4 668.2,256.0 672.3,260.5 676.2,265.5 682.7,266.6 687.0,270.9 690.8,275.8 696.7,277.8 701.5,281.5 705.6,286.0 710.1,289.9 716.1,291.9 719.7,297.1 725.0,300.0 730.5,302.7 734.7,307.0 738.5,311.8 744.0,314.6 748.0,319.1 751.8,323.9 757.0,327.0 761.9,330.5 766.7,334.1 771.1,338.2 775.9,341.8 779.8,346.4 785.0,349.5 790.7,350.3 791.6,349.4 789.5,344.4 785.9,339.3 780.8,336.0 776.6,331.7 772.0,327.7 767.8,323.5 762.9,319.9 757.6,316.9 752.4,313.8 748.9,308.4 744.0,305.0 738.5,302.3 734.1,298.1 729.5,294.3 724.8,290.4 720.3,286.5 715.4,282.9 709.8,280.4 705.0,276.8 701.0,272.0 696.3,268.2 690.7,265.7 685.1,263.2 681.0,258.6 676.1,255.1 671.4,251.2 666.0,248.5 659.9,246.8 655.8,242.1 651.1,238.3 646.1,234.9 640.3,232.8 635.0,229.9 629.9,226.7 625.6,222.1 620.1,219.6 614.5,217.3 609.2,214.3 604.3,210.8 598.4,209.1 593.5,205.3 587.5,203.8 582.1,201.3 576.8,198.3 571.3,195.8 565.5,194.1 559.5,192.7 554.3,189.7 549.4,185.7 543.9,183.1 537.4,183.4 532.0,180.6 526.4,178.3 520.6,176.5 514.6,175.5 508.5,175.1"/><polygon points="508.3,175.8 514.1,177.5 519.4,180.5 525.4,181.2 531.2,182.9 536.6,185.7 542.5,186.8 548.1,189.1 553.4,192.0 559.0,194.0 564.8,195.7 570.0,198.6 575.1,201.9 580.6,204.2 586.5,205.9 591.1,210.0 596.6,212.5 602.1,214.9 607.1,218.2 612.4,221.0 618.0,223.3 622.7,227.1 627.8,230.1 633.1,233.0 638.2,236.1 643.0,239.8 648.4,242.4 653.4,245.8 658.4,249.1 662.9,253.1 668.8,255.1 673.1,259.4 677.6,263.4 682.9,266.4 687.7,269.9 692.5,273.5 697.1,277.3 702.8,279.7 706.8,284.4 711.8,287.7 716.8,291.0 721.6,294.6 725.6,299.2 731.2,301.8 735.4,306.2 739.7,310.3 744.7,313.7 749.4,317.3 753.7,321.6 758.5,325.2 763.3,328.8 768.1,332.4 772.1,336.9 777.3,340.1 781.1,344.9 786.3,348.0 790.8,350.2 791.4,349.6 788.8,345.1 784.3,341.2 779.3,337.7 775.1,333.5 770.2,329.9 766.4,325.1 761.4,321.8 756.0,318.8 751.8,314.5 747.5,310.3 742.6,306.7 737.6,303.4 733.1,299.4 728.4,295.6 723.9,291.7 719.4,287.6 714.2,284.5 708.7,281.8 704.0,278.2 700.1,273.2 694.7,270.4 689.4,267.6 684.2,264.5 679.8,260.3 675.2,256.3 670.5,252.7 664.8,250.3 659.4,247.6 655.3,242.8 650.2,239.7 645.2,236.4 639.2,234.5 634.3,231.1 629.8,226.8 624.1,224.6 619.3,220.9 613.7,218.8 608.3,216.1 603.1,213.1 598.1,209.6 592.6,207.1 586.9,205.0 581.5,202.5 576.3,199.4 571.1,196.4 565.4,194.4 559.6,192.6 554.1,190.3 548.7,187.4 543.1,185.3 537.3,183.5 531.5,181.9 526.2,178.9 520.5,176.7 514.3,176.6 508.5,175.0"/><polygon points="477.9,167.9 484.0,167.8 489.9,168.7 495.8,169.5 496.0,167.8 490.0,167.3 484.0,167.0 478.0,166.6"/><polygon points="519.6,172.6 525.4,173.8 531.0,176.4 536.9,177.4 542.9,178.1 548.3,181.2 553.9,183.3 560.1,183.5 565.4,186.2 570.8,188.9 576.9,189.6 582.2,192.6 587.1,196.4 593.6,196.3 599.3,198.2 604.1,202.2 609.3,205.0 615.2,206.5 620.3,209.7 625.8,212.2 631.2,214.7 637.0,216.5 641.3,221.1 646.8,223.5 652.5,225.6 657.3,229.2 662.7,231.8 668.0,234.7 673.0,237.9 677.3,242.4 683.1,244.3 688.2,247.5 692.3,252.1 698.3,253.8 703.2,257.2 707.2,262.0 712.4,265.0 718.1,267.2 722.5,271.4 727.1,275.3 732.7,277.7 737.7,281.0 741.8,285.5 747.1,288.4 751.6,292.4 755.7,296.8 760.2,300.9 765.6,303.6 770.5,307.1 774.0,312.3 780.1,314.2 784.0,318.9 787.7,323.8 793.8,325.9 799.1,328.8 801.8,330.4 804.0,327.8 801.9,325.5 798.8,319.7 793.6,316.7 789.1,312.6 784.5,308.7 779.9,304.8 775.0,301.3 770.2,297.8 766.6,292.5 761.2,289.7 755.4,287.4 750.6,283.7 745.9,280.0 742.0,275.1 737.0,271.7 731.2,269.4 726.3,266.0 721.3,262.6 716.6,258.8 711.5,255.6 705.8,253.3 701.6,248.8 696.7,245.3 691.4,242.4 686.2,239.2 680.6,236.8 675.8,233.1 670.4,230.5 665.6,226.7 659.7,225.1 654.4,222.1 649.6,218.3 644.3,215.6 639.2,212.2 633.4,210.4 627.8,208.0 622.4,205.3 617.6,201.5 612.0,199.2 605.6,198.8 600.0,196.5 594.8,193.4 589.9,189.4 583.8,188.3 578.2,186.2 572.2,185.0 566.9,181.8 561.3,179.6 555.3,178.5 549.4,177.2 543.4,176.2 537.7,174.2 531.8,172.9 525.9,171.7 519.7,171.8"/><polygon points="483.0,164.4 488.9,166.1 495.0,164.7 495.0,163.9 489.0,163.2 483.0,162.9"/><polygon points="506.9,166.2 512.7,167.5 518.7,167.7 524.7,168.4 530.5,169.8 530.9,167.8 525.0,166.2 518.9,166.4 513.0,165.5 507.0,164.8"/><polygon points="536.6,170.0 542.5,171.2 548.2,173.1 554.0,174.5 559.6,176.7 565.6,177.4 571.1,179.9 576.7,182.1 582.7,183.1 588.0,186.2 593.4,188.7 599.5,189.7 604.9,192.2 610.4,194.7 616.1,196.6 621.6,198.9 626.6,202.4 631.8,205.4 637.9,206.7 642.9,210.1 648.2,212.9 653.8,215.1 658.8,218.5 663.8,221.7 669.2,224.3 675.0,226.4 679.5,230.6 684.5,233.8 690.5,235.5 695.1,239.5 700.4,242.3 705.4,245.6 710.8,248.3 715.1,252.7 720.7,255.0 725.5,258.6 730.0,262.7 735.5,265.3 740.8,268.2 745.3,272.3 749.8,276.2 755.0,279.3 759.4,283.4 764.0,287.3 769.9,289.3 774.2,293.6 778.7,297.6 783.7,300.9 788.5,304.5 793.3,308.1 798.3,311.4 803.1,313.9 803.7,313.1 799.6,309.8 795.2,305.6 791.1,301.2 786.2,297.7 781.4,294.1 775.7,291.6 771.2,287.6 767.0,283.1 762.2,279.5 757.1,276.3 751.9,273.2 746.9,269.8 742.2,266.1 737.1,263.0 731.6,260.3 726.6,257.0 721.8,253.4 717.1,249.6 712.1,246.2 706.3,244.2 701.7,240.3 696.5,237.2 691.7,233.5 686.1,231.2 680.6,228.7 675.6,225.2 670.8,221.5 665.3,219.1 659.9,216.4 654.5,213.8 649.0,211.3 643.8,208.3 638.8,204.8 633.1,202.7 627.7,200.1 622.0,198.0 616.7,195.2 611.5,192.0 605.9,189.9 600.0,188.2 594.3,186.5 589.0,183.3 583.1,182.0 577.4,180.1 571.6,178.4 565.9,176.5 560.5,173.6 554.5,172.4 548.5,171.8 542.6,170.4 536.8,169.1"/><polygon points="519.9,161.2 525.8,162.6 531.5,164.5 537.5,164.7 543.4,166.0 549.0,167.9 555.4,167.1 561.0,169.4 566.6,171.5 572.4,172.9 578.0,174.8 583.3,177.9 589.3,178.7 595.2,180.1 600.1,183.8 605.8,185.6 611.5,187.4 616.8,190.2 622.2,193.0 628.4,193.6 633.5,196.8 638.2,200.8 644.6,201.3 649.9,204.2 654.9,207.4 660.2,210.2 666.1,211.9 670.4,216.5 676.1,218.6 682.0,220.1 686.6,224.2 691.0,228.5 697.4,229.4 702.3,233.0 706.6,237.4 712.2,239.6 717.8,242.0 721.9,246.7 726.6,250.4 732.3,252.6 737.5,255.5 742.2,259.3 747.2,262.6 752.0,266.1 756.3,270.4 762.4,272.1 767.5,275.3 771.9,279.5 776.2,283.6 782.6,285.1 786.0,290.6 790.4,294.6 797.4,295.2 802.6,296.6 803.9,294.7 800.5,290.9 796.5,286.1 791.8,282.4 787.7,277.7 782.1,275.3 776.6,272.7 772.1,268.5 767.2,265.0 762.0,262.0 757.4,258.0 751.3,256.4 745.9,253.6 741.7,249.1 736.7,245.6 731.6,242.5 726.2,239.8 720.7,237.1 716.1,233.1 710.9,230.2 705.3,227.7 699.4,225.8 695.2,221.1 689.9,218.3 685.1,214.5 678.7,213.6 673.2,211.2 668.4,207.4 663.2,204.3 657.9,201.5 651.9,200.0 646.4,197.6 641.6,193.7 635.9,191.6 630.2,189.4 624.7,187.0 618.8,185.5 613.6,182.3 607.9,180.4 602.7,177.1 596.2,177.1 590.4,175.7 584.9,173.1 579.3,170.9 573.7,168.2 567.2,169.2 561.9,165.8 556.1,163.9 550.1,163.2 543.9,163.0 537.9,162.7 532.2,160.0 526.1,159.7 520.1,159.8"/><polygon points="498.0,155.4 504.0,155.0 510.0,155.9 516.0,155.0 522.0,154.9 522.0,154.1 516.0,152.5 509.9,152.8 504.0,154.2 498.0,154.6"/><polygon points="533.9,155.3 539.9,155.9 545.8,156.9 551.7,158.1 557.7,158.6 563.3,161.1 569.3,161.6 575.3,162.5 581.0,164.4 586.7,166.2 592.7,167.1 598.1,170.0 603.6,172.2 609.4,173.7 615.4,174.7 620.5,178.2 626.5,179.3 632.1,181.4 637.6,183.9 642.8,187.0 648.6,188.5 654.3,190.5 659.2,194.3 665.1,195.7 670.6,198.1 675.5,201.8 680.7,204.7 686.5,206.5 691.4,210.1 697.1,212.1 702.2,215.2 707.5,218.1 712.6,221.3 718.0,223.9 723.0,227.2 727.8,230.8 733.9,232.3 738.7,236.0 743.5,239.5 748.9,242.2 754.2,245.0 758.8,249.1 764.1,251.9 769.4,254.7 774.4,257.9 778.9,262.0 784.1,265.0 789.4,267.9 793.7,272.2 799.5,274.3 803.0,275.0 803.7,274.0 801.3,271.6 796.3,268.4 791.7,264.5 787.1,260.5 781.5,258.0 776.4,254.8 771.2,251.8 766.1,248.6 761.6,244.5 756.6,241.1 750.7,239.2 745.6,236.1 740.3,233.2 735.9,228.9 730.4,226.3 725.0,223.7 719.7,220.9 714.6,217.5 709.6,214.2 703.9,212.2 698.6,209.3 693.1,206.9 687.7,204.1 682.6,201.0 676.9,198.9 671.6,195.9 666.1,193.6 660.5,191.3 655.3,188.3 649.9,185.5 643.9,184.3 638.4,181.9 633.0,179.1 627.5,176.7 621.6,175.2 615.8,173.7 610.1,171.7 604.8,168.5 599.2,166.4 593.1,165.7 587.1,164.6 581.4,162.6 575.7,160.7 569.8,159.5 563.8,158.9 557.9,157.8 552.0,156.7 546.2,154.3 540.1,154.5 534.0,154.5"/><polygon points="513.1,150.0 519.0,149.3 525.0,148.8 531.0,150.1 537.0,149.2 537.0,147.7 531.0,147.3 525.0,147.4 519.0,148.2 513.0,148.6"/><polygon points="548.8,150.3 554.9,150.5 560.6,152.9 566.2,155.2 572.6,153.6 578.4,154.8 583.7,158.6 590.0,157.7 595.6,160.2 601.2,162.2 607.0,163.7 612.7,165.3 618.2,167.7 623.8,169.9 629.7,171.0 635.3,173.3 640.1,177.3 646.5,177.5 652.0,179.7 656.8,183.8 662.8,184.9 668.2,187.4 673.2,191.0 678.6,193.3 685.0,193.9 689.7,198.0 694.9,201.0 700.7,202.7 705.7,206.1 711.0,208.8 716.0,212.1 721.6,214.3 726.0,218.8 731.3,221.6 737.3,223.0 742.4,226.2 746.5,231.0 752.6,232.5 757.4,236.1 762.0,240.1 767.8,242.0 773.2,244.6 778.1,248.1 783.1,251.4 788.3,254.4 793.1,258.0 798.2,261.1 802.8,260.3 803.7,258.9 801.9,255.4 796.5,252.7 791.8,248.8 786.6,245.8 782.0,241.8 777.3,237.9 771.5,235.9 765.7,233.9 760.7,230.5 756.4,226.0 751.2,223.0 745.3,221.1 739.9,218.4 734.9,215.0 730.4,210.8 724.3,209.3 718.4,207.6 713.2,204.6 708.3,201.0 703.5,197.2 697.8,195.0 691.5,194.3 686.3,191.1 681.5,187.2 675.7,185.4 670.2,183.0 664.1,181.9 659.3,177.9 653.9,175.2 648.4,172.6 642.3,171.7 636.8,169.1 631.3,166.7 625.4,165.3 620.2,162.0 614.0,161.2 608.2,159.7 602.2,158.6 596.5,156.6 590.8,154.5 584.6,154.7 578.8,152.9 573.0,151.3 567.4,148.5 561.1,149.4 555.0,149.7 549.0,149.0"/><polygon points="643.0,171.0 647.9,174.6 652.8,178.1 658.7,179.7 663.9,182.9 668.8,186.5 675.2,187.0 680.5,189.9 685.6,193.2 690.4,197.0 696.6,198.0 701.6,201.3 707.1,203.9 712.6,206.2 718.1,208.6 722.7,212.8 729.0,213.5 733.9,217.2 738.3,221.8 744.9,222.1 749.7,225.9 754.4,229.8 760.6,230.9 766.7,232.1 771.6,235.7 776.3,239.7 781.9,241.9 787.9,243.4 791.6,249.4 797.6,250.9 803.9,251.7 804.5,251.9 805.6,249.8 805.5,248.3 800.7,244.5 794.6,243.5 788.9,241.3 784.6,236.5 778.9,234.6 773.1,232.6 767.7,230.1 762.5,227.1 757.7,223.2 752.5,220.2 746.2,219.5 740.2,218.1 735.8,213.4 730.8,210.0 725.0,208.1 719.1,206.5 713.9,203.5 708.8,200.3 704.0,196.5 697.9,195.2 692.2,193.2 686.4,191.6 681.1,188.6 676.6,184.3 670.6,182.9 665.2,180.2 659.9,177.4 654.7,174.3 649.4,171.6 643.3,170.3"/><polygon points="638.7,179.7 643.4,183.7 649.4,185.0 654.2,188.9 659.9,190.9 665.6,193.0 671.0,195.6 675.7,199.5 681.0,202.5 687.1,203.6 691.7,207.8 696.6,211.4 702.6,212.8 708.5,214.5 712.9,219.2 718.8,220.7 724.2,223.3 728.8,227.5 734.7,229.2 740.4,231.1 745.0,235.5 750.7,237.4 756.8,238.7 761.3,243.1 766.2,246.7 772.3,247.9 777.4,251.2 782.0,255.3 788.0,256.7 793.7,258.8 799.0,261.5 800.3,260.4 801.0,259.0 800.8,257.9 796.5,253.1 790.5,251.7 784.9,249.5 779.5,246.9 774.8,242.7 769.2,240.6 763.5,238.6 758.3,235.7 752.8,233.2 747.1,231.1 742.3,227.3 736.8,224.9 731.2,222.7 725.1,221.4 720.2,217.9 715.0,214.9 709.0,213.4 703.7,210.7 698.4,207.8 693.6,204.0 688.0,201.7 682.1,200.2 677.0,196.9 671.3,194.9 666.6,190.9 660.8,189.1 655.8,185.7 649.8,184.3 644.4,181.6 639.3,178.3"/><polygon points="640.2,176.6 645.2,180.1 650.6,182.7 656.4,184.5 661.0,188.7 666.9,190.3 672.4,192.7 677.2,196.6 682.3,199.8 688.5,200.9 693.1,204.9 698.4,207.8 704.4,209.3 709.5,212.5 714.5,215.8 720.4,217.5 725.5,220.7 730.9,223.4 735.7,227.1 741.4,229.1 746.6,232.2 751.7,235.3 757.4,237.3 762.8,240.0 767.7,243.6 773.4,245.6 778.7,248.5 784.2,250.8 789.2,254.3 794.7,256.7 800.6,258.4 801.8,257.4 802.6,255.8 802.8,253.8 798.4,249.3 792.6,247.4 786.8,245.6 781.5,242.8 776.7,239.0 771.2,236.5 765.5,234.7 759.8,232.6 754.9,229.0 749.5,226.4 744.1,223.6 738.5,221.4 732.5,220.2 727.3,217.0 722.0,214.2 717.0,210.7 710.9,209.6 705.8,206.4 700.7,203.1 695.2,200.7 689.9,198.0 683.9,196.5 678.6,193.7 673.3,190.8 667.9,188.2 662.2,186.2 657.0,183.2 651.4,181.0 646.0,178.5 640.7,175.5"/><polygon points="670.1,142.2 675.3,145.1 680.8,147.8 685.6,151.4 690.5,154.9 696.4,156.7 701.5,160.0 706.3,163.7 711.1,167.3 716.5,170.0 721.3,173.6 726.9,176.0 731.9,179.3 737.3,182.0 741.8,186.3 748.2,187.1 753.1,190.6 757.7,194.7 763.0,197.5 768.3,200.3 772.1,205.6 778.4,206.8 783.7,209.6 787.8,214.5 792.5,218.4 799.0,219.2 804.3,222.1 804.7,222.2 805.8,220.3 805.5,220.0 801.8,214.4 796.3,212.0 791.9,207.7 785.2,207.1 780.4,203.5 775.0,200.7 770.8,196.1 764.9,194.3 759.6,191.6 754.8,187.9 749.1,185.6 744.9,181.0 738.8,179.5 733.1,177.3 728.0,174.2 724.2,168.8 718.6,166.5 713.4,163.4 707.8,161.1 702.3,158.7 698.1,153.9 692.1,152.2 687.1,148.8 681.2,147.1 676.1,143.8 671.0,140.6"/><polygon points="665.4,150.8 670.6,153.7 675.5,157.2 680.6,160.2 686.0,162.8 690.6,166.8 696.2,169.1 701.7,171.5 705.7,176.6 711.4,178.7 717.1,180.8 721.9,184.6 726.6,188.3 732.8,189.7 737.1,194.2 742.3,197.2 747.7,199.8 753.4,202.0 757.2,207.4 762.6,209.9 768.0,212.6 773.3,215.4 778.2,219.0 783.3,222.1 788.4,225.3 793.3,228.7 799.5,230.0 800.2,229.7 800.8,228.8 801.3,227.1 796.2,223.8 790.9,221.1 786.1,217.4 780.9,214.3 775.6,211.5 770.7,208.1 764.7,206.4 759.2,203.9 754.7,199.8 750.5,195.1 744.1,194.2 739.0,191.0 734.0,187.7 728.7,184.9 723.9,181.1 717.9,179.6 712.5,176.9 708.1,172.6 702.8,169.7 698.4,165.3 691.8,164.8 686.6,161.8 681.5,158.6 677.5,153.7 671.4,152.2 665.8,150.1"/><polygon points="667.8,146.4 672.4,150.4 677.0,154.5 682.8,156.3 688.1,159.1 692.1,164.2 698.4,165.3 703.5,168.4 707.9,172.9 712.8,176.3 718.6,178.3 722.7,183.2 727.7,186.4 733.7,188.1 737.9,192.8 743.3,195.4 748.1,199.1 753.3,202.1 758.3,205.4 763.6,208.4 768.3,212.1 773.3,215.4 778.0,219.2 784.4,220.3 788.2,225.6 792.9,229.3 800.3,228.7 802.3,226.1 803.6,223.9 805.1,220.6 801.6,214.8 796.4,211.8 790.2,210.4 785.7,206.3 780.9,202.7 775.1,200.7 769.9,197.6 764.4,195.1 759.1,192.3 754.4,188.5 748.7,186.3 742.5,185.0 737.3,182.1 732.5,178.4 727.8,174.5 722.4,171.8 716.8,169.6 710.8,167.8 705.7,164.7 701.0,160.8 695.7,158.0 689.9,156.0 684.8,152.9 679.9,149.3 674.1,147.3 668.2,145.6"/><polygon points="680.4,148.8 685.6,152.0 690.2,156.0 694.9,160.0 701.1,161.5 705.9,165.2 709.6,170.5 716.2,171.4 720.4,175.9 724.9,179.9 730.1,183.0 735.0,186.4 740.2,189.5 745.3,192.8 750.3,196.0 755.1,199.6 758.9,204.7 764.7,206.9 769.2,210.9 774.3,214.2 779.4,217.2 784.8,220.0 788.0,226.0 794.3,227.4 799.1,231.0 804.1,234.4 805.5,233.4 806.8,231.6 806.3,231.1 802.3,226.4 796.9,223.7 792.9,218.9 787.6,216.0 782.0,213.6 777.1,210.0 772.6,206.1 767.3,203.1 762.7,199.2 756.7,197.3 751.4,194.4 747.9,188.8 743.2,185.1 737.4,182.9 731.6,180.8 727.3,176.5 723.0,172.0 717.2,169.9 712.9,165.5 706.6,164.1 701.5,160.8 696.7,157.1 692.8,151.9 686.3,150.8 680.8,148.1"/><polygon points="674.8,158.5 679.9,161.6 685.2,164.1 689.1,169.0 694.8,171.2 699.8,174.5 705.1,177.3 709.6,181.3 714.7,184.4 719.9,187.5 724.3,191.6 728.7,195.7 734.8,197.5 739.0,201.9 744.0,205.2 749.8,207.4 753.6,212.4 757.9,216.7 763.9,218.5 769.2,221.5 772.9,226.7 777.7,230.2 783.1,233.0 788.1,236.2 792.4,240.6 798.9,241.7 799.7,241.8 800.2,241.0 800.3,239.8 796.1,235.2 791.8,230.9 786.7,227.7 780.6,226.1 776.6,221.4 771.2,218.5 766.9,214.2 761.1,212.1 756.5,208.2 752.1,204.1 746.4,201.7 741.8,197.8 736.4,195.1 730.8,192.7 726.7,188.0 721.5,185.1 717.1,180.8 711.6,178.2 705.8,176.2 701.7,171.6 697.0,167.8 691.0,166.0 685.9,163.0 680.7,160.1 675.7,157.0"/><polygon points="677.8,153.3 683.0,156.3 686.6,161.8 691.8,164.8 697.3,167.4 701.5,171.8 706.7,174.8 712.5,177.0 717.1,180.8 721.1,185.5 726.6,188.2 731.1,192.2 735.4,196.5 740.9,199.1 745.3,203.3 749.6,207.7 754.1,211.7 759.9,213.8 765.1,216.8 768.3,222.7 774.3,224.6 779.6,227.5 783.2,232.8 788.0,236.4 793.1,239.6 799.8,240.5 801.8,238.8 804.4,235.0 804.9,233.1 801.3,227.8 797.4,222.9 792.9,218.9 787.5,216.1 781.4,214.4 776.7,210.6 771.3,207.9 767.2,203.2 761.6,200.7 756.1,198.2 750.3,196.1 746.1,191.6 741.7,187.3 735.3,186.0 730.3,182.7 725.5,179.1 720.3,176.0 716.1,171.6 709.8,170.2 704.5,167.3 699.3,164.2 694.9,160.0 689.3,157.5 683.5,155.5 678.2,152.7"/><polygon points="678.5,152.1 683.7,155.1 688.2,159.2 693.3,162.5 698.6,165.3 703.1,169.4 708.0,172.8 713.6,175.3 718.6,178.6 722.6,183.3 727.6,186.7 733.3,189.0 737.9,193.0 742.5,196.8 748.0,199.3 752.7,203.2 756.9,207.6 761.9,210.9 766.9,214.2 771.8,217.7 777.0,220.8 781.6,224.6 786.0,228.8 791.4,231.6 796.4,234.8 802.0,237.4 803.0,237.0 804.4,235.0 804.5,233.7 800.5,229.0 795.4,225.8 791.2,221.3 785.4,219.2 780.1,216.3 775.3,212.6 770.9,208.4 765.5,205.7 760.2,202.8 755.1,199.7 750.7,195.5 745.5,192.4 740.6,188.9 735.7,185.5 729.9,183.3 725.0,179.9 720.7,175.5 715.1,173.1 709.9,169.9 704.5,167.3 700.2,162.9 694.9,160.0 689.5,157.2 684.1,154.5 678.9,151.5"/><polygon points="723.6,117.4 728.0,121.8 734.0,123.4 738.4,127.8 743.9,130.2 749.6,132.4 754.9,135.3 759.1,140.0 764.1,143.3 770.2,144.8 774.4,149.5 779.0,153.5 784.9,155.4 790.6,157.5 794.6,162.4 801.1,163.2 805.6,164.4 806.0,163.7 802.8,160.2 798.2,156.3 792.3,154.4 787.1,151.5 782.0,148.4 777.3,144.3 771.9,141.8 765.9,140.2 761.1,136.4 755.5,134.2 751.0,130.0 745.3,127.9 740.5,124.2 734.4,122.7 729.2,119.7 724.4,116.1"/><polygon points="718.0,127.3 723.2,130.2 727.4,135.0 732.9,137.5 738.1,140.4 743.5,143.0 748.9,145.7 754.4,148.1 758.7,152.8 763.1,157.1 769.0,159.0 774.2,161.9 778.6,166.4 784.2,168.5 790.4,169.8 795.0,173.8 799.9,174.5 801.0,172.5 797.3,169.9 792.1,167.0 787.2,163.4 781.9,160.5 777.3,156.5 770.9,155.6 766.1,151.9 761.0,148.7 756.2,145.1 750.3,143.3 744.9,140.7 739.5,138.0 735.0,133.7 730.2,130.1 723.8,129.2 718.4,126.6"/><polygon points="745.8,100.9 751.3,103.3 756.4,106.6 761.8,109.1 767.5,111.2 772.5,114.8 778.2,116.6 784.1,118.2 788.5,123.2 794.3,124.7 800.6,125.3 804.8,127.0 805.6,125.2 801.3,123.8 795.6,121.9 791.0,117.5 785.3,115.4 780.4,111.6 773.8,111.8 768.1,109.9 762.8,106.9 758.2,102.5 752.0,101.7 746.1,100.2"/><polygon points="741.9,109.8 747.1,112.9 752.8,114.7 758.3,117.1 763.1,121.2 768.6,123.6 774.1,125.9 779.2,129.2 785.0,130.9 790.8,132.6 796.2,135.3 800.3,137.1 801.3,134.8 798.1,131.1 792.6,128.7 786.1,128.4 780.9,125.4 776.2,121.3 770.6,119.1 765.2,116.5 758.7,116.3 753.2,113.9 748.3,110.2 742.5,108.4"/><polygon points="743.8,105.4 748.9,108.8 754.5,110.9 759.4,114.7 764.1,118.9 770.0,120.4 775.3,123.3 780.2,126.9 785.5,129.9 791.5,131.0 797.2,133.2 802.1,133.0 803.5,129.8 800.9,124.7 795.9,121.0 789.9,119.8 784.0,118.3 778.4,116.1 773.7,111.9 767.4,111.4 761.6,109.7 755.7,108.1 749.8,106.6 744.5,103.9"/><polygon points="743.9,105.3 749.0,108.6 754.6,110.6 760.0,113.4 764.9,117.0 770.8,118.6 776.3,121.0 781.3,124.5 786.5,127.7 792.2,129.5 798.0,131.4 802.5,132.1 803.3,130.2 800.1,126.5 794.8,123.6 788.7,122.5 783.4,119.6 778.1,117.0 772.2,115.3 767.1,112.2 760.9,111.2 755.2,109.4 750.0,106.2 744.3,104.3"/></g>
<g fill="none" stroke="#38e038" stroke-width="1.2" stroke-linejoin="round"><polygon points="412.5,185.8 406.4,186.2 400.7,188.2 394.9,189.9 389.1,191.4 389.6,193.1 395.2,191.0 401.0,189.5 406.9,188.2 412.8,187.3"/><polygon points="334.7,216.9 329.6,220.1 324.3,222.9 325.2,224.3 330.3,221.2 335.1,217.6"/><polygon points="295.0,244.0 290.4,247.9 285.0,250.9 281.4,256.0 276.5,259.6 271.8,263.4 268.3,268.4 263.8,272.5 259.3,276.5 255.3,281.0 252.0,286.2 247.3,290.0 243.8,295.0 240.1,299.7 236.3,304.4 231.9,308.6 228.3,313.5 224.6,318.2 221.0,323.1 217.7,328.2 214.9,333.5 210.6,337.9 207.6,343.1 205.0,348.6 204.7,349.2 205.4,349.6 205.8,349.1 210.2,344.8 213.5,339.8 217.1,335.1 220.4,330.0 222.9,324.4 226.9,319.9 230.6,315.2 234.3,310.5 238.0,305.8 241.6,301.0 245.2,296.2 250.0,292.4 253.6,287.5 256.6,282.2 261.0,278.1 265.3,273.9 269.7,269.8 273.8,265.4 278.1,261.2 281.9,256.6 287.1,253.3 291.4,249.1 295.5,244.6"/><polygon points="382.2,187.5 376.1,188.7 371.4,192.8 371.8,193.5 377.4,191.4 382.8,188.8"/><polygon points="322.6,227.7 318.4,232.1 314.3,236.5 315.1,237.2 319.3,233.0 323.6,228.8"/><polygon points="379.3,201.1 373.8,203.6 368.8,207.0 364.2,210.9 364.6,211.6 370.1,208.9 375.7,206.6 379.9,202.1"/><polygon points="336.4,233.8 332.0,237.9 327.8,242.2 323.4,246.3 318.8,250.2 314.9,254.8 311.0,259.3 306.6,263.5 303.2,268.5 299.6,273.3 295.5,277.8 291.7,282.4 289.1,288.0 284.6,292.1 280.8,296.9 278.7,302.7 275.3,307.6 270.6,311.7 268.2,317.3 265.1,322.5 261.5,327.3 258.0,332.2 256.0,338.0 252.1,342.7 249.8,348.4 249.9,349.9 250.6,350.3 252.4,349.8 255.7,344.8 258.3,339.4 260.8,333.9 264.1,328.9 268.1,324.3 271.1,319.2 273.7,313.7 276.1,308.1 280.5,303.9 284.1,299.1 286.5,293.5 290.1,288.7 293.5,283.7 297.2,279.0 301.3,274.7 305.3,270.3 308.3,265.0 312.1,260.3 316.4,256.1 320.3,251.6 324.7,247.6 328.4,242.7 332.6,238.5 337.2,234.6"/><polygon points="406.2,186.3 400.7,188.7 395.4,191.7 395.7,192.4 401.2,189.8 406.7,187.7"/><polygon points="340.5,237.8 335.5,241.5 330.6,245.3 329.2,251.8 324.9,256.1 320.1,260.1 317.2,265.4 313.7,270.3 310.0,275.1 306.1,279.7 304.9,286.1 299.7,290.0 297.2,295.5 294.9,301.2 291.7,306.2 287.4,310.7 285.8,316.7 282.6,321.8 278.9,326.7 275.2,331.5 273.1,337.2 270.5,342.7 268.0,348.1 269.6,349.8 270.4,350.2 271.6,350.0 276.4,345.7 279.2,340.4 281.8,335.0 283.4,329.1 286.7,324.1 291.1,319.7 293.9,314.4 295.3,308.3 298.6,303.4 302.1,298.5 305.4,293.5 308.0,288.1 310.3,282.4 314.3,277.9 318.6,273.6 321.6,268.5 324.4,263.2 327.5,258.0 331.1,253.3 335.9,249.4 338.9,244.2 341.2,238.4"/><polygon points="380.1,206.2 375.8,210.4 371.9,215.0 367.6,219.2 368.4,220.0 372.4,215.6 376.7,211.4 381.3,207.5"/><polygon points="359.6,228.3 356.1,233.2 352.0,237.6 347.9,242.1 345.0,247.4 342.1,252.7 338.2,257.3 335.2,262.5 331.5,267.3 328.7,272.7 325.2,277.6 322.1,282.8 319.6,288.3 316.5,293.5 313.2,298.5 310.5,303.9 308.1,309.4 304.3,314.3 302.5,320.1 300.0,325.5 297.1,330.8 294.5,336.3 291.7,341.6 289.7,347.3 290.3,349.7 291.2,350.1 293.4,349.0 296.2,343.6 297.7,337.7 300.6,332.5 304.0,327.5 306.7,322.1 308.5,316.3 311.0,310.9 313.7,305.5 316.7,300.3 319.7,295.2 321.6,289.4 325.0,284.4 328.2,279.3 331.4,274.3 334.3,269.0 337.0,263.7 339.7,258.3 343.0,253.3 346.7,248.6 349.8,243.4 353.6,238.8 356.7,233.6 360.4,228.9"/><polygon points="357.9,244.7 354.1,249.4 349.8,254.0 346.4,259.1 342.9,264.1 341.5,270.1 339.2,275.7 334.7,280.3 333.1,286.2 331.6,292.1 327.8,297.0 326.1,302.9 324.8,308.8 321.1,313.8 317.7,318.9 316.6,325.0 313.2,330.2 310.9,335.7 309.2,341.5 309.7,348.1 310.5,349.4 313.3,350.5 316.9,350.9 320.4,345.9 320.8,339.6 324.1,334.5 325.9,328.8 328.7,323.4 330.9,317.9 331.9,311.8 334.3,306.4 337.4,301.2 340.3,296.0 341.6,290.0 343.2,284.2 345.5,278.7 349.0,273.7 350.6,267.8 353.3,262.5 354.8,256.6 357.3,251.2 359.8,245.7"/><polygon points="406.1,188.1 401.5,192.1 397.4,196.4 398.8,197.7 402.2,192.8 406.6,188.7"/><polygon points="378.4,227.3 375.8,232.7 372.3,237.7 370.3,243.5 368.0,249.0 365.1,254.3 363.1,260.1 361.3,265.8 358.7,271.2 356.0,276.7 355.0,282.7 352.5,288.2 350.4,293.8 348.2,299.4 345.5,304.8 344.0,310.7 341.7,316.2 340.7,322.3 337.9,327.7 335.4,333.1 334.4,339.2 332.7,344.9 332.1,349.4 333.2,349.7 335.6,345.9 339.1,340.7 340.5,334.9 340.8,328.6 344.0,323.4 346.2,317.8 347.4,311.9 349.1,306.1 351.3,300.5 353.7,295.0 356.1,289.5 357.8,283.8 359.6,278.0 360.4,271.9 362.8,266.4 366.3,261.3 367.9,255.5 369.7,249.8 372.0,244.2 374.5,238.7 377.0,233.3 379.1,227.6"/><polygon points="401.2,202.1 398.8,207.6 395.8,212.9 393.3,218.4 391.1,224.0 389.6,229.8 386.0,235.0 384.0,240.6 383.8,246.9 379.1,251.7 377.7,257.6 377.1,263.7 375.0,269.4 373.3,275.1 372.4,281.1 369.1,286.4 366.3,291.9 366.5,298.2 364.4,303.8 361.3,309.3 360.3,315.2 360.5,321.5 357.8,327.0 356.0,332.7 355.2,338.7 354.6,344.8 354.4,349.6 356.9,350.2 358.6,345.8 360.9,340.2 364.5,334.9 365.2,328.9 366.4,323.0 366.4,316.8 368.3,311.1 372.3,306.0 373.6,300.2 373.2,293.8 374.3,287.9 377.0,282.4 378.6,276.7 380.3,270.9 382.3,265.3 382.2,259.0 385.0,253.6 387.6,248.2 388.8,242.3 390.4,236.5 392.3,230.8 395.1,225.5 396.7,219.7 399.0,214.2 400.2,208.2 402.4,202.6"/><polygon points="402.8,215.7 400.9,221.4 399.1,227.2 397.3,233.0 395.8,238.8 394.9,244.7 393.2,250.5 391.3,256.3 391.4,262.4 390.5,268.4 388.4,274.1 387.7,280.1 386.7,286.0 385.5,291.9 383.0,297.5 384.0,303.8 381.6,309.5 380.2,315.4 379.8,321.4 378.7,327.3 377.4,333.2 376.9,339.2 377.1,345.3 376.7,349.8 378.6,350.1 379.4,345.6 381.2,339.8 382.6,334.0 383.6,328.1 384.6,322.1 384.1,316.0 384.9,310.0 386.9,304.3 389.0,298.6 388.6,292.4 388.7,286.4 390.8,280.6 391.2,274.6 393.2,268.9 393.5,262.8 394.9,257.0 395.2,251.0 397.2,245.3 399.4,239.6 399.7,233.5 400.7,227.6 402.2,221.8 403.7,216.0"/><polygon points="412.8,194.4 410.3,200.0 406.8,205.3 407.9,211.8 406.9,217.7 407.7,217.8 409.0,212.0 410.9,206.3 412.3,200.6 413.6,194.7"/><polygon points="422.1,212.5 420.0,218.3 418.1,224.1 418.8,230.3 417.7,236.2 415.2,242.0 415.6,248.0 416.1,254.1 412.8,259.9 412.2,265.8 412.9,271.9 411.9,277.9 409.9,283.7 412.0,289.9 410.7,295.9 409.3,301.8 408.1,307.7 410.1,313.9 406.4,319.6 406.5,325.7 407.5,331.8 405.4,337.6 404.6,343.6 408.0,349.8 409.5,350.0 410.6,350.0 412.5,350.1 415.7,344.3 415.4,338.3 415.9,332.3 415.8,326.3 416.4,320.4 417.2,314.4 416.7,308.4 418.2,302.5 416.2,296.3 416.6,290.3 419.3,284.5 419.2,278.5 418.4,272.4 418.3,266.4 419.2,260.5 421.3,254.7 421.0,248.6 420.9,242.6 420.5,236.5 421.6,230.6 423.9,224.8 423.4,218.7 422.9,212.6"/><polygon points="420.7,212.3 419.8,218.3 417.9,224.1 417.5,230.1 416.8,236.1 416.5,242.1 415.4,248.0 415.7,254.1 413.7,259.9 412.7,265.9 413.3,272.0 411.9,277.9 411.4,283.9 411.6,289.9 411.0,295.9 409.8,301.8 409.9,307.9 409.2,313.8 409.0,319.8 407.1,325.7 408.4,331.8 406.7,337.7 405.7,343.7 407.4,349.8 408.2,349.9 409.0,349.9 409.7,350.0 412.0,344.1 412.8,338.1 412.2,332.1 412.0,326.1 412.1,320.0 413.6,314.1 413.7,308.1 414.2,302.2 413.6,296.1 414.7,290.2 415.0,284.2 416.4,278.3 416.4,272.2 416.3,266.2 417.3,260.3 417.8,254.3 418.4,248.3 418.5,242.3 418.5,236.3 419.9,230.4 420.8,224.4 421.3,218.5 421.5,212.4"/><polygon points="428.2,193.2 425.8,198.9 426.9,205.1 426.6,211.1 427.4,211.2 427.9,205.2 429.3,199.3 429.6,193.3"/><polygon points="425.6,217.1 425.4,223.1 425.3,229.1 424.6,235.1 424.0,241.1 425.3,247.1 424.5,253.1 423.5,259.2 425.4,265.1 424.8,271.2 423.9,277.2 424.7,283.2 424.8,289.2 424.9,295.2 424.7,301.2 425.1,307.2 425.2,313.2 424.3,319.2 425.7,325.2 426.2,331.2 425.4,337.2 425.9,343.2 427.1,349.2 427.4,350.1 429.0,350.0 429.0,349.1 430.2,343.0 430.4,337.0 430.4,331.0 429.1,325.1 429.0,319.1 429.1,313.1 428.4,307.1 429.3,301.1 428.8,295.1 427.7,289.1 427.7,283.1 428.3,277.1 428.0,271.1 426.7,265.1 427.3,259.1 427.2,253.1 427.2,247.1 427.7,241.1 426.1,235.1 426.6,229.1 426.2,223.1 426.6,217.1"/><polygon points="428.2,219.9 426.4,226.0 426.6,232.0 428.2,237.9 427.0,244.0 427.5,250.0 427.9,256.0 428.5,262.0 428.3,268.0 430.3,273.9 429.2,280.0 428.5,286.1 430.1,292.0 431.4,297.9 430.1,304.0 431.1,310.0 432.2,315.9 431.8,322.0 431.9,328.0 432.3,334.0 433.3,339.9 434.5,345.8 437.5,350.0 438.4,350.0 440.4,345.3 442.0,339.1 441.2,333.2 439.0,327.4 438.8,321.4 438.1,315.4 439.5,309.3 438.6,303.3 435.7,297.5 436.2,291.5 436.6,285.4 436.5,279.5 434.5,273.6 433.2,267.7 433.5,261.6 434.2,255.6 433.2,249.7 431.3,243.8 431.0,237.8 429.9,231.8 430.8,225.8 429.6,219.8"/><polygon points="432.1,231.0 433.4,236.9 433.2,243.1 434.9,248.8 437.4,254.4 438.0,260.5 438.8,266.4 440.4,272.2 441.2,278.2 443.1,283.9 445.3,289.6 446.6,295.4 446.4,301.7 448.6,307.3 450.2,313.1 451.0,319.1 452.8,324.8 454.1,330.7 455.7,336.4 456.1,342.5 459.8,347.8 461.2,349.9 462.7,349.6 462.3,347.1 461.1,341.2 459.6,335.4 459.8,329.2 458.0,323.5 455.4,317.9 454.3,312.0 452.4,306.3 451.1,300.5 450.0,294.6 447.5,289.0 446.0,283.2 444.1,277.5 443.5,271.5 441.7,265.7 440.7,259.8 438.7,254.1 437.5,248.3 436.1,242.4 434.5,236.6 432.9,230.8"/><polygon points="425.8,207.2 427.1,213.0 429.2,218.7 430.0,224.7 432.1,224.2 430.0,218.5 428.5,212.7 427.0,206.9"/><polygon points="433.6,187.2 436.5,192.5 438.0,198.5 442.3,203.0 443.0,202.6 440.9,196.9 438.1,191.6 434.4,186.8"/><polygon points="461.8,240.2 464.5,245.5 467.6,250.7 470.1,256.2 472.5,261.7 476.1,266.6 479.0,271.8 480.8,277.7 484.1,282.7 487.5,287.7 488.8,293.8 492.2,298.8 494.7,304.2 498.0,309.3 499.9,315.1 503.7,319.8 506.6,325.1 508.7,330.8 511.0,336.4 515.4,340.8 518.4,346.0 521.6,350.7 522.8,350.1 521.6,344.3 519.3,338.7 516.7,333.2 512.9,328.5 510.3,323.1 507.3,317.9 505.2,312.2 501.7,307.3 498.1,302.4 495.5,297.0 492.8,291.6 489.9,286.4 486.1,281.6 483.2,276.3 480.3,271.1 477.7,265.7 475.2,260.2 471.2,255.6 469.0,249.9 465.9,244.8 462.7,239.7"/><polygon points="461.9,211.9 466.0,216.3 467.8,222.9 473.0,226.2 476.9,230.8 480.9,235.2 485.4,239.3 489.1,244.0 493.6,248.0 497.4,252.7 502.4,256.2 506.2,260.9 509.6,266.0 514.7,269.3 518.5,274.0 521.5,279.5 526.0,283.6 531.7,286.4 534.4,292.2 538.3,296.8 543.6,300.0 547.4,304.7 551.9,308.7 556.5,312.6 561.1,316.6 564.9,321.3 569.4,325.3 574.2,329.0 579.1,332.6 582.8,337.7 589.1,339.6 593.0,344.5 597.8,348.6 603.9,350.6 610.4,351.3 610.4,351.3 611.5,348.8 611.7,348.4 607.3,344.1 602.0,341.8 598.3,336.9 593.4,333.7 587.4,331.9 583.1,327.8 579.1,323.2 573.9,320.2 570.2,315.3 564.8,312.4 560.5,308.3 556.1,304.3 552.9,298.9 547.9,295.6 542.2,292.8 537.9,288.6 534.9,283.1 531.0,278.5 526.7,274.4 520.7,271.9 516.9,267.3 513.1,262.6 510.1,257.1 504.3,254.4 500.5,249.7 496.6,245.2 493.1,240.2 489.1,235.7 483.3,233.0 479.6,228.3 475.6,223.8 471.7,219.2 467.1,215.3 462.5,211.4"/><polygon points="471.0,211.4 474.9,216.0 478.2,221.3 483.6,224.2 488.5,227.8 491.9,233.0 496.1,237.3 501.1,240.6 504.7,245.6 509.5,249.3 514.0,253.3 518.5,257.2 523.0,261.3 527.1,265.7 531.7,269.5 535.3,274.4 539.9,278.3 546.0,280.5 549.7,285.3 553.0,290.8 557.9,294.2 563.4,297.1 566.1,303.1 571.3,306.3 576.3,309.7 580.3,314.2 585.0,317.9 590.5,320.9 594.2,325.7 598.2,330.3 603.7,333.1 608.2,337.1 611.4,342.6 616.5,346.0 622.0,348.8 626.7,352.6 629.1,351.1 631.1,348.6 631.7,346.3 627.0,342.5 623.2,337.8 619.4,333.1 614.9,329.2 609.9,325.9 604.4,323.1 600.2,318.7 595.2,315.3 590.9,311.2 586.6,307.0 580.7,304.6 577.0,299.7 573.6,294.5 568.1,291.7 563.4,288.0 558.1,284.9 553.8,280.7 550.0,276.0 545.4,272.2 539.7,269.5 535.9,264.7 531.9,260.2 528.1,255.5 522.1,253.1 518.0,248.8 512.5,245.9 508.9,241.0 505.2,236.1 500.4,232.5 495.0,229.6 490.1,226.0 486.0,221.5 482.6,216.4 476.6,214.1 471.5,210.8"/><polygon points="470.8,211.6 475.3,215.6 478.8,220.6 483.7,224.1 488.6,227.6 492.3,232.6 496.7,236.6 502.0,239.7 506.1,244.0 509.8,248.9 515.1,252.0 519.4,256.3 523.8,260.4 528.1,264.5 533.4,267.5 536.9,272.7 541.2,276.9 546.3,280.2 550.6,284.4 554.7,288.8 559.8,292.1 564.4,295.9 567.6,301.3 572.4,305.0 577.3,308.6 581.9,312.4 585.8,317.1 591.0,320.2 594.9,324.9 599.1,329.2 604.3,332.4 609.4,335.7 613.0,340.7 617.9,344.2 623.3,347.2 627.7,351.3 629.3,350.9 630.5,349.3 629.9,348.5 625.5,344.4 621.4,340.1 617.3,335.6 612.2,332.4 607.8,328.3 602.4,325.4 598.1,321.2 594.2,316.6 589.6,312.7 584.5,309.4 579.9,305.6 575.9,301.0 571.1,297.4 566.8,293.2 561.9,289.7 556.8,286.4 553.0,281.6 548.7,277.4 543.6,274.1 539.4,269.8 534.2,266.6 529.9,262.5 525.6,258.3 521.5,253.8 516.4,250.6 511.9,246.6 507.5,242.6 503.2,238.3 499.0,234.0 493.8,230.9 489.6,226.6 485.0,222.6 481.1,218.0 475.8,215.0 471.3,211.0"/><polygon points="443.8,181.3 447.6,186.2 453.1,188.8 458.3,191.9 462.8,195.9 463.9,194.5 459.0,190.9 453.9,187.7 449.1,184.1 444.6,180.2"/><polygon points="463.4,188.4 467.6,193.0 473.6,194.7 478.9,197.5 479.3,196.9 474.5,193.2 469.2,190.2 463.9,187.4"/><polygon points="484.0,200.6 488.9,204.1 494.3,206.8 499.1,210.5 504.1,213.7 509.3,216.8 514.8,219.3 519.5,223.0 524.5,226.4 529.8,229.2 534.5,233.0 539.9,235.7 544.8,239.1 549.9,242.3 554.5,246.3 560.1,248.7 565.0,252.0 569.2,256.6 574.9,258.9 580.2,261.7 584.2,266.5 589.3,269.6 594.4,272.9 599.3,276.2 604.2,279.7 609.3,282.9 614.3,286.2 618.3,290.8 623.6,293.8 628.6,297.1 632.9,301.4 637.3,305.5 642.5,308.6 647.0,312.5 650.5,317.6 655.8,320.6 660.5,324.4 664.1,329.3 668.4,333.4 673.2,337.0 677.4,341.3 680.9,346.2 686.3,349.3 687.7,350.2 688.7,349.3 687.9,347.8 683.4,343.8 679.5,339.2 675.7,334.5 671.8,329.8 667.2,325.9 662.0,322.7 657.7,318.4 653.2,314.5 649.1,310.0 643.9,306.9 639.1,303.2 635.0,298.7 629.9,295.5 625.4,291.5 619.8,288.8 614.9,285.4 610.7,281.0 606.2,276.9 601.0,273.8 595.9,270.7 590.5,267.9 586.0,263.9 581.1,260.4 576.0,257.2 570.7,254.3 565.8,250.8 561.2,247.0 556.2,243.7 550.9,240.8 545.8,237.6 541.2,233.6 536.5,229.9 531.1,227.1 525.7,224.4 520.3,221.8 515.4,218.2 510.5,214.8 505.1,212.1 499.9,209.2 494.7,206.1 489.6,203.0 484.6,199.6"/><polygon points="506.9,203.3 511.8,206.8 516.8,210.2 522.6,212.0 527.2,216.1 532.5,218.9 537.9,221.5 543.0,224.8 547.0,229.7 553.4,230.6 558.3,234.2 562.8,238.2 568.1,241.1 574.2,242.6 577.7,248.2 582.4,251.9 589.2,252.5 593.9,256.3 597.2,261.9 602.8,264.4 608.5,266.7 612.6,271.2 617.8,274.3 622.4,278.1 626.8,282.2 631.3,286.1 636.9,288.7 640.9,293.2 644.5,298.2 650.8,300.0 654.5,304.9 659.4,308.4 663.4,312.8 669.3,315.1 671.6,321.5 677.2,324.2 681.5,328.4 685.6,332.7 688.8,337.9 694.6,340.6 698.9,344.8 703.3,348.8 708.5,350.5 709.3,349.7 707.5,344.6 705.3,338.3 700.9,334.2 695.5,331.0 690.7,327.4 686.8,322.6 683.5,317.4 677.7,314.7 673.2,310.8 668.4,307.0 664.6,302.2 660.4,297.8 654.5,295.5 650.3,291.1 644.4,288.8 640.2,284.4 635.8,280.2 631.5,276.0 626.1,273.2 620.7,270.2 616.3,266.1 612.0,261.8 606.1,259.7 601.3,256.1 595.8,253.4 591.9,248.4 587.3,244.5 580.8,243.5 575.3,240.8 570.7,236.9 566.6,232.0 561.2,229.3 554.9,228.1 549.5,225.5 545.0,221.3 539.8,218.2 534.6,215.2 528.7,213.5 523.5,210.4 518.7,206.6 513.5,203.6 507.5,202.2"/><polygon points="457.7,175.8 463.6,177.3 469.2,179.2 469.5,178.5 463.8,176.5 458.1,174.6"/><polygon points="507.7,195.8 513.2,198.3 518.4,201.2 524.0,203.5 529.1,206.5 534.5,209.2 539.4,212.7 545.3,214.4 550.0,218.2 555.4,220.8 560.9,223.2 566.1,226.2 570.2,231.0 575.9,233.1 581.0,236.3 585.4,240.4 591.0,242.9 595.6,246.6 600.4,250.2 605.1,253.9 610.8,256.3 615.8,259.5 620.2,263.7 625.0,267.2 629.9,270.6 634.3,274.7 638.9,278.5 643.7,282.1 648.1,286.1 652.9,289.8 657.6,293.4 662.1,297.4 666.4,301.6 671.3,305.0 676.2,308.5 679.8,313.4 684.4,317.3 689.5,320.5 693.3,325.2 697.3,329.7 701.8,333.7 706.5,337.4 709.7,342.7 714.8,346.1 720.3,349.0 722.6,351.4 723.9,350.1 721.9,347.3 718.6,342.1 714.6,337.6 710.0,333.7 705.1,330.2 700.7,326.1 696.4,321.9 692.1,317.7 688.0,313.2 682.8,310.1 678.1,306.3 673.8,302.1 670.1,297.3 665.1,293.8 659.9,290.7 655.5,286.6 650.6,283.1 646.2,279.0 641.3,275.5 637.0,271.2 631.3,268.8 627.4,264.0 622.8,260.0 617.9,256.6 612.3,254.0 606.9,251.3 602.7,246.8 597.6,243.7 592.4,240.7 587.6,237.0 582.1,234.5 577.0,231.3 572.5,227.1 567.2,224.3 561.3,222.5 556.4,219.0 551.7,215.2 545.9,213.2 540.7,210.2 535.4,207.5 529.9,205.1 524.6,202.2 519.5,198.9 513.6,197.4 508.1,195.1"/><polygon points="497.2,184.1 502.6,186.8 508.2,188.9 513.8,190.9 519.1,193.8 525.2,194.7 530.1,198.4 534.8,202.6 540.6,204.2 546.6,205.6 550.9,210.4 556.8,211.9 562.7,213.4 567.0,218.0 572.1,221.2 578.1,222.8 583.0,226.2 587.1,231.1 592.7,233.2 598.4,235.4 603.0,239.2 608.1,242.4 613.2,245.6 617.3,250.1 622.3,253.5 627.9,255.9 632.1,260.2 636.3,264.7 642.5,266.3 647.0,270.2 650.8,275.1 655.9,278.2 661.7,280.5 664.7,286.3 669.8,289.6 675.9,291.5 678.8,297.4 683.2,301.4 689.4,303.3 693.0,308.4 697.4,312.4 702.6,315.5 707.2,319.4 709.9,325.3 714.8,328.7 719.5,332.5 724.2,336.2 728.1,340.8 732.5,344.8 736.2,349.6 742.0,352.2 744.7,350.4 745.7,349.3 746.2,347.8 744.0,341.4 739.3,337.6 734.8,333.6 730.5,329.4 725.8,325.6 721.0,322.0 717.6,316.7 712.7,313.2 707.2,310.3 702.9,306.0 698.3,302.1 694.3,297.6 689.6,293.8 684.4,290.6 679.0,287.7 675.8,282.1 670.5,279.0 665.6,275.5 660.8,271.9 655.3,269.1 651.2,264.6 646.6,260.6 641.6,257.3 635.6,255.3 631.6,250.5 626.9,246.7 622.2,243.0 616.2,241.0 611.1,237.8 606.3,234.2 601.0,231.3 596.7,226.7 590.9,224.7 585.2,222.5 580.7,218.2 575.6,215.0 570.0,212.7 563.9,211.2 558.9,207.9 554.1,204.0 548.8,200.9 542.8,199.6 536.8,198.2 531.9,194.6 526.4,191.9 520.8,189.7 515.4,186.9 509.1,186.6 503.3,185.0 497.7,182.6"/><polygon points="531.0,190.0 536.2,193.2 541.6,195.8 547.6,197.1 552.1,201.5 557.9,203.1 563.9,204.5 568.5,208.8 573.9,211.2 579.9,212.8 584.1,217.5 589.7,219.7 594.9,222.7 599.9,226.1 605.0,229.0 610.1,232.2 615.1,235.5 620.4,238.2 625.1,242.0 630.9,244.1 634.9,248.9 640.4,251.4 645.3,254.9 650.1,258.4 654.7,262.3 660.1,265.0 665.0,268.4 668.7,273.6 673.8,276.6 679.5,279.0 683.1,284.2 688.1,287.6 693.3,290.5 697.8,294.4 701.7,299.1 707.5,301.5 711.8,305.7 715.4,310.8 720.7,313.8 726.3,316.4 729.6,321.7 734.7,324.9 739.8,328.2 743.5,333.1 748.2,336.8 753.7,339.6 757.5,344.3 761.6,348.7 767.4,351.2 768.7,350.3 769.7,349.3 770.9,347.4 766.9,342.8 761.8,339.5 757.1,335.8 753.1,331.2 748.7,327.1 743.7,323.6 739.1,319.8 734.4,316.0 730.1,311.8 725.9,307.4 721.2,303.7 716.3,300.2 711.1,297.0 707.7,291.6 702.4,288.6 697.3,285.3 691.7,282.8 687.5,278.4 682.9,274.4 678.2,270.8 672.9,267.8 667.4,265.1 663.2,260.6 658.8,256.5 654.1,252.7 648.6,250.0 642.8,247.8 638.1,244.1 633.8,239.6 628.1,237.3 623.2,233.8 617.9,231.0 613.4,226.8 608.2,223.7 602.4,221.8 597.0,219.0 592.2,215.3 586.8,212.5 581.2,210.2 575.7,207.8 570.4,205.0 564.6,203.0 559.7,199.4 554.6,196.2 548.8,194.3 542.8,192.9 537.4,190.2 531.6,188.5"/><polygon points="530.6,191.0 536.1,193.5 541.7,195.5 547.1,198.2 552.2,201.4 558.0,202.9 563.4,205.5 568.6,208.5 573.9,211.4 579.2,214.0 584.4,217.0 589.6,220.0 594.7,223.1 599.9,226.0 604.9,229.2 610.6,231.4 615.4,235.1 620.5,238.1 625.0,242.2 630.9,244.1 635.6,247.9 640.4,251.5 645.5,254.5 650.5,257.8 654.6,262.5 659.8,265.4 665.4,267.9 668.9,273.2 674.7,275.4 679.6,278.8 683.6,283.5 688.2,287.3 693.4,290.5 697.8,294.5 702.7,297.9 707.2,301.9 711.8,305.7 716.1,310.0 721.4,312.9 726.3,316.4 730.3,320.9 735.3,324.2 740.1,327.8 744.1,332.4 748.5,336.4 753.2,340.2 758.0,343.8 761.6,348.7 767.1,351.6 767.8,351.3 768.5,350.6 769.2,349.2 764.9,345.1 760.3,341.2 755.4,337.7 751.8,332.7 747.1,328.9 741.8,325.9 737.1,322.2 732.6,318.1 728.5,313.8 724.0,309.7 718.7,306.7 713.7,303.4 709.9,298.6 704.9,295.2 700.5,291.1 695.5,287.8 690.6,284.3 685.7,280.8 681.1,276.9 676.2,273.5 671.5,269.6 666.6,266.2 661.7,262.7 657.2,258.7 651.7,256.1 646.9,252.5 641.9,249.1 636.9,245.8 632.0,242.5 626.5,239.8 621.7,236.3 616.6,233.1 611.9,229.2 606.3,227.0 601.0,224.1 595.7,221.3 590.9,217.6 585.5,214.9 580.4,211.7 574.9,209.4 569.2,207.4 563.8,204.7 558.7,201.5 553.4,198.8 547.6,197.0 542.0,194.8 536.5,192.5 531.0,190.2"/><polygon points="473.0,169.4 478.9,170.1 484.7,171.7 490.7,172.4 496.6,173.2 496.8,172.4 491.0,170.8 485.1,169.4 479.0,169.3 473.0,168.6"/><polygon points="501.8,169.9 507.8,170.6 513.6,171.7 513.8,170.5 507.9,169.8 501.9,168.9"/><polygon points="519.6,172.2 525.5,173.4 531.1,176.1 537.2,176.1 543.0,177.9 548.6,180.1 554.2,182.1 560.1,183.2 565.9,184.7 571.4,187.4 577.0,189.4 582.7,191.3 588.0,194.2 593.9,195.6 599.7,197.3 605.0,200.1 610.3,202.9 616.1,204.6 621.4,207.5 626.5,210.7 632.1,212.8 637.5,215.5 642.3,219.2 647.6,222.0 653.5,223.7 657.8,228.3 663.2,230.9 668.6,233.6 673.8,236.5 678.8,239.9 684.1,242.7 689.0,246.1 693.7,250.0 698.8,253.1 703.9,256.2 709.1,259.3 713.7,263.1 719.4,265.5 723.9,269.4 728.6,273.1 734.1,275.7 738.6,279.7 742.7,284.3 748.3,286.8 753.3,290.1 756.9,295.3 762.3,298.1 767.4,301.3 771.2,306.2 776.0,309.8 781.3,312.7 785.7,316.8 789.9,321.2 795.4,323.9 800.2,327.5 802.8,329.2 803.9,328.0 801.6,325.8 797.7,321.1 793.3,317.0 788.4,313.5 784.0,309.4 779.1,305.8 773.9,302.8 769.2,298.9 765.3,294.2 759.9,291.4 754.8,288.1 750.0,284.6 745.8,280.2 740.7,277.0 736.2,272.9 730.8,270.1 725.3,267.5 720.7,263.5 716.2,259.4 710.9,256.5 705.3,254.2 700.6,250.2 696.3,246.0 690.7,243.5 685.6,240.3 680.3,237.4 674.9,234.8 670.3,230.7 664.9,228.0 659.8,224.8 654.2,222.5 649.2,219.0 643.7,216.5 638.3,213.9 632.7,211.8 627.6,208.4 622.3,205.6 617.0,202.8 611.5,200.3 605.9,198.1 600.0,196.6 594.9,193.1 589.1,191.3 583.5,189.0 577.6,187.8 572.0,185.5 566.4,183.4 561.1,180.3 554.9,180.0 549.0,178.4 543.4,176.3 537.6,174.5 531.6,173.7 525.7,172.6 519.8,171.4"/><polygon points="536.4,170.9 542.3,172.0 547.8,174.4 553.5,176.5 559.6,176.8 565.2,179.0 570.3,182.4 576.1,184.0 582.3,184.4 587.3,188.0 592.8,190.3 598.7,191.6 604.7,192.7 609.4,197.0 615.4,198.2 620.6,201.0 625.9,204.0 631.7,205.7 637.3,207.8 642.0,211.8 647.0,215.1 652.6,217.2 658.1,219.8 662.5,224.1 669.1,224.6 674.4,227.4 678.9,231.6 684.0,234.6 689.8,236.7 693.8,241.5 698.7,244.9 704.9,246.4 709.3,250.6 714.3,253.9 719.1,257.5 724.5,260.2 729.2,263.8 733.8,267.8 739.4,270.2 743.5,274.8 748.3,278.3 754.1,280.5 758.7,284.4 762.9,288.8 769.1,290.4 773.6,294.5 776.8,300.1 783.0,301.8 787.1,306.4 791.6,310.4 797.2,312.9 802.8,314.3 803.9,312.8 800.0,309.2 796.1,304.5 791.7,300.3 787.5,295.9 782.4,292.7 777.0,289.8 771.2,287.6 767.6,282.4 762.3,279.4 757.4,275.8 751.9,273.3 747.5,269.0 742.5,265.6 737.6,262.2 733.0,258.2 727.6,255.5 722.0,253.1 718.1,248.1 713.1,244.7 707.2,242.7 701.4,240.7 696.5,237.1 691.6,233.6 687.4,229.0 681.6,226.9 675.7,225.1 670.5,222.1 666.3,217.2 660.3,215.7 654.9,213.0 649.3,210.6 644.6,206.7 639.3,203.7 633.2,202.5 627.9,199.7 622.0,198.2 617.1,194.3 611.4,192.3 605.9,189.8 599.7,189.1 594.3,186.4 588.8,183.9 583.7,180.4 577.4,180.2 571.8,177.7 566.1,176.0 560.5,173.5 554.6,172.2 548.9,170.3 542.6,170.6 536.7,169.6"/><polygon points="490.0,160.4 496.0,160.4 502.0,161.1 508.0,160.4 508.0,159.6 502.0,158.4 496.0,157.9 490.0,159.6"/><polygon points="519.8,162.6 525.7,163.6 531.6,164.0 537.5,165.0 543.3,166.3 549.1,167.5 555.0,168.5 560.8,170.0 566.2,172.7 572.1,173.7 578.0,174.9 583.6,177.0 589.1,179.4 595.1,180.3 600.3,183.3 605.7,186.0 611.5,187.5 617.1,189.7 622.5,192.2 628.2,194.0 633.5,196.9 638.9,199.3 644.2,202.1 649.9,204.1 654.7,207.9 660.2,210.3 666.1,211.9 670.9,215.5 675.9,218.8 681.3,221.4 686.5,224.4 691.2,228.2 697.0,230.1 702.2,233.1 707.0,236.6 712.2,239.7 717.5,242.5 722.4,245.8 727.6,248.8 732.6,252.2 737.8,255.2 742.5,258.9 747.6,262.0 753.0,264.6 757.5,268.7 762.3,272.2 767.5,275.3 772.3,278.9 776.7,282.9 782.1,285.7 787.0,289.2 791.7,292.9 797.7,294.8 801.9,297.5 802.6,296.6 798.7,293.4 794.6,288.8 789.4,285.7 785.4,281.0 780.2,277.9 775.0,275.0 769.8,271.9 764.9,268.5 760.5,264.2 754.8,262.0 749.6,259.0 744.9,255.2 739.6,252.3 735.0,248.4 729.3,246.2 724.4,242.6 718.9,240.1 714.7,235.5 709.7,232.2 703.9,230.1 698.7,227.1 693.4,224.4 688.3,221.2 682.9,218.5 677.3,216.2 672.0,213.4 667.0,210.2 661.9,206.9 656.7,203.9 650.8,202.3 645.1,200.3 640.2,196.5 634.8,194.0 628.9,192.4 623.6,189.7 618.0,187.5 612.3,185.6 606.9,182.8 601.2,181.0 595.5,179.1 589.7,177.6 584.5,174.2 578.8,172.4 572.8,171.3 567.0,170.0 561.2,168.3 555.3,167.3 549.6,165.5 543.6,164.6 537.6,164.1 531.9,162.3 525.8,162.2 519.9,161.6"/><polygon points="533.9,155.7 539.8,156.7 545.5,159.6 551.6,158.8 557.6,159.0 563.2,161.7 568.9,163.4 575.2,162.8 580.4,166.6 586.0,168.5 592.4,168.1 597.9,170.6 603.0,174.1 609.1,174.6 615.0,176.0 619.9,180.0 625.7,181.5 631.6,182.8 636.4,186.8 642.4,188.0 648.3,189.2 653.5,192.4 658.1,196.6 664.1,197.8 669.7,200.0 674.7,203.5 679.9,206.3 685.3,208.8 690.9,211.1 696.3,213.7 701.2,217.1 706.2,220.4 711.6,223.0 717.0,225.7 722.6,227.9 727.3,231.7 732.0,235.5 738.0,237.2 742.5,241.2 747.4,244.8 753.3,246.6 757.9,250.4 762.2,254.8 767.8,257.2 772.9,260.3 777.2,264.7 782.9,266.8 788.5,269.2 791.9,274.9 799.0,275.1 802.8,275.3 803.9,273.7 801.6,271.1 797.7,266.1 792.1,263.8 787.7,259.6 783.0,255.7 777.9,252.6 771.8,250.8 766.8,247.5 762.5,243.0 757.2,240.1 751.5,238.0 746.4,234.8 741.5,231.3 736.2,228.4 731.1,225.1 725.7,222.5 720.1,220.1 715.2,216.6 709.8,213.9 704.6,210.8 699.1,208.3 693.7,205.7 688.0,203.5 683.8,198.6 677.6,197.5 672.2,194.7 666.0,193.9 661.0,190.3 655.7,187.3 650.2,184.9 643.9,184.3 638.6,181.3 633.6,177.7 627.7,176.1 622.3,173.4 616.1,172.8 610.4,170.9 604.9,168.2 599.1,166.7 593.1,165.6 587.4,163.6 581.3,163.0 575.8,160.5 570.2,157.7 563.9,158.1 557.9,157.4 552.0,156.3 546.3,153.9 540.1,153.9 534.0,154.9"/><polygon points="548.8,150.6 554.8,151.2 560.7,152.1 566.4,154.1 572.3,154.9 578.3,155.2 583.9,157.8 589.7,159.0 595.6,160.1 601.5,161.3 607.1,163.3 612.8,165.1 618.3,167.5 623.7,170.1 629.9,170.6 635.2,173.3 640.8,175.4 646.7,176.9 651.9,180.1 657.3,182.6 662.9,184.7 668.7,186.3 673.7,189.9 678.8,193.1 684.6,194.8 690.0,197.3 695.0,200.6 700.8,202.5 706.2,205.1 711.1,208.6 716.4,211.5 721.7,214.1 726.9,217.1 732.1,220.2 737.9,221.9 742.8,225.5 747.8,228.8 752.8,232.1 758.2,234.8 763.0,238.3 768.3,241.3 774.0,243.4 778.2,247.9 783.7,250.4 789.3,252.9 793.7,257.0 798.9,260.1 802.4,260.9 803.0,259.9 800.7,257.2 795.3,254.5 790.6,250.8 785.5,247.6 780.7,244.0 775.8,240.5 769.8,238.8 764.5,235.9 759.6,232.4 754.8,228.8 749.4,226.0 744.3,222.9 738.7,220.6 734.1,216.6 728.5,214.2 723.6,210.7 717.7,209.1 712.2,206.5 707.2,203.2 702.5,199.2 696.3,198.0 691.1,195.1 685.9,192.1 680.2,190.0 675.0,186.9 669.2,185.2 663.7,182.9 658.6,179.6 653.2,176.9 647.6,174.7 641.5,173.8 635.8,171.7 630.6,168.7 625.1,166.2 619.3,164.4 613.5,162.8 607.6,161.5 601.8,160.0 596.2,158.0 590.5,155.8 584.5,155.3 578.5,154.3 572.8,152.2 566.8,151.9 560.9,150.3 554.9,150.4 548.9,149.8"/><polygon points="640.8,175.4 645.5,179.5 651.5,180.9 656.3,184.7 661.3,188.0 666.6,190.9 672.7,192.1 677.3,196.4 682.2,200.0 688.0,201.9 693.4,204.4 698.7,207.3 704.2,209.7 709.3,212.8 714.1,216.7 720.3,217.7 725.5,220.7 729.7,225.8 735.9,226.8 741.3,229.3 746.2,233.1 751.5,235.8 756.6,239.0 762.2,241.3 767.1,244.8 772.7,247.0 778.0,250.0 782.4,254.5 788.3,256.1 794.2,257.7 799.9,259.7 802.1,256.8 803.4,254.2 804.6,250.2 800.8,244.4 795.3,242.0 789.0,241.2 783.7,238.4 778.6,235.2 772.9,233.1 767.5,230.5 761.2,229.6 756.3,226.0 751.7,221.9 745.6,220.6 739.7,219.0 734.0,217.1 729.2,213.3 723.6,210.9 718.1,208.5 713.0,205.3 706.6,204.8 701.8,200.9 696.8,197.6 691.0,195.8 684.8,194.8 679.6,191.6 674.4,188.6 669.6,184.9 663.5,183.7 658.1,180.9 652.2,179.3 646.6,177.2 641.4,174.2"/><polygon points="668.5,145.1 673.8,148.0 678.6,151.7 683.7,154.7 689.4,156.9 693.7,161.4 699.5,163.5 704.6,166.7 709.2,170.6 714.4,173.7 719.8,176.3 725.0,179.2 729.5,183.4 735.3,185.4 740.2,188.9 745.2,192.2 750.8,194.6 755.9,197.7 760.2,202.2 765.4,205.3 770.9,207.8 775.6,211.5 780.6,214.9 786.4,216.9 791.5,220.0 796.3,223.6 802.3,225.4 803.4,224.3 804.1,223.1 804.7,221.3 800.5,216.7 794.9,214.4 789.8,211.1 784.2,208.8 779.2,205.5 774.5,201.7 768.3,200.3 763.1,197.4 758.6,193.1 753.1,190.7 748.1,187.4 742.5,185.1 737.5,181.6 732.2,178.9 727.2,175.5 722.0,172.5 716.2,170.5 710.8,168.0 706.0,164.1 701.3,160.4 695.3,158.7 690.1,155.7 685.0,152.5 680.1,149.0 674.4,146.9 668.9,144.4"/><polygon points="720.5,122.9 726.0,125.4 730.7,129.2 734.5,134.7 739.8,137.4 745.5,139.6 750.0,143.7 755.0,147.1 760.8,149.1 765.2,153.5 769.6,157.9 775.5,159.7 780.7,162.7 784.5,168.0 789.6,171.2 797.1,170.3 801.8,171.0 803.6,168.0 801.3,162.9 797.9,156.7 792.6,153.9 786.6,152.3 781.2,149.7 775.6,147.4 771.0,143.4 765.9,140.1 759.9,138.6 753.9,137.0 748.8,133.9 743.4,131.2 738.0,128.5 732.4,126.2 726.4,124.6 721.2,121.7"/><polygon points="720.5,122.8 725.8,125.6 731.1,128.5 735.3,133.2 740.5,136.3 746.4,138.0 751.2,141.6 755.9,145.6 761.8,147.4 766.4,151.4 771.0,155.5 776.5,157.9 781.9,160.6 786.3,164.9 791.8,167.3 797.9,168.9 802.3,170.2 803.1,168.8 800.3,164.6 796.2,159.8 790.6,157.5 785.2,154.8 779.4,152.9 774.4,149.6 769.7,145.6 763.7,144.1 758.7,140.7 752.9,138.7 748.1,135.0 743.1,131.7 737.5,129.5 731.7,127.5 726.3,124.8 721.1,121.8"/></g>
<g fill="none" stroke="#8fe888" stroke-width="1"><ellipse cx="685.6" cy="103.4" rx="2.7" ry="2.5"/><ellipse cx="632.7" cy="126.5" rx="3.7" ry="2.4"/><ellipse cx="502.2" cy="97.0" rx="2.2" ry="2.1"/><ellipse cx="657.5" cy="121.3" rx="1.6" ry="1.7"/><ellipse cx="675.3" cy="124.5" rx="1.8" ry="1.2"/><ellipse cx="641.8" cy="119.4" rx="1.8" ry="2.1"/><ellipse cx="547.7" cy="109.2" rx="3.5" ry="2.0"/><ellipse cx="677.1" cy="130.1" rx="3.1" ry="2.3"/><ellipse cx="716.7" cy="111.0" rx="3.2" ry="2.1"/><ellipse cx="731.7" cy="110.6" rx="3.4" ry="1.6"/><ellipse cx="498.8" cy="123.2" rx="3.0" ry="2.0"/><ellipse cx="620.8" cy="104.4" rx="1.9" ry="2.1"/><ellipse cx="729.1" cy="130.9" rx="2.8" ry="1.8"/><ellipse cx="638.8" cy="93.9" rx="3.3" ry="1.5"/><ellipse cx="520.2" cy="94.5" rx="3.9" ry="1.6"/><ellipse cx="609.6" cy="94.7" rx="2.5" ry="1.8"/><ellipse cx="530.1" cy="96.9" rx="3.0" ry="2.3"/><ellipse cx="526.9" cy="127.8" rx="4.0" ry="2.1"/><ellipse cx="611.9" cy="99.3" rx="2.0" ry="2.2"/><ellipse cx="515.5" cy="100.5" rx="2.9" ry="2.1"/><ellipse cx="691.8" cy="103.2" rx="2.9" ry="1.4"/><ellipse cx="601.6" cy="116.9" rx="1.5" ry="1.3"/><ellipse cx="534.0" cy="129.1" rx="3.1" ry="2.1"/><ellipse cx="566.1" cy="116.8" rx="2.9" ry="1.9"/><ellipse cx="532.9" cy="122.2" rx="4.8" ry="1.9"/><ellipse cx="468.9" cy="114.2" rx="2.7" ry="2.3"/><ellipse cx="477.7" cy="146.1" rx="4.4" ry="2.3"/><ellipse cx="501.5" cy="125.6" rx="2.4" ry="1.2"/><ellipse cx="485.8" cy="132.1" rx="2.1" ry="2.3"/><ellipse cx="508.9" cy="127.9" rx="3.2" ry="1.8"/><ellipse cx="572.9" cy="115.8" rx="3.6" ry="1.9"/><ellipse cx="491.8" cy="141.7" rx="4.8" ry="1.8"/><ellipse cx="549.2" cy="138.2" rx="2.3" ry="2.4"/><ellipse cx="506.8" cy="119.4" rx="4.1" ry="1.7"/></g>
<g font-family="Liberation Sans" font-weight="bold" font-size="10.5" fill="#dcdcdc"><rect x="3.5" y="1.2" width="23.1" height="10.5" fill="#000"/><text x="15.0" y="10.2" text-anchor="middle">60W</text><rect x="3.5" y="337" width="23.1" height="10.5" fill="#000"/><text x="15.0" y="346.0" text-anchor="middle">60W</text><rect x="92.5" y="1.2" width="23.1" height="10.5" fill="#000"/><text x="104.0" y="10.2" text-anchor="middle">40W</text><rect x="92.5" y="337" width="23.1" height="10.5" fill="#000"/><text x="104.0" y="346.0" text-anchor="middle">40W</text><rect x="181.5" y="1.2" width="23.1" height="10.5" fill="#000"/><text x="193.0" y="10.2" text-anchor="middle">20W</text><rect x="181.5" y="337" width="23.1" height="10.5" fill="#000"/><text x="193.0" y="346.0" text-anchor="middle">20W</text><rect x="278.3" y="1.2" width="7.3" height="10.5" fill="#000"/><text x="282.0" y="10.2" text-anchor="middle">0</text><rect x="278.3" y="337" width="7.3" height="10.5" fill="#000"/><text x="282.0" y="346.0" text-anchor="middle">0</text><rect x="360.9" y="1.2" width="20.2" height="10.5" fill="#000"/><text x="371.0" y="10.2" text-anchor="middle">20E</text><rect x="360.9" y="337" width="20.2" height="10.5" fill="#000"/><text x="371.0" y="346.0" text-anchor="middle">20E</text><rect x="449.9" y="1.2" width="20.2" height="10.5" fill="#000"/><text x="460.0" y="10.2" text-anchor="middle">40E</text><rect x="449.9" y="337" width="20.2" height="10.5" fill="#000"/><text x="460.0" y="346.0" text-anchor="middle">40E</text><rect x="538.9" y="1.2" width="20.2" height="10.5" fill="#000"/><text x="549.0" y="10.2" text-anchor="middle">60E</text><rect x="538.9" y="337" width="20.2" height="10.5" fill="#000"/><text x="549.0" y="346.0" text-anchor="middle">60E</text><rect x="627.9" y="1.2" width="20.2" height="10.5" fill="#000"/><text x="638.0" y="10.2" text-anchor="middle">80E</text><rect x="627.9" y="337" width="20.2" height="10.5" fill="#000"/><text x="638.0" y="346.0" text-anchor="middle">80E</text><rect x="714.0" y="1.2" width="26.0" height="10.5" fill="#000"/><text x="727.0" y="10.2" text-anchor="middle">100E</text><rect x="714.0" y="337" width="26.0" height="10.5" fill="#000"/><text x="727.0" y="346.0" text-anchor="middle">100E</text><rect x="0" y="27.8" width="20.8" height="10.5" fill="#000"/><text x="0.8" y="36.8">60N</text><rect x="780.2" y="27.8" width="20.8" height="10.5" fill="#000"/><text x="800.2" y="36.8" text-anchor="end">60N</text><rect x="0" y="169.1" width="20.8" height="10.5" fill="#000"/><text x="0.8" y="178.1">40N</text><rect x="780.2" y="169.1" width="20.8" height="10.5" fill="#000"/><text x="800.2" y="178.1" text-anchor="end">40N</text><rect x="0" y="272.7" width="20.8" height="10.5" fill="#000"/><text x="0.8" y="281.7">20N</text><rect x="780.2" y="272.7" width="20.8" height="10.5" fill="#000"/><text x="800.2" y="281.7" text-anchor="end">20N</text></g>
</svg>
<!-- leaflet controls -->
<div class="a" style="left:131px;top:11px;width:25px;height:71px;background:#fff;border-radius:3px;box-shadow:0 0 0 1px rgba(0,0,0,.25)"></div>
<div class="a" style="left:131px;top:34px;width:25px;height:1px;background:#ccc"></div>
<div class="a" style="left:131px;top:57px;width:25px;height:1px;background:#ccc"></div>
<div class="a" style="left:131px;top:12px;width:25px;text-align:center;font:bold 17px/20px 'Liberation Sans',sans-serif;color:#111">+</div>
<div class="a" style="left:131px;top:36px;width:25px;text-align:center;font:bold 13px/20px 'Liberation Sans',sans-serif;color:#111">2</div>
<div class="a" style="left:137px;top:69px;width:12px;height:2px;background:#222"></div>
<div class="a" style="left:131px;top:274px;width:25px;height:26px;background:#fff;border-radius:3px;box-shadow:0 0 0 1px rgba(0,0,0,.25)">
 <svg width="25" height="26" viewBox="0 0 25 26"><g fill="none" stroke="#333" stroke-width="1.3"><path d="M4 20 A10 10 0 0 1 20 7 Z"/><path d="M7 18 A6 6 0 0 1 16 10 Z"/><path d="M10 21 L21 21"/><path d="M13 21 L13 18 L16 21"/></g></svg>
</div>
<div class="a" style="left:126px;top:308px;width:51px;height:13px;border:2px solid #777;border-top:none;background:rgba(255,255,255,.75);font-size:8.4px;line-height:11px;color:#333;padding-left:5px">1000 km</div>
<div class="a" style="left:126px;top:321px;width:42px;height:12px;border:2px solid #777;border-bottom:none;background:rgba(255,255,255,.75);font-size:8.4px;line-height:11px;color:#333;padding-left:5px">500 mi</div>
<div class="a" style="left:122px;top:337px;width:158px;height:13px;background:rgba(255,255,255,.72);font-size:8.6px;line-height:13px;color:#333;padding-left:4px;white-space:nowrap;overflow:hidden"><span style="color:#0078a8">Leaflet</span> | <span style="color:#0078a8">© OpenStreetMap contributors</span></div>
<!-- markers -->
<div class="a" style="left:371px;top:84.0px;width:0;height:0;border-top:5px solid transparent;border-bottom:5px solid transparent;border-right:6px solid #fff"></div>
<div class="a mk" style="left:376px;top:81px;width:41px;height:16px;line-height:16px;background:#ffff33;color:#111">EI5IN 21</div>
<div class="a" style="left:497px;top:93.25px;width:0;height:0;border-top:5px solid transparent;border-bottom:5px solid transparent;border-right:6px solid #fff"></div>
<div class="a mk" style="left:502px;top:90.5px;width:48px;height:15.5px;line-height:15.5px;background:#ffff33;color:#111">KO02lg 21</div>
<div class="a" style="left:396.5px;top:188.5px;width:0;height:0;border-top:5px solid transparent;border-bottom:5px solid transparent;border-right:6px solid #fff"></div>
<div class="a mk" style="left:401.5px;top:185.5px;width:45px;height:16px;line-height:16px;background:#ffff33;color:#111">EA2AT 16</div>
<div class="a" style="left:549.5px;top:200.25px;width:0;height:0;border-top:5px solid transparent;border-bottom:5px solid transparent;border-right:6px solid #fff"></div>
<div class="a mk" style="left:554.5px;top:197.5px;width:51.5px;height:15.5px;line-height:15.5px;background:#ffff33;color:#111">KM65kb 13</div>
<div class="a" style="left:857px;top:310.5px;width:0;height:0;border-top:5px solid transparent;border-bottom:5px solid transparent;border-right:6px solid #fff"></div>
<div class="a mk" style="left:862px;top:308px;width:51px;height:15px;line-height:15px;background:#ffff33;color:#111">OK12ao 20</div>
<div class="a" style="left:837px;top:339.5px;width:52px;height:10.5px;overflow:hidden"><div class="mk" style="height:16px;line-height:17px;background:#33ee33;color:#111;font-size:11px;letter-spacing:-0.2px">5.50, 96.50</div></div>
<div class="a" style="left:832px;top:342px;width:0;height:0;border-top:5px solid transparent;border-bottom:5px solid transparent;border-right:6px solid #fff"></div>
<!-- right panel -->
<div class="a" style="left:1042px;top:24px;font:bold 15px/15px 'Liberation Sans',sans-serif;color:#b4b4b4;letter-spacing:1.6px">18:45</div>
<div class="a" style="left:1094px;top:27px;font:10.8px/12px 'Liberation Sans',sans-serif;color:#b4b4b4">UTC</div>
<div class="a" style="left:1042px;top:43px;font:bold 15px/15px 'Liberation Sans',sans-serif;color:#b4b4b4;letter-spacing:1.6px">20:45</div>
<div class="a" style="left:1094px;top:46px;font:10.8px/12px 'Liberation Sans',sans-serif;color:#b4b4b4">Local</div>
<div class="a" style="left:1042px;top:61px;font:8.9px/11px 'Liberation Sans',sans-serif;color:#8c8c8c;letter-spacing:0.1px">Asia/Nicosia (EET)</div>
<div class="a" style="left:972px;top:81px;font:bold 13.5px/14px 'Liberation Sans',sans-serif;color:#1fe0ee">TDoA options</div>
<div class="a cb cbg" style="left:972px;top:97.7px"></div><div class="a rp" style="left:989px;top:96.5px">Show heatmap</div>
<div class="a cb cbg" style="left:972px;top:112.8px"></div><div class="a rp" style="left:989px;top:111.6px">Show day/night</div>
<div class="a cb cbg" style="left:972px;top:127.8px"></div><div class="a rp" style="left:989px;top:126.6px">Show graticule</div>
<div class="a cb" style="left:972px;top:144.2px"></div><div class="a rp" style="left:989px;top:143px">Show all results</div>
<div class="a cb" style="left:972px;top:159.9px"></div><div class="a rp" style="left:989px;top:158.7px">Show "TDoA map with hosts"</div>
<div class="a cb cbg" style="left:972px;top:188.0px"></div><div class="a rp" style="left:989px;top:186.8px">Kiwi hosts (400)</div>
<div class="a cb" style="left:972px;top:203.7px"></div><div class="a rp" style="left:989px;top:202.5px">Reference locations</div>
<div class="a cbs" style="left:991px;top:219.8px"></div><div class="a rp" style="left:1008px;top:218.0px">VLF/LF</div>
<div class="a cbs" style="left:991px;top:235.0px"></div><div class="a rp" style="left:1008px;top:233.2px">Milcom</div>
<div class="a cbs" style="left:991px;top:250.2px"></div><div class="a rp" style="left:1008px;top:248.4px">Radar</div>
<div class="a cbs" style="left:991px;top:265.4px"></div><div class="a rp" style="left:1008px;top:263.6px">Aero</div>
<div class="a cbs" style="left:991px;top:280.6px"></div><div class="a rp" style="left:1008px;top:278.8px">Marine</div>
<div class="a cbs" style="left:991px;top:295.8px"></div><div class="a rp" style="left:1008px;top:294.0px">Broadcast</div>
<div class="a cbs" style="left:991px;top:311.0px"></div><div class="a rp" style="left:1008px;top:309.2px">Utility</div>
<div class="a cbs" style="left:991px;top:326.2px"></div><div class="a rp" style="left:1008px;top:324.4px">Time/Freq</div>
<div class="a" style="left:1095px;top:142px;width:47px;height:15px;background:#9a9a9a;border-radius:5px;color:#e6e6e6;font-size:10px;line-height:15px;text-align:center">Clear old</div>
<div class="a rp" style="left:1098px;top:187px">&gt;</div>
<div class="a" style="left:1111px;top:185px;width:33px;height:16px;background:#fff;color:#000;font-size:13.5px;line-height:16px;padding-left:1px">12</div>
<div class="a rp" style="left:1148px;top:187px">SNR</div>
<!-- lower area -->
<div class="a" style="left:4px;top:350px;width:1194px;height:86px;background:#fff"></div>
<div class="a" style="left:521px;top:373px;width:677px;height:63px;background:#f3f3f3"></div>
<div class="a" style="left:4px;top:436px;width:1194px;height:37px;background:linear-gradient(#464646,#6a6a6a 55%,#8c8c8c)"></div>
<div class="a mt" style="left:501.0px"></div>
<div class="a mt" style="left:521.1px"></div>
<div class="a mt" style="left:541.2px"></div>
<div class="a mt" style="left:561.4px"></div>
<div class="a" style="left:581.0px;top:452px;width:2px;height:10px;background:#fff"></div>
<div class="a mt" style="left:601.6px"></div>
<div class="a mt" style="left:621.8px"></div>
<div class="a mt" style="left:641.9px"></div>
<div class="a mt" style="left:662.0px"></div>
<div class="a" style="left:681.6px;top:452px;width:2px;height:10px;background:#fff"></div>
<div class="a mt" style="left:702.3px"></div>
<div class="a mt" style="left:722.4px"></div>
<div class="a mt" style="left:742.5px"></div>
<div class="a mt" style="left:762.7px"></div>
<div class="a" style="left:782.3px;top:452px;width:2px;height:10px;background:#fff"></div>
<div class="a mt" style="left:802.9px"></div>
<div class="a mt" style="left:823.1px"></div>
<div class="a mt" style="left:843.2px"></div>
<div class="a mt" style="left:863.3px"></div>
<div class="a" style="left:883.0px;top:452px;width:2px;height:10px;background:#fff"></div>
<div class="a mt" style="left:903.6px"></div>
<div class="a mt" style="left:923.7px"></div>
<div class="a mt" style="left:943.8px"></div>
<div class="a mt" style="left:964.0px"></div>
<div class="a fl" style="left:558px;top:461px;width:48px;text-align:center">7.905 MHz</div>
<div class="a fl" style="left:659px;top:461px;width:48px;text-align:center">7.910 MHz</div>
<div class="a fl" style="left:759.5px;top:461px;width:48px;text-align:center">7.915 MHz</div>
<div class="a fl" style="left:860px;top:461px;width:48px;text-align:center">7.920 MHz</div>
<div class="a fl" style="left:457.5px;top:461px;width:48px;text-align:center">7.900 MHz</div>
<div class="a fl" style="left:960.5px;top:461px;width:48px;text-align:center">7.925 MHz</div>
<div class="a fl" style="left:1061px;top:461px;width:48px;text-align:center">7.930 MHz</div>
<div class="a fl" style="left:1161.5px;top:461px;width:48px;text-align:center">7.935 MHz</div>
<svg class="a" style="left:676px;top:436px" width="80" height="20"><path d="M12.8 4 L62 4 L66 12.8 L68.6 14 L12 14 Z" fill="rgba(30,150,30,.5)"/><path d="M6.8 4 L6.8 14.6 L12.8 4 L62 4 L66 12.8 L68.6 14" fill="none" stroke="#22ee22" stroke-width="2.6" stroke-linejoin="round"/></svg>
<div class="a" style="left:4px;top:473px;width:1182px;height:102px;overflow:hidden;border-radius:0 0 0 6px"><svg width="1182" height="102">
<defs>
<filter id="wf" x="591" y="0" width="175" height="102" filterUnits="userSpaceOnUse" color-interpolation-filters="sRGB">
<feTurbulence type="fractalNoise" baseFrequency="0.5 0.7" numOctaves="2" seed="4" result="n1"/>
<feTurbulence type="fractalNoise" baseFrequency="0.05 0.12" numOctaves="3" seed="12" result="n2"/>
<feColorMatrix in="n1" type="matrix" values="1 0 0 0 0  1 0 0 0 0  1 0 0 0 0  0 0 0 0 1" result="g1"/>
<feColorMatrix in="n2" type="matrix" values="1 0 0 0 0  1 0 0 0 0  1 0 0 0 0  0 0 0 0 1" result="g2"/>
<feComposite in="g1" in2="g2" operator="arithmetic" k1="0" k2="0.5" k3="0.5" k4="0" result="gn"/>
<feComposite in="SourceGraphic" in2="gn" operator="arithmetic" k1="0" k2="1" k3="0.9" k4="-0.45" result="sum"/>
<feComponentTransfer in="sum"><feFuncR type="table" tableValues="0 0 0 0 0 0.45 1 1 1"/><feFuncG type="table" tableValues="0 0 0.05 0.55 0.95 1 0.95 0.45 0"/><feFuncB type="table" tableValues="0.12 0.55 1 1 0.55 0.15 0 0 0"/><feFuncA type="discrete" tableValues="1"/></feComponentTransfer>
</filter>
<filter id="wfb" x="0" y="0" width="1182" height="102" filterUnits="userSpaceOnUse" color-interpolation-filters="sRGB">
<feTurbulence type="fractalNoise" baseFrequency="0.38 0.5" numOctaves="2" seed="4" result="n1"/>
<feTurbulence type="fractalNoise" baseFrequency="0.05 0.12" numOctaves="3" seed="12" result="n2"/>
<feColorMatrix in="n1" type="matrix" values="1 0 0 0 0  1 0 0 0 0  1 0 0 0 0  0 0 0 0 1" result="g1"/>
<feColorMatrix in="n2" type="matrix" values="1 0 0 0 0  1 0 0 0 0  1 0 0 0 0  0 0 0 0 1" result="g2"/>
<feComposite in="g1" in2="g2" operator="arithmetic" k1="0" k2="1" k3="0" k4="0" result="gn"/>
<feComposite in="SourceGraphic" in2="gn" operator="arithmetic" k1="0" k2="1" k3="0.6" k4="-0.3" result="sum"/>
<feComponentTransfer in="sum"><feFuncR type="table" tableValues="0 0 0 0 0 0.45 1 1 1"/><feFuncG type="table" tableValues="0 0 0.05 0.55 0.95 1 0.95 0.45 0"/><feFuncB type="table" tableValues="0.12 0.55 1 1 0.55 0.15 0 0 0"/><feFuncA type="discrete" tableValues="1"/></feComponentTransfer>
</filter>
<radialGradient id="pk"><stop offset="0" stop-color="#000" stop-opacity="0.6"/><stop offset="1" stop-color="#000" stop-opacity="0"/></radialGradient>
<linearGradient id="sL" x1="0" y1="0" x2="0" y2="1"><stop offset="0" stop-color="rgb(102,102,102)"/><stop offset="0.5" stop-color="rgb(112,112,112)"/><stop offset="1" stop-color="rgb(133,133,133)"/></linearGradient>
<linearGradient id="sR" x1="0" y1="0" x2="0" y2="1"><stop offset="0" stop-color="rgb(94,94,94)"/><stop offset="1" stop-color="rgb(92,92,92)"/></linearGradient>
<linearGradient id="edgeL" x1="0" x2="1"><stop offset="0" stop-color="rgb(41,41,41)"/><stop offset="1" stop-color="rgb(115,115,115)"/></linearGradient>
<linearGradient id="edgeR" x1="0" x2="1"><stop offset="0" stop-color="rgb(107,107,107)"/><stop offset="1" stop-color="rgb(41,41,41)"/></linearGradient>
</defs>
<g filter="url(#wfb)">
<rect width="1182" height="102" fill="rgb(26,26,26)"/>
<rect x="541" y="0" width="46" height="102" fill="rgb(46,46,46)"/>
<rect x="776" y="0" width="2" height="102" fill="rgb(107,107,107)"/>
<rect x="1173" y="0" width="9" height="102" fill="rgb(76,76,76)"/>
</g>
<g filter="url(#wf)">
<rect x="591" y="0" width="10" height="102" fill="url(#edgeL)"/>
<rect x="601" y="0" width="78" height="102" fill="url(#sL)"/>
<rect x="679" y="0" width="77" height="102" fill="url(#sR)"/>
<rect x="756" y="0" width="10" height="102" fill="url(#edgeR)"/>
<ellipse cx="658" cy="25" rx="12" ry="18" fill="url(#pk)"/><ellipse cx="702" cy="38" rx="12" ry="12" fill="url(#pk)"/><ellipse cx="735" cy="62" rx="10" ry="16" fill="url(#pk)"/><ellipse cx="640" cy="58" rx="8" ry="12" fill="url(#pk)"/><ellipse cx="715" cy="88" rx="12" ry="10" fill="url(#pk)"/><ellipse cx="625" cy="15" rx="10" ry="10" fill="url(#pk)"/><ellipse cx="748" cy="20" rx="8" ry="12" fill="url(#pk)"/><rect x="744" y="24.2" width="14" height="1.3" fill="rgb(133,133,133)"/><rect x="636" y="10.3" width="45" height="1.3" fill="rgb(133,133,133)"/><rect x="668" y="64.9" width="26" height="1.3" fill="rgb(140,140,140)"/><rect x="724" y="20.8" width="13" height="1.3" fill="rgb(120,120,120)"/><rect x="639" y="4.0" width="24" height="1.3" fill="rgb(150,150,150)"/><rect x="615" y="39.1" width="19" height="1.3" fill="rgb(153,153,153)"/><rect x="692" y="8.2" width="23" height="1.3" fill="rgb(133,133,133)"/><rect x="703" y="35.2" width="27" height="1.3" fill="rgb(130,130,130)"/><rect x="686" y="90.3" width="15" height="1.3" fill="rgb(117,117,117)"/><rect x="672" y="94.7" width="17" height="1.3" fill="rgb(150,150,150)"/><rect x="709" y="58.7" width="41" height="1.3" fill="rgb(122,122,122)"/><rect x="731" y="37.0" width="15" height="1.3" fill="rgb(135,135,135)"/><rect x="703" y="11.6" width="35" height="1.3" fill="rgb(138,138,138)"/><rect x="675" y="84.7" width="17" height="1.3" fill="rgb(133,133,133)"/><rect x="675" y="53.8" width="12" height="1.3" fill="rgb(150,150,150)"/><rect x="705" y="51.7" width="18" height="1.3" fill="rgb(120,120,120)"/><rect x="650" y="3.2" width="19" height="1.3" fill="rgb(138,138,138)"/><rect x="725" y="38.9" width="41" height="1.3" fill="rgb(120,120,120)"/><rect x="623" y="40.8" width="33" height="1.3" fill="rgb(153,153,153)"/><rect x="715" y="21.8" width="21" height="1.3" fill="rgb(115,115,115)"/><rect x="650" y="76.9" width="16" height="1.3" fill="rgb(138,138,138)"/><rect x="660" y="24.7" width="26" height="1.3" fill="rgb(138,138,138)"/><rect x="642" y="59.7" width="13" height="1.3" fill="rgb(130,130,130)"/><rect x="677" y="12.4" width="23" height="1.3" fill="rgb(148,148,148)"/><rect x="706" y="51.5" width="44" height="1.3" fill="rgb(117,117,117)"/><rect x="619" y="3.7" width="24" height="1.3" fill="rgb(143,143,143)"/><rect x="651" y="74.9" width="44" height="1.3" fill="rgb(128,128,128)"/><rect x="630" y="83.9" width="41" height="1.3" fill="rgb(128,128,128)"/><rect x="713" y="96.6" width="45" height="1.3" fill="rgb(130,130,130)"/><rect x="745" y="19.4" width="25" height="1.3" fill="rgb(117,117,117)"/><rect x="674" y="61.3" width="27" height="1.3" fill="rgb(133,133,133)"/><rect x="686" y="14.0" width="26" height="1.3" fill="rgb(117,117,117)"/><rect x="708" y="45.1" width="35" height="1.3" fill="rgb(128,128,128)"/><rect x="653" y="40.6" width="18" height="1.3" fill="rgb(133,133,133)"/><rect x="614" y="45.7" width="35" height="1.3" fill="rgb(145,145,145)"/><rect x="601" y="61.9" width="23" height="1.3" fill="rgb(138,138,138)"/><rect x="745" y="11.1" width="36" height="1.3" fill="rgb(128,128,128)"/><rect x="629" y="71.1" width="18" height="1.3" fill="rgb(140,140,140)"/><rect x="696" y="74.9" width="10" height="1.3" fill="rgb(130,130,130)"/><rect x="711" y="91.1" width="42" height="1.3" fill="rgb(140,140,140)"/><rect x="617" y="65" width="4.9" height="2" fill="rgb(178,178,178)"/><rect x="628" y="97" width="3.5" height="2" fill="rgb(189,189,189)"/><rect x="648" y="98" width="2.9" height="2" fill="rgb(186,186,186)"/><rect x="664" y="60" width="4.9" height="2" fill="rgb(171,171,171)"/><rect x="664" y="66" width="3.8" height="2" fill="rgb(168,168,168)"/><rect x="664" y="84" width="4.2" height="2" fill="rgb(191,191,191)"/><rect x="662" y="80" width="3.3" height="2" fill="rgb(171,171,171)"/><rect x="637" y="76" width="2.8" height="2" fill="rgb(189,189,189)"/><rect x="605" y="87" width="3.3" height="2" fill="rgb(168,168,168)"/><rect x="609" y="91" width="2.9" height="2" fill="rgb(168,168,168)"/><rect x="661" y="75" width="4.7" height="2" fill="rgb(168,168,168)"/><rect x="631" y="68" width="4.4" height="2" fill="rgb(194,194,194)"/><rect x="657" y="62" width="3.8" height="2" fill="rgb(186,186,186)"/><rect x="663" y="68" width="4.4" height="2" fill="rgb(186,186,186)"/><rect x="629" y="83" width="5.0" height="2" fill="rgb(186,186,186)"/><rect x="670" y="89" width="3.8" height="2" fill="rgb(163,163,163)"/><rect x="652" y="54" width="4.6" height="2" fill="rgb(173,173,173)"/><rect x="669" y="96" width="3.8" height="2" fill="rgb(161,161,161)"/><rect x="666" y="83" width="2.1" height="2" fill="rgb(168,168,168)"/><rect x="670" y="93" width="3.1" height="2" fill="rgb(181,181,181)"/><rect x="663" y="91" width="3.8" height="2" fill="rgb(184,184,184)"/><rect x="624" y="65" width="3.0" height="2" fill="rgb(171,171,171)"/><rect x="640" y="56" width="3.0" height="2" fill="rgb(184,184,184)"/><rect x="612" y="63" width="3.3" height="2" fill="rgb(171,171,171)"/><rect x="659" y="55" width="2.9" height="2" fill="rgb(166,166,166)"/><rect x="613" y="87" width="2.2" height="2" fill="rgb(163,163,163)"/><rect x="642" y="87" width="3.7" height="2" fill="rgb(189,189,189)"/><rect x="625" y="94" width="3.4" height="2" fill="rgb(184,184,184)"/><rect x="643" y="97" width="4.8" height="2" fill="rgb(194,194,194)"/><rect x="610" y="66" width="2.5" height="2" fill="rgb(173,173,173)"/><rect x="658" y="53" width="3.8" height="2" fill="rgb(189,189,189)"/><rect x="647" y="71" width="3.7" height="2" fill="rgb(191,191,191)"/><rect x="668" y="96" width="5.0" height="2" fill="rgb(184,184,184)"/><rect x="637" y="68" width="3.6" height="2" fill="rgb(189,189,189)"/><rect x="623" y="84" width="2.4" height="2" fill="rgb(176,176,176)"/>
<rect x="677.5" y="0" width="3" height="102" fill="rgb(230,230,230)"/>
</g>
</svg></div>
<div class="a" style="left:1186px;top:473px;width:12px;height:102px;background:#fff;border-radius:0 0 4px 4px"></div>
<div class="a" style="left:1189px;top:488px;width:7px;height:16px;background:#999;border-radius:4px"></div>
<div class="a" style="left:1188px;top:478px;width:0;height:0;border-left:4px solid transparent;border-right:4px solid transparent;border-bottom:5px solid #777"></div>
<div class="a" style="left:1188px;top:564px;width:0;height:0;border-left:4px solid transparent;border-right:4px solid transparent;border-top:5px solid #777"></div>
<!-- band labels -->
<div class="a" style="left:632px;top:394px;width:1px;height:42px;background:#444"></div>
<div class="a" style="left:658px;top:421px;width:2px;height:15px;background:#333"></div>
<div class="a" style="left:624px;top:377px;width:42px;height:17px;background:#c8e600;border:1px solid #6a7a00;border-radius:3px;font-size:9.3px;line-height:15px;text-align:center;color:#222;letter-spacing:-0.2px">VOLMET</div>
<div class="a" style="left:650px;top:405px;width:45px;height:17px;background:#9ff0ff;border:1px solid #4a8a99;border-right:3px solid #111;border-radius:3px;font-size:9.1px;line-height:15px;text-align:center;color:#222;white-space:nowrap;letter-spacing:-0.1px;padding-right:1px">FAX RUS</div>
<!-- purple icon -->
<div class="a" style="left:4px;top:343px;width:26px;height:28px;background:#8f2ce8;border-radius:0 6px 0 0">
 <svg width="26" height="28" viewBox="0 0 26 28"><circle cx="11" cy="12.5" r="8" fill="none" stroke="#f3c6ff" stroke-width="2"/><path d="M9 8.5 L15 12.5 L9 16.5 Z" fill="#fff"/></svg>
</div>
<!-- TDoA panel -->
<div class="a" style="left:12px;top:355px;width:507px;height:212px;background:#575757;border-radius:10px"></div>
<div class="a" style="left:18.5px;top:369px;font:bold 13.7px/16px 'Liberation Sans',sans-serif;white-space:nowrap"><span style="color:#a9d0ff;text-decoration:underline">TDoA</span><span style="color:#22e2ee"> direction finding service</span></div>
<div class="a" style="left:257px;top:364px;font:11px/13px 'Liberation Sans',sans-serif;color:#cfcfcf;white-space:nowrap">map center: 40.22, 26.68 z3<br>most likely: 5.50, 96.50</div>
<svg class="a" style="left:375px;top:375px" width="11" height="15"><path d="M5.5 14 C2 9 1 7 1 5 A4.5 4.5 0 0 1 10 5 C10 7 9 9 5.5 14 Z" fill="#22d0ee"/><circle cx="5.5" cy="5" r="1.8" fill="#575757"/></svg>
<div class="a" style="left:432px;top:371px;width:11px;height:11px;background:#22dd22"><svg width="11" height="11"><path d="M2.5 8.5 L8 3 M4.5 3 L8 3 L8 6.5" stroke="#114411" stroke-width="1.4" fill="none"/></svg></div>
<div class="a" style="left:456px;top:364px;width:32px;height:17.5px;background:#4caf50;border-radius:5px;color:#eee;font-size:10.8px;line-height:17px;text-align:center">help</div>
<svg class="a" style="left:492px;top:363px" width="21" height="21"><circle cx="10.5" cy="10.2" r="9" fill="none" stroke="#e8e8e8" stroke-width="1.6"/><path d="M6.5 6.2 L14.5 14.2 M14.5 6.2 L6.5 14.2" stroke="#e8e8e8" stroke-width="1.6"/></svg>
<div class="a inp" style="left:18.7px;top:396.7px;width:81.5px">OK12ao</div>
<div class="a inp" style="left:102.6px;top:396.7px;width:190px">thamai.proxy.kiwisdr.com</div>
<svg class="a" style="left:296px;top:397.7px" width="17" height="15"><g stroke="#dd2525" stroke-width="2.8" fill="none"><circle cx="3.6" cy="3.8" r="2"/><circle cx="3.6" cy="11.2" r="2"/><path d="M5.5 5.2 L16 12.8 M5.5 9.8 L16 2.2"/></g></svg>
<svg class="a" style="left:317px;top:397.2px" width="17" height="16"><path d="M0.8 5 L4 5 L8.5 1.2 L8.5 14.8 L4 11 L0.8 11 Z" fill="#22e022"/><path d="M10 5.5 Q11.3 8 10 10.5 M11.8 3.5 Q14.3 8 11.8 12.5 M13.6 1.5 Q17.2 8 13.6 14.5" stroke="#22e022" stroke-width="1.3" fill="none"/></svg>
<div class="a" style="left:338.7px;top:400.2px;width:10px;height:10px;background:#1b8a1b"><svg width="10" height="10"><path d="M2.2 5.2 L4.2 7.2 L7.8 2.8" stroke="#fff" stroke-width="1.6" fill="none"/></svg></div>
<svg class="a" style="left:355px;top:397.2px" width="15" height="15"><path d="M5.3 0.5 L9.7 0.5 L9.7 5.5 L12.8 5.5 L7.5 10.8 L2.2 5.5 L5.3 5.5 Z" fill="#25dcee"/><path d="M0.5 10 L4 10 L7.5 13 L11 10 L14.5 10 L14.5 14.5 L0.5 14.5 Z" fill="#25dcee"/></svg>
<div class="a samp" style="left:374.6px;top:398.2px">sampling complete</div>
<div class="a inp" style="left:18.7px;top:416.2px;width:81.5px">KM65kb</div>
<div class="a inp" style="left:102.6px;top:416.2px;width:190px">sdr.cyhams.org:80</div>
<svg class="a" style="left:296px;top:417.2px" width="17" height="15"><g stroke="#dd2525" stroke-width="2.8" fill="none"><circle cx="3.6" cy="3.8" r="2"/><circle cx="3.6" cy="11.2" r="2"/><path d="M5.5 5.2 L16 12.8 M5.5 9.8 L16 2.2"/></g></svg>
<svg class="a" style="left:317px;top:416.8px" width="17" height="16"><path d="M0.8 5 L4 5 L8.5 1.2 L8.5 14.8 L4 11 L0.8 11 Z" fill="#22e022"/><path d="M10 5.5 Q11.3 8 10 10.5 M11.8 3.5 Q14.3 8 11.8 12.5 M13.6 1.5 Q17.2 8 13.6 14.5" stroke="#22e022" stroke-width="1.3" fill="none"/></svg>
<div class="a" style="left:338.7px;top:419.8px;width:10px;height:10px;background:#1b8a1b"><svg width="10" height="10"><path d="M2.2 5.2 L4.2 7.2 L7.8 2.8" stroke="#fff" stroke-width="1.6" fill="none"/></svg></div>
<svg class="a" style="left:355px;top:416.8px" width="15" height="15"><path d="M5.3 0.5 L9.7 0.5 L9.7 5.5 L12.8 5.5 L7.5 10.8 L2.2 5.5 L5.3 5.5 Z" fill="#25dcee"/><path d="M0.5 10 L4 10 L7.5 13 L11 10 L14.5 10 L14.5 14.5 L0.5 14.5 Z" fill="#25dcee"/></svg>
<div class="a samp" style="left:374.6px;top:417.8px">sampling complete</div>
<div class="a inp" style="left:18.7px;top:435.8px;width:81.5px">KO02lg</div>
<div class="a inp" style="left:102.6px;top:435.8px;width:190px">warszawa.proxy.kiwisdr.com</div>
<svg class="a" style="left:296px;top:436.8px" width="17" height="15"><g stroke="#dd2525" stroke-width="2.8" fill="none"><circle cx="3.6" cy="3.8" r="2"/><circle cx="3.6" cy="11.2" r="2"/><path d="M5.5 5.2 L16 12.8 M5.5 9.8 L16 2.2"/></g></svg>
<svg class="a" style="left:317px;top:436.3px" width="17" height="16"><path d="M0.8 5 L4 5 L8.5 1.2 L8.5 14.8 L4 11 L0.8 11 Z" fill="#22e022"/><path d="M10 5.5 Q11.3 8 10 10.5 M11.8 3.5 Q14.3 8 11.8 12.5 M13.6 1.5 Q17.2 8 13.6 14.5" stroke="#22e022" stroke-width="1.3" fill="none"/></svg>
<div class="a" style="left:338.7px;top:439.3px;width:10px;height:10px;background:#1b8a1b"><svg width="10" height="10"><path d="M2.2 5.2 L4.2 7.2 L7.8 2.8" stroke="#fff" stroke-width="1.6" fill="none"/></svg></div>
<svg class="a" style="left:355px;top:436.3px" width="15" height="15"><path d="M5.3 0.5 L9.7 0.5 L9.7 5.5 L12.8 5.5 L7.5 10.8 L2.2 5.5 L5.3 5.5 Z" fill="#25dcee"/><path d="M0.5 10 L4 10 L7.5 13 L11 10 L14.5 10 L14.5 14.5 L0.5 14.5 Z" fill="#25dcee"/></svg>
<div class="a samp" style="left:374.6px;top:437.3px">sampling complete</div>
<div class="a inp" style="left:18.7px;top:455.4px;width:81.5px">EI5IN</div>
<div class="a inp" style="left:102.6px;top:455.4px;width:190px">44.31.191.63:8073</div>
<svg class="a" style="left:296px;top:456.4px" width="17" height="15"><g stroke="#dd2525" stroke-width="2.8" fill="none"><circle cx="3.6" cy="3.8" r="2"/><circle cx="3.6" cy="11.2" r="2"/><path d="M5.5 5.2 L16 12.8 M5.5 9.8 L16 2.2"/></g></svg>
<svg class="a" style="left:317px;top:455.9px" width="17" height="16"><path d="M0.8 5 L4 5 L8.5 1.2 L8.5 14.8 L4 11 L0.8 11 Z" fill="#22e022"/><path d="M10 5.5 Q11.3 8 10 10.5 M11.8 3.5 Q14.3 8 11.8 12.5 M13.6 1.5 Q17.2 8 13.6 14.5" stroke="#22e022" stroke-width="1.3" fill="none"/></svg>
<div class="a" style="left:338.7px;top:458.9px;width:10px;height:10px;background:#1b8a1b"><svg width="10" height="10"><path d="M2.2 5.2 L4.2 7.2 L7.8 2.8" stroke="#fff" stroke-width="1.6" fill="none"/></svg></div>
<svg class="a" style="left:355px;top:455.9px" width="15" height="15"><path d="M5.3 0.5 L9.7 0.5 L9.7 5.5 L12.8 5.5 L7.5 10.8 L2.2 5.5 L5.3 5.5 Z" fill="#25dcee"/><path d="M0.5 10 L4 10 L7.5 13 L11 10 L14.5 10 L14.5 14.5 L0.5 14.5 Z" fill="#25dcee"/></svg>
<div class="a samp" style="left:374.6px;top:456.9px">sampling complete</div>
<div class="a inp" style="left:18.7px;top:474.9px;width:81.5px">EA2AT</div>
<div class="a inp" style="left:102.6px;top:474.9px;width:190px">kiwisdrmojacar.ham-radio-op.net:80</div>
<svg class="a" style="left:296px;top:475.9px" width="17" height="15"><g stroke="#dd2525" stroke-width="2.8" fill="none"><circle cx="3.6" cy="3.8" r="2"/><circle cx="3.6" cy="11.2" r="2"/><path d="M5.5 5.2 L16 12.8 M5.5 9.8 L16 2.2"/></g></svg>
<svg class="a" style="left:317px;top:475.4px" width="17" height="16"><path d="M0.8 5 L4 5 L8.5 1.2 L8.5 14.8 L4 11 L0.8 11 Z" fill="#22e022"/><path d="M10 5.5 Q11.3 8 10 10.5 M11.8 3.5 Q14.3 8 11.8 12.5 M13.6 1.5 Q17.2 8 13.6 14.5" stroke="#22e022" stroke-width="1.3" fill="none"/></svg>
<div class="a" style="left:338.7px;top:478.4px;width:10px;height:10px;background:#1b8a1b"><svg width="10" height="10"><path d="M2.2 5.2 L4.2 7.2 L7.8 2.8" stroke="#fff" stroke-width="1.6" fill="none"/></svg></div>
<svg class="a" style="left:355px;top:475.4px" width="15" height="15"><path d="M5.3 0.5 L9.7 0.5 L9.7 5.5 L12.8 5.5 L7.5 10.8 L2.2 5.5 L5.3 5.5 Z" fill="#25dcee"/><path d="M0.5 10 L4 10 L7.5 13 L11 10 L14.5 10 L14.5 14.5 L0.5 14.5 Z" fill="#25dcee"/></svg>
<div class="a samp" style="left:374.6px;top:476.4px">sampling complete</div>
<div class="a inp" style="left:18.7px;top:494.4px;width:81.5px"></div>
<div class="a inp" style="left:102.6px;top:494.4px;width:190px"></div>
<svg class="a" style="left:296px;top:495.4px" width="17" height="15"><g stroke="#dd2525" stroke-width="2.8" fill="none"><circle cx="3.6" cy="3.8" r="2"/><circle cx="3.6" cy="11.2" r="2"/><path d="M5.5 5.2 L16 12.8 M5.5 9.8 L16 2.2"/></g></svg>
<div class="a" style="left:18.7px;top:519.2px;width:45px;height:17.5px;background:#f2f200;border-radius:4px;box-shadow:0 0 0 1px #b8b800 inset;color:#222;font-size:11.5px;line-height:17.5px;text-align:center">Submit</div>
<svg class="a" style="left:75px;top:520px" width="16" height="16"><circle cx="7.8" cy="7.5" r="7.3" fill="#22dd22"/><path d="M4.2 7.6 L6.8 10.2 L11.4 5.2" stroke="#113311" stroke-width="1.8" fill="none"/></svg>
<div class="a sel" style="left:102px;top:520.6px;width:126px;height:14px">TDoA map with hosts<i></i></div>
<div class="a samp" style="left:254.5px;top:521px;font-size:10.9px">TDoA complete</div>
<svg class="a" style="left:341.5px;top:518px" width="15" height="15"><path d="M5.3 0.5 L9.7 0.5 L9.7 5.5 L12.8 5.5 L7.5 10.8 L2.2 5.5 L5.3 5.5 Z" fill="#25dcee"/><path d="M0.5 10 L4 10 L7.5 13 L11 10 L14.5 10 L14.5 14.5 L0.5 14.5 Z" fill="#25dcee"/></svg>
<div class="a samp" style="left:359px;top:521px;font-size:10.2px">KML</div>
<svg class="a" style="left:391.7px;top:518px" width="15" height="15"><path d="M5.3 0.5 L9.7 0.5 L9.7 5.5 L12.8 5.5 L7.5 10.8 L2.2 5.5 L5.3 5.5 Z" fill="#25dcee"/><path d="M0.5 10 L4 10 L7.5 13 L11 10 L14.5 10 L14.5 14.5 L0.5 14.5 Z" fill="#25dcee"/></svg>
<div class="a samp" style="left:408.5px;top:521px;font-size:10.2px">MAT</div>
<div class="a sel" style="left:18.7px;top:544.2px;width:57.3px;height:14px">zoom to<i></i></div>
<div class="a sel" style="left:82.8px;top:544.2px;width:52.7px;height:14px">30s<i></i></div>
<div class="a" style="left:142.2px;top:542.7px;width:369.6px;height:17.5px;background:#fff;color:#8a8a8a;font-size:11.5px;line-height:17.5px;padding-left:4px;white-space:nowrap;overflow:hidden">Map ref location: type lat, lon &amp; name or click green markers</div>
<!-- control panel -->
<div class="a" style="left:885px;top:397px;width:291px;height:182px;background:#575757;border-radius:10px"></div>
<div class="a" style="left:894.8px;top:406.3px;width:72px;height:18.2px;border:1px solid #ddd;border-radius:2px;background:#000;padding:1px"><div style="background:#fff;width:100%;height:100%;position:relative"><div style="position:absolute;left:0;top:0;width:54px;height:100%;background:#3a6fd8"></div><div style="position:absolute;left:1px;top:0;font-size:14.7px;line-height:15px;color:#fff">7910.00</div></div></div>
<div class="a sel" style="left:978px;top:408.5px;width:77px;height:13.5px;text-align:left;padding-left:5px">select band<i></i></div>
<div class="a sel" style="left:1067.6px;top:408.5px;width:80px;height:13.5px;text-align:center;padding-right:3px;font-size:10.2px">TDoA<i></i></div>
<svg class="a" style="left:1151px;top:405px" width="20" height="20"><circle cx="10" cy="9.8" r="8.6" fill="none" stroke="#e0e0e0" stroke-width="1.6"/><path d="M7.5 5.5 L14 9.8 L7.5 14 Z" fill="#e0e0e0"/></svg>
<div class="a" style="left:893px;top:431px;width:14px;height:2.5px;background:#eee"></div><div class="a" style="left:893px;top:436px;width:14px;height:2.5px;background:#eee"></div><div class="a" style="left:893px;top:441px;width:14px;height:2.5px;background:#eee"></div>
<div class="a" style="left:910px;top:429px;width:16px;height:16px;border-radius:50%;background:#22dcee;color:#223;font-size:12px;line-height:16px;text-align:center">A</div>
<div class="a" style="left:929.5px;top:432px;width:11px;height:10.5px;background:#22dd22"><svg width="11" height="11"><path d="M2.5 8.5 L8 3 M4.5 3 L8 3 L8 6.5" stroke="#114411" stroke-width="1.4" fill="none"/></svg></div>
<div class="a" style="left:944.5px;top:430.5px;width:12px;height:14px;background:#3c3c3c;border-radius:4px;color:#22cc22;font-size:11px;line-height:14px;text-align:center">9</div>
<svg class="a" style="left:0;top:0" width="1200" height="579" pointer-events="none"><circle cx="968" cy="437" r="7.6" fill="none" stroke="#ddd" stroke-width="1.4"/><path d="M963 437 L973 437" stroke="#ddd" stroke-width="1.5"/></svg>
<svg class="a" style="left:0;top:0" width="1200" height="579" pointer-events="none"><circle cx="984" cy="437" r="7.6" fill="none" stroke="#ddd" stroke-width="1.4"/><path d="M979 437 L989 437" stroke="#ddd" stroke-width="1.5"/></svg>
<svg class="a" style="left:0;top:0" width="1200" height="579" pointer-events="none"><circle cx="999.5" cy="437" r="7.6" fill="none" stroke="#ddd" stroke-width="1.4"/><path d="M994.5 437 L1004.5 437" stroke="#ddd" stroke-width="1.5"/></svg>
<svg class="a" style="left:0;top:0" width="1200" height="579" pointer-events="none"><circle cx="1015.3" cy="437" r="7.6" fill="none" stroke="#ddd" stroke-width="1.4"/><path d="M1010.3 437 L1020.3 437" stroke="#ddd" stroke-width="1.5"/><path d="M1015.3 432 L1015.3 442" stroke="#ddd" stroke-width="1.5"/></svg>
<svg class="a" style="left:0;top:0" width="1200" height="579" pointer-events="none"><circle cx="1030.8" cy="437" r="7.6" fill="none" stroke="#ddd" stroke-width="1.4"/><path d="M1025.8 437 L1035.8 437" stroke="#ddd" stroke-width="1.5"/><path d="M1030.8 432 L1030.8 442" stroke="#ddd" stroke-width="1.5"/></svg>
<svg class="a" style="left:0;top:0" width="1200" height="579" pointer-events="none"><circle cx="1046.3" cy="437" r="7.6" fill="none" stroke="#ddd" stroke-width="1.4"/><path d="M1041.3 437 L1051.3 437" stroke="#ddd" stroke-width="1.5"/><path d="M1046.3 432 L1046.3 442" stroke="#ddd" stroke-width="1.5"/></svg>
<div class="a mb" style="left:1062.5px;top:429.5px;width:57.5px;height:16px;font-size:11px;line-height:16px">Spectrum</div>
<svg class="a" style="left:1126px;top:428px" width="18" height="18"><path d="M14.5 6 A6.2 6.2 0 1 0 14.8 11.5" stroke="#e8245a" stroke-width="2.6" fill="none"/><path d="M11 2.5 L16.5 2.5 L16.5 8 Z" fill="#e8245a"/></svg>
<svg class="a" style="left:1150px;top:428px" width="19" height="18"><path d="M1 6 L4.5 6 L9.5 1.5 L9.5 16.5 L4.5 12 L1 12 Z" fill="#22dd22"/><path d="M11.5 5.5 Q13.5 9 11.5 12.5 M14 3 Q18 9 14 15" stroke="#22dd22" stroke-width="1.8" fill="none"/></svg>
<div class="a mb" style="left:894px;top:452.5px;width:23.3px;color:#fff">AM</div>
<div class="a mb" style="left:924.3px;top:452.5px;width:31.9px;color:#fff">SAM</div>
<div class="a mb" style="left:962.4px;top:452.5px;width:32.6px;color:#fff">DRM</div>
<div class="a mb" style="left:1000.8px;top:452.5px;width:28.0px;color:#fff">LSB</div>
<div class="a mb" style="left:1035.9px;top:452.5px;width:29.3px;color:#22dd22">USB</div>
<div class="a mb" style="left:1072.3px;top:452.5px;width:25.4px;color:#fff">CW</div>
<div class="a mb" style="left:1104px;top:452.5px;width:38.8px;color:#fff">NBFM</div>
<div class="a mb" style="left:1149px;top:452.5px;width:21.5px;color:#fff">IQ</div>
<div class="a ib" style="left:894px;top:474.7px"><svg width="32" height="31"><circle cx="18" cy="13.5" r="9.3" fill="none" stroke="#fff" stroke-width="1.9"/><path d="M11.5 20 L3.5 28" stroke="#fff" stroke-width="2.4"/><path d="M13 13.5 L23 13.5 M18 8.5 L18 18.5" stroke="#fff" stroke-width="1.9"/></svg></div>
<div class="a ib" style="left:934.3px;top:474.7px"><svg width="32" height="31"><circle cx="18" cy="13.5" r="9.3" fill="none" stroke="#fff" stroke-width="1.9"/><path d="M11.5 20 L3.5 28" stroke="#fff" stroke-width="2.4"/><path d="M13 13.5 L23 13.5" stroke="#fff" stroke-width="1.9"/></svg></div>
<div class="a ib" style="left:975px;top:474.7px"><svg width="32" height="31"><g stroke="#f0a020" stroke-width="2" fill="none"><path d="M27 4 L19 12 M19 6.5 L19 12 L24.5 12"/><path d="M5 27 L13 19 M7.5 19 L13 19 L13 24.5"/></g></svg></div>
<div class="a ib" style="left:1015.8px;top:474.7px"><svg width="32" height="31"><g stroke="#fff" stroke-width="1.8" fill="none"><path d="M19 12 L27 4 M21 4 L27 4 L27 10"/><path d="M13 19 L5 27 M5 21 L5 27 L11 27"/></g></svg></div>
<div class="a ib" style="left:1056.4px;top:474.7px"><svg width="32" height="31"><g stroke="#fff" stroke-width="1.8" fill="none"><path d="M6 12.5 L26 12.5 M22 9 L26 12.5"/><path d="M26 18.5 L6 18.5 M10 22 L6 18.5"/></g></svg></div>
<div class="a ib" style="left:1097.8px;top:474.7px"><svg width="32" height="31"><circle cx="16" cy="15.5" r="12" fill="none" stroke="#fff" stroke-width="1.8"/><path d="M18.5 9.5 L12.5 15.5 L18.5 21.5" stroke="#fff" stroke-width="1.8" fill="none"/></svg></div>
<div class="a ib" style="left:1138.2px;top:474.7px"><svg width="32" height="31"><circle cx="16" cy="15.5" r="12" fill="none" stroke="#fff" stroke-width="1.8"/><path d="M13.5 9.5 L19.5 15.5 L13.5 21.5" stroke="#fff" stroke-width="1.8" fill="none"/></svg></div>
<div class="a tb" style="left:893.5px;top:513px;width:34.8px;background:#4caf50;color:#eee;font-weight:normal">RF</div>
<div class="a tb" style="left:933.6px;top:513px;width:35.2px;background:#e91e63;color:#eee;font-weight:normal">WF9</div>
<div class="a tb" style="left:973.8px;top:513px;width:35.4px;background:#2196f3;color:#eee;font-weight:normal">Audio</div>
<div class="a tb" style="left:1014px;top:513px;width:35.2px;background:#9c27b0;color:#eee;font-weight:normal">AGC</div>
<div class="a tb" style="left:1054px;top:513px;width:35.3px;background:#00e5ff;color:#166;font-weight:normal">User</div>
<div class="a tb" style="left:1094.4px;top:513px;width:35.4px;background:#ffeb3b;color:#333;font-weight:normal">Stat</div>
<div class="a tb" style="left:1134.5px;top:513px;width:35.2px;background:#000;color:#fff;font-weight:bold">Off</div>
<div class="a" style="left:894px;top:539px;width:276px;height:28.5px;background:#7a7a7a;border-radius:4px"></div>
<div class="a" style="left:885px;top:567.5px;width:291px;height:8px;background:#4b4b4b;border-radius:0 0 10px 10px"></div>
<div class="a" style="left:896.3px;top:556px;width:243px;height:5.5px;background:#000"></div>
<div class="a" style="left:896.3px;top:556.5px;width:53px;height:5px;background:#22ee22"></div>
<div class="a" style="left:896.3px;top:554.5px;width:43.5px;height:2px;background:#fff"></div>
<div class="a tk" style="left:908.2px"></div><div class="a sm" style="left:899.2px;top:542px">S1</div>
<div class="a tk" style="left:932.6px"></div><div class="a sm" style="left:923.6px;top:542px">S3</div>
<div class="a tk" style="left:956.5px"></div><div class="a sm" style="left:947.5px;top:542px">S5</div>
<div class="a tk" style="left:980.0px"></div><div class="a sm" style="left:971.0px;top:542px">S7</div>
<div class="a tk" style="left:1004.0px"></div><div class="a sm" style="left:995.0px;top:542px">S9</div>
<div class="a tk" style="left:1023.5px"></div><div class="a sm" style="left:1014.5px;top:542px">+10</div>
<div class="a tk" style="left:1044.0px"></div><div class="a sm" style="left:1035.0px;top:542px">+20</div>
<div class="a tk" style="left:1083.6px"></div><div class="a sm" style="left:1074.6px;top:542px">+40</div>
<div class="a tk" style="left:1123.7px"></div><div class="a sm" style="left:1114.7px;top:542px">+60</div>
<div class="a" style="left:1140px;top:541px;width:28px;color:#eee;font-size:11px;line-height:12px;text-align:right">-101</div>
<div class="a" style="left:1140px;top:553px;width:28px;color:#eee;font-size:11px;line-height:12px;text-align:right">dBm</div>
</body></html>
